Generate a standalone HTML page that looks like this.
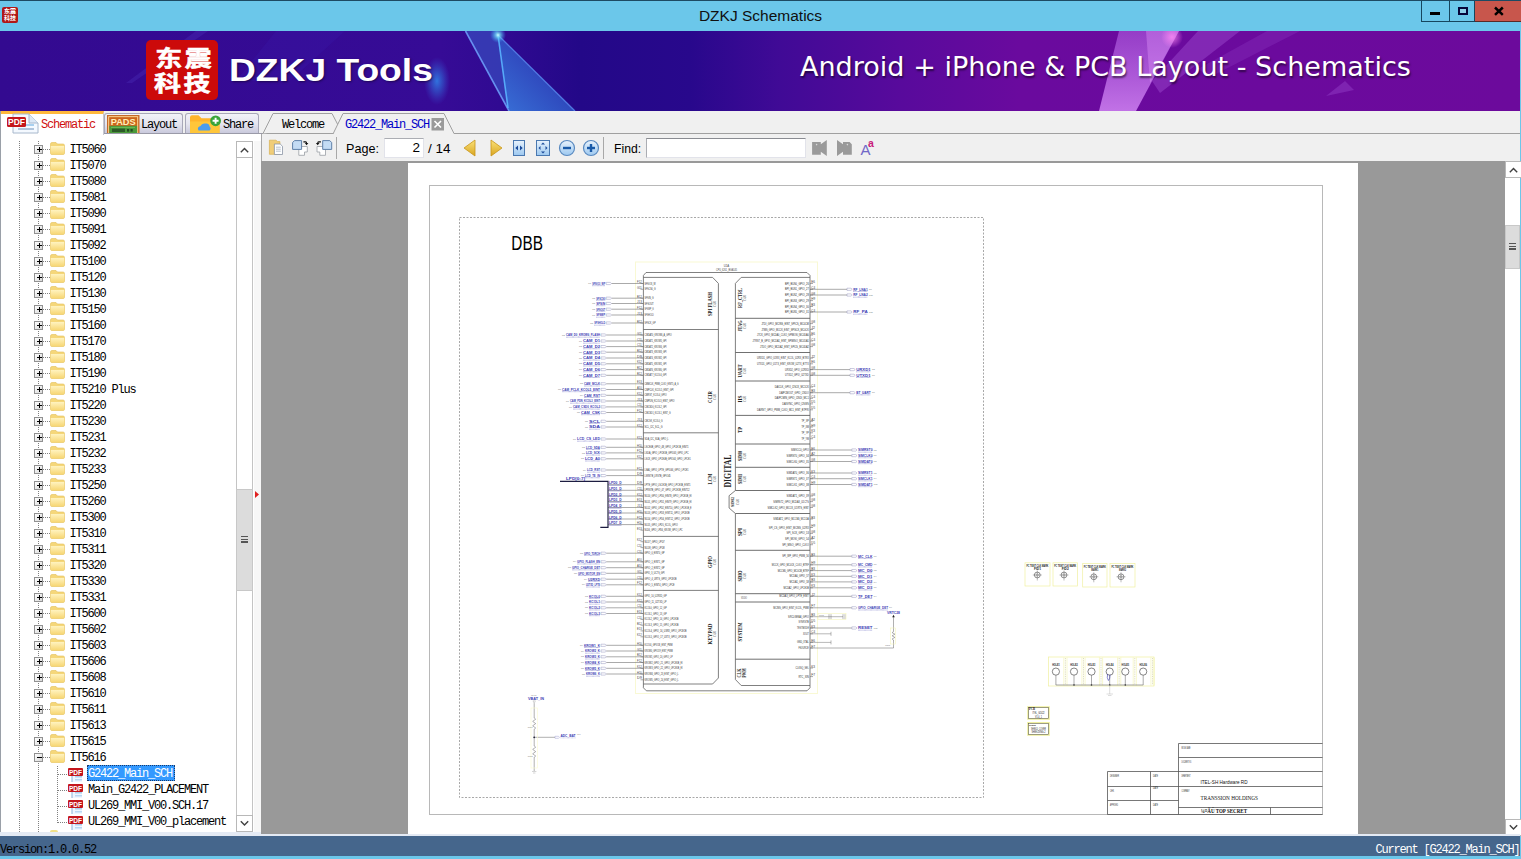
<!DOCTYPE html><html><head><meta charset="utf-8"><title>DZKJ Schematics</title><style>
html,body{margin:0;padding:0}
body{width:1521px;height:859px;overflow:hidden;position:relative;background:#6bc7ea;font-family:"Liberation Sans",sans-serif;}
.abs{position:absolute}
.mono{font-family:"Liberation Mono",monospace;font-size:12px;letter-spacing:-1.2px;white-space:nowrap;line-height:16px}
#titlebar{left:0;top:0;width:1521px;height:31px;background:#6bc7ea;border-top:1px solid #1d4a63;box-sizing:border-box}
#title{left:0;top:7px;width:1521px;text-align:center;font-size:15.5px;color:#101010;line-height:18px}
#banner{left:0;top:31px;width:1520px;height:80px;overflow:hidden;background:linear-gradient(90deg,#330a90 0,#360b96 440px,#300a92 500px,#230888 580px,#28088c 690px,#400a96 780px,#580a9c 900px,#6a0a9e 1020px,#6c0a9c 1520px)}
#main{left:0;top:111px;width:1520px;height:725px;background:#f0f0f0}
#status{left:0;top:836px;width:1520px;height:20px;background:#45668c}
</style></head><body>
<div class="abs" id="titlebar"></div>
<div class="abs" id="title">DZKJ Schematics</div>
<div class="abs" style="left:2px;top:7px;width:16px;height:16px;background:#b01818;border-radius:2px;color:#fff;font:bold 6px/7px 'Liberation Sans','Noto Sans CJK SC',sans-serif;text-align:center;overflow:hidden;padding-top:1px;box-sizing:border-box"><div style="transform:scale(1.0);letter-spacing:0">东震<br>科技</div></div>
<div class="abs" style="left:1421px;top:1px;width:54px;height:21px;border:1px solid #16465e;border-top:none;box-sizing:border-box"></div>
<div class="abs" style="left:1449px;top:1px;width:1px;height:21px;background:#16465e"></div>
<div class="abs" style="left:1475px;top:1px;width:46px;height:21px;background:#c8564c;border-bottom:1px solid #5a2a26;box-sizing:border-box"></div>
<div class="abs" style="left:1430px;top:12px;width:10px;height:3px;background:#000"></div>
<div class="abs" style="left:1458px;top:7px;width:10px;height:8px;border:2px solid #06063a;box-sizing:border-box;background:#8fd0ea"></div>
<svg class="abs" style="left:1493px;top:6px" width="12" height="10" viewBox="0 0 12 10"><path d="M2 1.5 L9.8 8.8 M9.8 1.5 L2 8.8" stroke="#000" stroke-width="2.5" fill="none"/></svg>
<div class="abs" id="banner">
<svg class="abs" style="left:0;top:0" width="1520" height="80" viewBox="0 0 1520 80"><defs><linearGradient id="g1" x1="1" y1="0" x2="0" y2="1"><stop offset="0" stop-color="#2a44c0" stop-opacity=".6"/><stop offset="1" stop-color="#3a84e4" stop-opacity=".85"/></linearGradient><radialGradient id="g5"><stop offset="0" stop-color="#c8ffff" stop-opacity="1"/><stop offset=".35" stop-color="#6ad8f8" stop-opacity=".7"/><stop offset="1" stop-color="#3aa0ff" stop-opacity="0"/></radialGradient><linearGradient id="g2" x1="0" y1="0" x2="0" y2="1"><stop offset="0" stop-color="#c070f0" stop-opacity=".5"/><stop offset="1" stop-color="#d78cf8" stop-opacity=".8"/></linearGradient><radialGradient id="g3"><stop offset="0" stop-color="#2f8cf0" stop-opacity=".8"/><stop offset=".5" stop-color="#2f80e8" stop-opacity=".4"/><stop offset="1" stop-color="#3a60e0" stop-opacity="0"/></radialGradient><radialGradient id="g4"><stop offset="0" stop-color="#ff8af4" stop-opacity=".8"/><stop offset="1" stop-color="#ff8af4" stop-opacity="0"/></radialGradient></defs><polygon points="196,0 208,0 132,52 126,52" fill="#5a4ad0" opacity=".22"/><polygon points="276,0 345,0 290,50 236,50" fill="#3a22b0" opacity=".22"/><ellipse cx="437" cy="50" rx="13" ry="24" fill="url(#g3)"/><polygon points="465.5,0 497.5,0 498,4 507.3,74 509,80" fill="#3a5ecc" opacity=".55"/><polygon points="498,4 575,80 509,80 507.3,74" fill="url(#g1)"/><path d="M465.5 0 L509 80" stroke="#6c9cf8" stroke-width="1.6" opacity=".9" fill="none"/><path d="M498 4 L508 77" stroke="#5ab4ff" stroke-width="1.6" opacity=".9" fill="none"/><path d="M498 4 L575 80" stroke="#5a8cf0" stroke-width="1.3" opacity=".8" fill="none"/><circle cx="498" cy="4" r="8" fill="url(#g5)"/><polygon points="1119,0 1179,0 1136,80 1099,80" fill="url(#g2)"/><polygon points="1146,0 1179,0 1150,52" fill="#e9a0ff" opacity=".35"/><circle cx="1172" cy="6" r="11" fill="url(#g4)"/><polygon points="1198,0 1240,0 1160,62 1152,50" fill="#b060e0" opacity=".35"/><polygon points="1267,0 1300,0 1210,46 1198,38" fill="#a050d8" opacity=".22"/><polygon points="1326,65 1345,50 1354,59" fill="#9a48d0" opacity=".4"/></svg>
<div class="abs" style="left:146px;top:9px;width:72px;height:60px;background:#cc0a0a;border-radius:5px"></div>
<div class="abs" style="left:133.5px;top:10.2px;width:100px;height:60.4px;color:#fff;font:bold 27px/30.2px 'Liberation Sans','Noto Sans CJK SC',sans-serif;letter-spacing:2.6px;text-indent:2.6px;text-align:center;white-space:nowrap;transform:scaleY(.82);transform-origin:50% 50%;-webkit-text-stroke:.7px #fff">东震<br>科技</div>
<div class="abs" id="dzkj" style="left:229.4px;top:18.5px;color:#fff;font:bold 32px/40px 'Liberation Sans',sans-serif;white-space:nowrap;transform:scaleX(1.162);transform-origin:0 50%;text-shadow:1px 1px 2px rgba(0,0,0,.45)">DZKJ Tools</div>
<div class="abs" id="slogan" style="left:800px;top:16px;color:#fff;font:27px/40px 'DejaVu Sans','Liberation Sans',sans-serif;letter-spacing:0.02px;white-space:nowrap;text-shadow:1px 2px 2px rgba(0,0,0,.55)">Android + iPhone &amp; PCB Layout - Schematics</div>
</div>
<div class="abs" id="main"></div>
<div class="abs" style="left:0;top:134px;width:254px;height:698px;background:#fff"></div>
<div class="abs" style="left:254px;top:134px;width:7px;height:7px;background:#fff"></div>
<div class="abs" style="left:0;top:111px;width:1px;height:721px;background:#9aa0a8"></div>
<div class="abs" style="left:1px;top:111px;width:103px;height:24px;background:#fff;border-top:3px solid #ffb83c;box-sizing:border-box;border-right:1px solid #c8c8d0"></div>
<div class="abs mono" style="left:41px;top:116.5px;color:#d01010">Schematic</div>
<svg class="abs" style="left:6px;top:112px" width="36" height="22" viewBox="0 0 36 22"><path d="M7 2 H23 L32 11 V21 H7 Z" fill="#f4f9ff" stroke="#a8b8cc" stroke-width="1"/><path d="M23 2 V11 H32" fill="#dbe8f6" stroke="#a8b8cc" stroke-width="1"/><rect x="12" y="12" width="16" height="2" fill="#a8d0f0"/><rect x="12" y="16" width="16" height="2" fill="#b0c4dc"/><rect x="1" y="5" width="19" height="10" rx="1.5" fill="#c4161c"/><text x="10.5" y="13" font-family="Liberation Sans, sans-serif" font-weight="bold" font-size="8.5" fill="#fff" text-anchor="middle">PDF</text></svg>
<div class="abs" style="left:104px;top:113px;width:79px;height:21px;border:1px solid #a8a8b8;border-bottom:none;border-radius:3px 3px 0 0;background:linear-gradient(#f2f2f8,#e4e4ee 50%,#c6c6da);box-sizing:border-box"></div>
<div class="abs" style="left:185px;top:113px;width:74px;height:21px;border:1px solid #a8a8b8;border-bottom:none;border-radius:3px 3px 0 0;background:linear-gradient(#f2f2f8,#e4e4ee 50%,#c6c6da);box-sizing:border-box"></div>
<div class="abs mono" style="left:141px;top:117px;color:#000">Layout</div>
<div class="abs mono" style="left:223px;top:117px;color:#000">Share</div>
<svg class="abs" style="left:107px;top:115px" width="33" height="19" viewBox="0 0 33 19"><rect x="0.5" y="0.5" width="31.5" height="20" fill="#cc641c" stroke="#c46a28"/><rect x="1.7" y="1.7" width="29" height="18" fill="none" stroke="#ffe2a0" stroke-width=".9"/><text x="16.2" y="9.6" font-family="Liberation Sans, sans-serif" font-weight="bold" font-size="9.6" fill="#ffeeb8" text-anchor="middle" textLength="25" lengthAdjust="spacingAndGlyphs">PADS</text><rect x="2.3" y="10.8" width="27.8" height="8.2" fill="#4a9a3a"/><rect x="5" y="13.6" width="13" height="3.4" fill="#2c5a28"/><rect x="20" y="14" width="2.2" height="2.6" fill="#234a22"/><rect x="23.5" y="14" width="2.2" height="2.6" fill="#234a22"/><path d="M4 12.4 H28" stroke="#7ac060" stroke-width=".8"/></svg>
<svg class="abs" style="left:189px;top:114px" width="34" height="20" viewBox="0 0 34 20"><path d="M1 3.3 Q1 1.3 3 1.3 H9.5 L12.5 4.3 H28 Q30.5 4.3 30.5 6.5 V20 H1 Z" fill="#ffb42c"/><path d="M1 7.5 H30.5 V20 H1 Z" fill="#ffc63a"/><path d="M9.5 16.6 Q7.5 13.2 11.5 12 Q13 8.8 16.5 9.6 Q20 9 20.6 12.4 Q22.6 14.2 20.6 16.6 Z" fill="#4a9cee"/><circle cx="26.6" cy="6.8" r="5.4" fill="#3aa43a"/><path d="M26.6 3.8 V9.8 M23.6 6.8 H29.6" stroke="#fff" stroke-width="1.9"/></svg>
<div class="abs" style="left:262px;top:133px;width:1258px;height:1px;background:#a0a0a0"></div>
<svg class="abs" style="left:260px;top:111px" width="200" height="24" viewBox="0 0 200 24"><path d="M3 22.5 L13 2.5 H72 L78 14" fill="#f0f0f0" stroke="#a0a0a0" stroke-width="1"/><path d="M73 23 L83 2.5 H184 L194 22.5" fill="#f0f0f0" stroke="#a0a0a0" stroke-width="1"/><rect x="74" y="22" width="119.5" height="2" fill="#f0f0f0"/><rect x="171.5" y="7" width="12.5" height="12.5" fill="#9a9a9a"/><path d="M174.5 10 L181 16.5 M181 10 L174.5 16.5" stroke="#fff" stroke-width="1.6"/></svg>
<div class="abs mono" style="left:282px;top:117px;color:#000">Welcome</div>
<div class="abs mono" style="left:345px;top:117px;color:#0000c8">G2422_Main_SCH</div>
<div class="abs" style="left:262px;top:134px;width:1258px;height:27px;background:#f0f0f0"></div>
<div class="abs" style="left:346px;top:141px;font:13.5px/16px 'Liberation Sans',sans-serif;color:#000;white-space:nowrap;font-size:12.6px">Page:</div>
<div class="abs" style="left:384px;top:138px;width:40px;height:20px;background:#fff;border:1px solid #abadb3;border-color:#abadb3 #e2e3ea #e2e3ea #e2e3ea;box-sizing:border-box"></div>
<div class="abs" style="left:384px;top:140px;width:36px;text-align:right;font:13.5px/16px 'Liberation Sans',sans-serif;color:#000;white-space:nowrap">2</div>
<div class="abs" style="left:428px;top:141px;font:13.5px/16px 'Liberation Sans',sans-serif;color:#000;white-space:nowrap">/ 14</div>
<div class="abs" style="left:336px;top:137px;width:1px;height:22px;background:#a8a8a8"></div>
<div class="abs" style="left:603px;top:137px;width:1px;height:22px;background:#a8a8a8"></div>
<div class="abs" style="left:614px;top:141px;font:13.5px/16px 'Liberation Sans',sans-serif;color:#000;white-space:nowrap;font-size:12.2px">Find:</div>
<div class="abs" style="left:646px;top:138px;width:160px;height:20px;background:#fff;border:1px solid #abadb3;border-color:#8a8c92 #e2e3ea #e2e3ea #abadb3;box-sizing:border-box"></div>
<svg class="abs" style="left:262px;top:134px" width="640" height="27" viewBox="0 0 640 27"><defs><linearGradient id="gy" x1="0" y1="0" x2="0" y2="1"><stop offset="0" stop-color="#fbe27a"/><stop offset="1" stop-color="#d9a520"/></linearGradient><linearGradient id="gb" x1="0" y1="0" x2="0" y2="1"><stop offset="0" stop-color="#e8f2fc"/><stop offset="1" stop-color="#9cc8f0"/></linearGradient></defs><path d="M7.4 6.2 H14 L15.5 7.6 H17.9 V20.3 H7.4 Z" fill="#f0cd78" stroke="#d8b050" stroke-width=".7"/><path d="M12.4 10 H18.2 L20.5 12.3 V20.5 H12.4 Z" fill="#fdfeff" stroke="#8a94a4" stroke-width=".8"/><path d="M14 13.2 H18.8 M14 15.2 H18.8 M14 17.2 H18.8" stroke="#a8b4c4" stroke-width=".8"/><path d="M36.8 12.5 H45.3 V18 H42.5 V21.3 H36.8 Z" fill="#fff" stroke="#a4a8ae" stroke-width=".9"/><path d="M32.5 6.6 H39.6 V15.4 H30.6 V8.6 Z" fill="#c4dcf4" stroke="#5f80a8" stroke-width="1"/><path d="M41.4 7.9 H43.6 Q44.6 7.9 44.6 9.2" stroke="#111" stroke-width="1.1" fill="none"/><path d="M42.8 9 H46.4 L44.6 11.2 Z" fill="#111"/><path d="M63.5 12.5 H55 V18 H57.8 V21.3 H63.5 Z" fill="#fff" stroke="#a4a8ae" stroke-width=".9"/><path d="M60.7 6.6 H67.8 L69.7 8.6 V15.4 H60.7 Z" fill="#c4dcf4" stroke="#5f80a8" stroke-width="1"/><path d="M58.9 7.9 H56.7 Q55.7 7.9 55.7 9.2" stroke="#111" stroke-width="1.1" fill="none"/><path d="M57.5 9 H53.9 L55.7 11.2 Z" fill="#111"/><path d="M213 6 V22 L202 14 Z" fill="url(#gy)" stroke="#c8961a" stroke-width=".8"/><path d="M229 6 V22 L240 14 Z" fill="url(#gy)" stroke="#c8961a" stroke-width=".8"/><rect x="251.5" y="6.5" width="11" height="15" fill="url(#gb)" stroke="#4a78b0" stroke-width="1"/><path d="M256 11.5 V16.5 L253.3 14 Z M258 11.5 V16.5 L260.7 14 Z" fill="#1a4a9a"/><rect x="274.5" y="6.5" width="13" height="15" fill="url(#gb)" stroke="#4a78b0" stroke-width="1"/><path d="M281 8.5 L283 10.5 H279 Z M281 19.5 L283 17.5 H279 Z M276.5 14 L278.5 12 V16 Z M285.5 14 L283.5 12 V16 Z" fill="#1a4a9a"/><circle cx="305" cy="14" r="7.5" fill="url(#gb)" stroke="#5a8ac0" stroke-width="1.2"/><rect x="301" y="12.8" width="8" height="2.4" fill="#1a5aa8"/><circle cx="329" cy="14" r="7.5" fill="url(#gb)" stroke="#5a8ac0" stroke-width="1.2"/><rect x="325" y="12.8" width="8" height="2.4" fill="#1a5aa8"/><rect x="327.8" y="10" width="2.4" height="8" fill="#1a5aa8"/><path d="M550.1 8 H558.8 V10.2 L564.8 6 V22 L558.8 17.8 V20.7 H550.1 Z" fill="#9a9a9a"/><circle cx="554.6" cy="10.6" r=".8" fill="#d8d8d8"/><path d="M575 6 L581 10.2 V8 H587.6 L589.8 10.2 V20.7 H581 V17.8 L575 22 Z" fill="#9a9a9a"/><circle cx="585.4" cy="10.6" r=".8" fill="#d8d8d8"/><text x="598.6" y="21.2" font-family="Liberation Sans, sans-serif" font-size="15" fill="#7268c8">A</text><text x="606" y="13.4" font-family="Liberation Sans, sans-serif" font-size="10.5" font-weight="bold" fill="#c8207a">a</text></svg>
<div class="abs" id="tree" style="left:1px;top:141px;width:235px;height:691px;overflow:hidden;background:#fff">
<div class="abs" style="left:18px;top:0;width:1px;height:691px;background-image:linear-gradient(#808080 50%,transparent 50%);background-size:1px 2px"></div>
<div class="abs" style="left:37px;top:0;width:1px;height:691px;background-image:linear-gradient(#808080 50%,transparent 50%);background-size:1px 2px"></div>
<svg width="0" height="0" style="position:absolute"><defs><linearGradient id="gf" x1="0" y1="0" x2="0" y2="1"><stop offset="0" stop-color="#fff3c0"/><stop offset="1" stop-color="#f7d774"/></linearGradient></defs></svg>
<div class="abs" style="left:42px;top:8px;width:7px;height:1px;background-image:linear-gradient(90deg,#808080 50%,transparent 50%);background-size:2px 1px"></div>
<div class="abs" style="left:33px;top:4px;width:9px;height:9px;border:1px solid #919191;box-sizing:border-box;background:linear-gradient(135deg,#fff,#d8d8d8)"><div class="abs" style="left:2px;top:3px;width:5px;height:1px;background:#000"></div><div class="abs" style="left:4px;top:1px;width:1px;height:5px;background:#000"></div></div>
<svg class="abs" style="left:49px;top:1px" width="15" height="13" viewBox="0 0 15 13"><path d="M0.5 2 Q0.5 0.5 2 0.5 H6 L7.5 2 H13 Q14.5 2 14.5 3.5 V11 Q14.5 12.5 13 12.5 H2 Q0.5 12.5 0.5 11 Z" fill="#f5d77a" stroke="#e4c057" stroke-width=".6"/><path d="M0.8 4 H14.2 V11 Q14.2 12.2 13 12.2 H2 Q0.8 12.2 0.8 11 Z" fill="url(#gf)"/></svg>
<div class="abs mono" style="left:68.5px;top:1px;color:#000">IT5060</div>
<div class="abs" style="left:42px;top:24px;width:7px;height:1px;background-image:linear-gradient(90deg,#808080 50%,transparent 50%);background-size:2px 1px"></div>
<div class="abs" style="left:33px;top:20px;width:9px;height:9px;border:1px solid #919191;box-sizing:border-box;background:linear-gradient(135deg,#fff,#d8d8d8)"><div class="abs" style="left:2px;top:3px;width:5px;height:1px;background:#000"></div><div class="abs" style="left:4px;top:1px;width:1px;height:5px;background:#000"></div></div>
<svg class="abs" style="left:49px;top:17px" width="15" height="13" viewBox="0 0 15 13"><path d="M0.5 2 Q0.5 0.5 2 0.5 H6 L7.5 2 H13 Q14.5 2 14.5 3.5 V11 Q14.5 12.5 13 12.5 H2 Q0.5 12.5 0.5 11 Z" fill="#f5d77a" stroke="#e4c057" stroke-width=".6"/><path d="M0.8 4 H14.2 V11 Q14.2 12.2 13 12.2 H2 Q0.8 12.2 0.8 11 Z" fill="url(#gf)"/></svg>
<div class="abs mono" style="left:68.5px;top:17px;color:#000">IT5070</div>
<div class="abs" style="left:42px;top:40px;width:7px;height:1px;background-image:linear-gradient(90deg,#808080 50%,transparent 50%);background-size:2px 1px"></div>
<div class="abs" style="left:33px;top:36px;width:9px;height:9px;border:1px solid #919191;box-sizing:border-box;background:linear-gradient(135deg,#fff,#d8d8d8)"><div class="abs" style="left:2px;top:3px;width:5px;height:1px;background:#000"></div><div class="abs" style="left:4px;top:1px;width:1px;height:5px;background:#000"></div></div>
<svg class="abs" style="left:49px;top:33px" width="15" height="13" viewBox="0 0 15 13"><path d="M0.5 2 Q0.5 0.5 2 0.5 H6 L7.5 2 H13 Q14.5 2 14.5 3.5 V11 Q14.5 12.5 13 12.5 H2 Q0.5 12.5 0.5 11 Z" fill="#f5d77a" stroke="#e4c057" stroke-width=".6"/><path d="M0.8 4 H14.2 V11 Q14.2 12.2 13 12.2 H2 Q0.8 12.2 0.8 11 Z" fill="url(#gf)"/></svg>
<div class="abs mono" style="left:68.5px;top:33px;color:#000">IT5080</div>
<div class="abs" style="left:42px;top:56px;width:7px;height:1px;background-image:linear-gradient(90deg,#808080 50%,transparent 50%);background-size:2px 1px"></div>
<div class="abs" style="left:33px;top:52px;width:9px;height:9px;border:1px solid #919191;box-sizing:border-box;background:linear-gradient(135deg,#fff,#d8d8d8)"><div class="abs" style="left:2px;top:3px;width:5px;height:1px;background:#000"></div><div class="abs" style="left:4px;top:1px;width:1px;height:5px;background:#000"></div></div>
<svg class="abs" style="left:49px;top:49px" width="15" height="13" viewBox="0 0 15 13"><path d="M0.5 2 Q0.5 0.5 2 0.5 H6 L7.5 2 H13 Q14.5 2 14.5 3.5 V11 Q14.5 12.5 13 12.5 H2 Q0.5 12.5 0.5 11 Z" fill="#f5d77a" stroke="#e4c057" stroke-width=".6"/><path d="M0.8 4 H14.2 V11 Q14.2 12.2 13 12.2 H2 Q0.8 12.2 0.8 11 Z" fill="url(#gf)"/></svg>
<div class="abs mono" style="left:68.5px;top:49px;color:#000">IT5081</div>
<div class="abs" style="left:42px;top:72px;width:7px;height:1px;background-image:linear-gradient(90deg,#808080 50%,transparent 50%);background-size:2px 1px"></div>
<div class="abs" style="left:33px;top:68px;width:9px;height:9px;border:1px solid #919191;box-sizing:border-box;background:linear-gradient(135deg,#fff,#d8d8d8)"><div class="abs" style="left:2px;top:3px;width:5px;height:1px;background:#000"></div><div class="abs" style="left:4px;top:1px;width:1px;height:5px;background:#000"></div></div>
<svg class="abs" style="left:49px;top:65px" width="15" height="13" viewBox="0 0 15 13"><path d="M0.5 2 Q0.5 0.5 2 0.5 H6 L7.5 2 H13 Q14.5 2 14.5 3.5 V11 Q14.5 12.5 13 12.5 H2 Q0.5 12.5 0.5 11 Z" fill="#f5d77a" stroke="#e4c057" stroke-width=".6"/><path d="M0.8 4 H14.2 V11 Q14.2 12.2 13 12.2 H2 Q0.8 12.2 0.8 11 Z" fill="url(#gf)"/></svg>
<div class="abs mono" style="left:68.5px;top:65px;color:#000">IT5090</div>
<div class="abs" style="left:42px;top:88px;width:7px;height:1px;background-image:linear-gradient(90deg,#808080 50%,transparent 50%);background-size:2px 1px"></div>
<div class="abs" style="left:33px;top:84px;width:9px;height:9px;border:1px solid #919191;box-sizing:border-box;background:linear-gradient(135deg,#fff,#d8d8d8)"><div class="abs" style="left:2px;top:3px;width:5px;height:1px;background:#000"></div><div class="abs" style="left:4px;top:1px;width:1px;height:5px;background:#000"></div></div>
<svg class="abs" style="left:49px;top:81px" width="15" height="13" viewBox="0 0 15 13"><path d="M0.5 2 Q0.5 0.5 2 0.5 H6 L7.5 2 H13 Q14.5 2 14.5 3.5 V11 Q14.5 12.5 13 12.5 H2 Q0.5 12.5 0.5 11 Z" fill="#f5d77a" stroke="#e4c057" stroke-width=".6"/><path d="M0.8 4 H14.2 V11 Q14.2 12.2 13 12.2 H2 Q0.8 12.2 0.8 11 Z" fill="url(#gf)"/></svg>
<div class="abs mono" style="left:68.5px;top:81px;color:#000">IT5091</div>
<div class="abs" style="left:42px;top:104px;width:7px;height:1px;background-image:linear-gradient(90deg,#808080 50%,transparent 50%);background-size:2px 1px"></div>
<div class="abs" style="left:33px;top:100px;width:9px;height:9px;border:1px solid #919191;box-sizing:border-box;background:linear-gradient(135deg,#fff,#d8d8d8)"><div class="abs" style="left:2px;top:3px;width:5px;height:1px;background:#000"></div><div class="abs" style="left:4px;top:1px;width:1px;height:5px;background:#000"></div></div>
<svg class="abs" style="left:49px;top:97px" width="15" height="13" viewBox="0 0 15 13"><path d="M0.5 2 Q0.5 0.5 2 0.5 H6 L7.5 2 H13 Q14.5 2 14.5 3.5 V11 Q14.5 12.5 13 12.5 H2 Q0.5 12.5 0.5 11 Z" fill="#f5d77a" stroke="#e4c057" stroke-width=".6"/><path d="M0.8 4 H14.2 V11 Q14.2 12.2 13 12.2 H2 Q0.8 12.2 0.8 11 Z" fill="url(#gf)"/></svg>
<div class="abs mono" style="left:68.5px;top:97px;color:#000">IT5092</div>
<div class="abs" style="left:42px;top:120px;width:7px;height:1px;background-image:linear-gradient(90deg,#808080 50%,transparent 50%);background-size:2px 1px"></div>
<div class="abs" style="left:33px;top:116px;width:9px;height:9px;border:1px solid #919191;box-sizing:border-box;background:linear-gradient(135deg,#fff,#d8d8d8)"><div class="abs" style="left:2px;top:3px;width:5px;height:1px;background:#000"></div><div class="abs" style="left:4px;top:1px;width:1px;height:5px;background:#000"></div></div>
<svg class="abs" style="left:49px;top:113px" width="15" height="13" viewBox="0 0 15 13"><path d="M0.5 2 Q0.5 0.5 2 0.5 H6 L7.5 2 H13 Q14.5 2 14.5 3.5 V11 Q14.5 12.5 13 12.5 H2 Q0.5 12.5 0.5 11 Z" fill="#f5d77a" stroke="#e4c057" stroke-width=".6"/><path d="M0.8 4 H14.2 V11 Q14.2 12.2 13 12.2 H2 Q0.8 12.2 0.8 11 Z" fill="url(#gf)"/></svg>
<div class="abs mono" style="left:68.5px;top:113px;color:#000">IT5100</div>
<div class="abs" style="left:42px;top:136px;width:7px;height:1px;background-image:linear-gradient(90deg,#808080 50%,transparent 50%);background-size:2px 1px"></div>
<div class="abs" style="left:33px;top:132px;width:9px;height:9px;border:1px solid #919191;box-sizing:border-box;background:linear-gradient(135deg,#fff,#d8d8d8)"><div class="abs" style="left:2px;top:3px;width:5px;height:1px;background:#000"></div><div class="abs" style="left:4px;top:1px;width:1px;height:5px;background:#000"></div></div>
<svg class="abs" style="left:49px;top:129px" width="15" height="13" viewBox="0 0 15 13"><path d="M0.5 2 Q0.5 0.5 2 0.5 H6 L7.5 2 H13 Q14.5 2 14.5 3.5 V11 Q14.5 12.5 13 12.5 H2 Q0.5 12.5 0.5 11 Z" fill="#f5d77a" stroke="#e4c057" stroke-width=".6"/><path d="M0.8 4 H14.2 V11 Q14.2 12.2 13 12.2 H2 Q0.8 12.2 0.8 11 Z" fill="url(#gf)"/></svg>
<div class="abs mono" style="left:68.5px;top:129px;color:#000">IT5120</div>
<div class="abs" style="left:42px;top:152px;width:7px;height:1px;background-image:linear-gradient(90deg,#808080 50%,transparent 50%);background-size:2px 1px"></div>
<div class="abs" style="left:33px;top:148px;width:9px;height:9px;border:1px solid #919191;box-sizing:border-box;background:linear-gradient(135deg,#fff,#d8d8d8)"><div class="abs" style="left:2px;top:3px;width:5px;height:1px;background:#000"></div><div class="abs" style="left:4px;top:1px;width:1px;height:5px;background:#000"></div></div>
<svg class="abs" style="left:49px;top:145px" width="15" height="13" viewBox="0 0 15 13"><path d="M0.5 2 Q0.5 0.5 2 0.5 H6 L7.5 2 H13 Q14.5 2 14.5 3.5 V11 Q14.5 12.5 13 12.5 H2 Q0.5 12.5 0.5 11 Z" fill="#f5d77a" stroke="#e4c057" stroke-width=".6"/><path d="M0.8 4 H14.2 V11 Q14.2 12.2 13 12.2 H2 Q0.8 12.2 0.8 11 Z" fill="url(#gf)"/></svg>
<div class="abs mono" style="left:68.5px;top:145px;color:#000">IT5130</div>
<div class="abs" style="left:42px;top:168px;width:7px;height:1px;background-image:linear-gradient(90deg,#808080 50%,transparent 50%);background-size:2px 1px"></div>
<div class="abs" style="left:33px;top:164px;width:9px;height:9px;border:1px solid #919191;box-sizing:border-box;background:linear-gradient(135deg,#fff,#d8d8d8)"><div class="abs" style="left:2px;top:3px;width:5px;height:1px;background:#000"></div><div class="abs" style="left:4px;top:1px;width:1px;height:5px;background:#000"></div></div>
<svg class="abs" style="left:49px;top:161px" width="15" height="13" viewBox="0 0 15 13"><path d="M0.5 2 Q0.5 0.5 2 0.5 H6 L7.5 2 H13 Q14.5 2 14.5 3.5 V11 Q14.5 12.5 13 12.5 H2 Q0.5 12.5 0.5 11 Z" fill="#f5d77a" stroke="#e4c057" stroke-width=".6"/><path d="M0.8 4 H14.2 V11 Q14.2 12.2 13 12.2 H2 Q0.8 12.2 0.8 11 Z" fill="url(#gf)"/></svg>
<div class="abs mono" style="left:68.5px;top:161px;color:#000">IT5150</div>
<div class="abs" style="left:42px;top:184px;width:7px;height:1px;background-image:linear-gradient(90deg,#808080 50%,transparent 50%);background-size:2px 1px"></div>
<div class="abs" style="left:33px;top:180px;width:9px;height:9px;border:1px solid #919191;box-sizing:border-box;background:linear-gradient(135deg,#fff,#d8d8d8)"><div class="abs" style="left:2px;top:3px;width:5px;height:1px;background:#000"></div><div class="abs" style="left:4px;top:1px;width:1px;height:5px;background:#000"></div></div>
<svg class="abs" style="left:49px;top:177px" width="15" height="13" viewBox="0 0 15 13"><path d="M0.5 2 Q0.5 0.5 2 0.5 H6 L7.5 2 H13 Q14.5 2 14.5 3.5 V11 Q14.5 12.5 13 12.5 H2 Q0.5 12.5 0.5 11 Z" fill="#f5d77a" stroke="#e4c057" stroke-width=".6"/><path d="M0.8 4 H14.2 V11 Q14.2 12.2 13 12.2 H2 Q0.8 12.2 0.8 11 Z" fill="url(#gf)"/></svg>
<div class="abs mono" style="left:68.5px;top:177px;color:#000">IT5160</div>
<div class="abs" style="left:42px;top:200px;width:7px;height:1px;background-image:linear-gradient(90deg,#808080 50%,transparent 50%);background-size:2px 1px"></div>
<div class="abs" style="left:33px;top:196px;width:9px;height:9px;border:1px solid #919191;box-sizing:border-box;background:linear-gradient(135deg,#fff,#d8d8d8)"><div class="abs" style="left:2px;top:3px;width:5px;height:1px;background:#000"></div><div class="abs" style="left:4px;top:1px;width:1px;height:5px;background:#000"></div></div>
<svg class="abs" style="left:49px;top:193px" width="15" height="13" viewBox="0 0 15 13"><path d="M0.5 2 Q0.5 0.5 2 0.5 H6 L7.5 2 H13 Q14.5 2 14.5 3.5 V11 Q14.5 12.5 13 12.5 H2 Q0.5 12.5 0.5 11 Z" fill="#f5d77a" stroke="#e4c057" stroke-width=".6"/><path d="M0.8 4 H14.2 V11 Q14.2 12.2 13 12.2 H2 Q0.8 12.2 0.8 11 Z" fill="url(#gf)"/></svg>
<div class="abs mono" style="left:68.5px;top:193px;color:#000">IT5170</div>
<div class="abs" style="left:42px;top:216px;width:7px;height:1px;background-image:linear-gradient(90deg,#808080 50%,transparent 50%);background-size:2px 1px"></div>
<div class="abs" style="left:33px;top:212px;width:9px;height:9px;border:1px solid #919191;box-sizing:border-box;background:linear-gradient(135deg,#fff,#d8d8d8)"><div class="abs" style="left:2px;top:3px;width:5px;height:1px;background:#000"></div><div class="abs" style="left:4px;top:1px;width:1px;height:5px;background:#000"></div></div>
<svg class="abs" style="left:49px;top:209px" width="15" height="13" viewBox="0 0 15 13"><path d="M0.5 2 Q0.5 0.5 2 0.5 H6 L7.5 2 H13 Q14.5 2 14.5 3.5 V11 Q14.5 12.5 13 12.5 H2 Q0.5 12.5 0.5 11 Z" fill="#f5d77a" stroke="#e4c057" stroke-width=".6"/><path d="M0.8 4 H14.2 V11 Q14.2 12.2 13 12.2 H2 Q0.8 12.2 0.8 11 Z" fill="url(#gf)"/></svg>
<div class="abs mono" style="left:68.5px;top:209px;color:#000">IT5180</div>
<div class="abs" style="left:42px;top:232px;width:7px;height:1px;background-image:linear-gradient(90deg,#808080 50%,transparent 50%);background-size:2px 1px"></div>
<div class="abs" style="left:33px;top:228px;width:9px;height:9px;border:1px solid #919191;box-sizing:border-box;background:linear-gradient(135deg,#fff,#d8d8d8)"><div class="abs" style="left:2px;top:3px;width:5px;height:1px;background:#000"></div><div class="abs" style="left:4px;top:1px;width:1px;height:5px;background:#000"></div></div>
<svg class="abs" style="left:49px;top:225px" width="15" height="13" viewBox="0 0 15 13"><path d="M0.5 2 Q0.5 0.5 2 0.5 H6 L7.5 2 H13 Q14.5 2 14.5 3.5 V11 Q14.5 12.5 13 12.5 H2 Q0.5 12.5 0.5 11 Z" fill="#f5d77a" stroke="#e4c057" stroke-width=".6"/><path d="M0.8 4 H14.2 V11 Q14.2 12.2 13 12.2 H2 Q0.8 12.2 0.8 11 Z" fill="url(#gf)"/></svg>
<div class="abs mono" style="left:68.5px;top:225px;color:#000">IT5190</div>
<div class="abs" style="left:42px;top:248px;width:7px;height:1px;background-image:linear-gradient(90deg,#808080 50%,transparent 50%);background-size:2px 1px"></div>
<div class="abs" style="left:33px;top:244px;width:9px;height:9px;border:1px solid #919191;box-sizing:border-box;background:linear-gradient(135deg,#fff,#d8d8d8)"><div class="abs" style="left:2px;top:3px;width:5px;height:1px;background:#000"></div><div class="abs" style="left:4px;top:1px;width:1px;height:5px;background:#000"></div></div>
<svg class="abs" style="left:49px;top:241px" width="15" height="13" viewBox="0 0 15 13"><path d="M0.5 2 Q0.5 0.5 2 0.5 H6 L7.5 2 H13 Q14.5 2 14.5 3.5 V11 Q14.5 12.5 13 12.5 H2 Q0.5 12.5 0.5 11 Z" fill="#f5d77a" stroke="#e4c057" stroke-width=".6"/><path d="M0.8 4 H14.2 V11 Q14.2 12.2 13 12.2 H2 Q0.8 12.2 0.8 11 Z" fill="url(#gf)"/></svg>
<div class="abs mono" style="left:68.5px;top:241px;color:#000">IT5210 Plus</div>
<div class="abs" style="left:42px;top:264px;width:7px;height:1px;background-image:linear-gradient(90deg,#808080 50%,transparent 50%);background-size:2px 1px"></div>
<div class="abs" style="left:33px;top:260px;width:9px;height:9px;border:1px solid #919191;box-sizing:border-box;background:linear-gradient(135deg,#fff,#d8d8d8)"><div class="abs" style="left:2px;top:3px;width:5px;height:1px;background:#000"></div><div class="abs" style="left:4px;top:1px;width:1px;height:5px;background:#000"></div></div>
<svg class="abs" style="left:49px;top:257px" width="15" height="13" viewBox="0 0 15 13"><path d="M0.5 2 Q0.5 0.5 2 0.5 H6 L7.5 2 H13 Q14.5 2 14.5 3.5 V11 Q14.5 12.5 13 12.5 H2 Q0.5 12.5 0.5 11 Z" fill="#f5d77a" stroke="#e4c057" stroke-width=".6"/><path d="M0.8 4 H14.2 V11 Q14.2 12.2 13 12.2 H2 Q0.8 12.2 0.8 11 Z" fill="url(#gf)"/></svg>
<div class="abs mono" style="left:68.5px;top:257px;color:#000">IT5220</div>
<div class="abs" style="left:42px;top:280px;width:7px;height:1px;background-image:linear-gradient(90deg,#808080 50%,transparent 50%);background-size:2px 1px"></div>
<div class="abs" style="left:33px;top:276px;width:9px;height:9px;border:1px solid #919191;box-sizing:border-box;background:linear-gradient(135deg,#fff,#d8d8d8)"><div class="abs" style="left:2px;top:3px;width:5px;height:1px;background:#000"></div><div class="abs" style="left:4px;top:1px;width:1px;height:5px;background:#000"></div></div>
<svg class="abs" style="left:49px;top:273px" width="15" height="13" viewBox="0 0 15 13"><path d="M0.5 2 Q0.5 0.5 2 0.5 H6 L7.5 2 H13 Q14.5 2 14.5 3.5 V11 Q14.5 12.5 13 12.5 H2 Q0.5 12.5 0.5 11 Z" fill="#f5d77a" stroke="#e4c057" stroke-width=".6"/><path d="M0.8 4 H14.2 V11 Q14.2 12.2 13 12.2 H2 Q0.8 12.2 0.8 11 Z" fill="url(#gf)"/></svg>
<div class="abs mono" style="left:68.5px;top:273px;color:#000">IT5230</div>
<div class="abs" style="left:42px;top:296px;width:7px;height:1px;background-image:linear-gradient(90deg,#808080 50%,transparent 50%);background-size:2px 1px"></div>
<div class="abs" style="left:33px;top:292px;width:9px;height:9px;border:1px solid #919191;box-sizing:border-box;background:linear-gradient(135deg,#fff,#d8d8d8)"><div class="abs" style="left:2px;top:3px;width:5px;height:1px;background:#000"></div><div class="abs" style="left:4px;top:1px;width:1px;height:5px;background:#000"></div></div>
<svg class="abs" style="left:49px;top:289px" width="15" height="13" viewBox="0 0 15 13"><path d="M0.5 2 Q0.5 0.5 2 0.5 H6 L7.5 2 H13 Q14.5 2 14.5 3.5 V11 Q14.5 12.5 13 12.5 H2 Q0.5 12.5 0.5 11 Z" fill="#f5d77a" stroke="#e4c057" stroke-width=".6"/><path d="M0.8 4 H14.2 V11 Q14.2 12.2 13 12.2 H2 Q0.8 12.2 0.8 11 Z" fill="url(#gf)"/></svg>
<div class="abs mono" style="left:68.5px;top:289px;color:#000">IT5231</div>
<div class="abs" style="left:42px;top:312px;width:7px;height:1px;background-image:linear-gradient(90deg,#808080 50%,transparent 50%);background-size:2px 1px"></div>
<div class="abs" style="left:33px;top:308px;width:9px;height:9px;border:1px solid #919191;box-sizing:border-box;background:linear-gradient(135deg,#fff,#d8d8d8)"><div class="abs" style="left:2px;top:3px;width:5px;height:1px;background:#000"></div><div class="abs" style="left:4px;top:1px;width:1px;height:5px;background:#000"></div></div>
<svg class="abs" style="left:49px;top:305px" width="15" height="13" viewBox="0 0 15 13"><path d="M0.5 2 Q0.5 0.5 2 0.5 H6 L7.5 2 H13 Q14.5 2 14.5 3.5 V11 Q14.5 12.5 13 12.5 H2 Q0.5 12.5 0.5 11 Z" fill="#f5d77a" stroke="#e4c057" stroke-width=".6"/><path d="M0.8 4 H14.2 V11 Q14.2 12.2 13 12.2 H2 Q0.8 12.2 0.8 11 Z" fill="url(#gf)"/></svg>
<div class="abs mono" style="left:68.5px;top:305px;color:#000">IT5232</div>
<div class="abs" style="left:42px;top:328px;width:7px;height:1px;background-image:linear-gradient(90deg,#808080 50%,transparent 50%);background-size:2px 1px"></div>
<div class="abs" style="left:33px;top:324px;width:9px;height:9px;border:1px solid #919191;box-sizing:border-box;background:linear-gradient(135deg,#fff,#d8d8d8)"><div class="abs" style="left:2px;top:3px;width:5px;height:1px;background:#000"></div><div class="abs" style="left:4px;top:1px;width:1px;height:5px;background:#000"></div></div>
<svg class="abs" style="left:49px;top:321px" width="15" height="13" viewBox="0 0 15 13"><path d="M0.5 2 Q0.5 0.5 2 0.5 H6 L7.5 2 H13 Q14.5 2 14.5 3.5 V11 Q14.5 12.5 13 12.5 H2 Q0.5 12.5 0.5 11 Z" fill="#f5d77a" stroke="#e4c057" stroke-width=".6"/><path d="M0.8 4 H14.2 V11 Q14.2 12.2 13 12.2 H2 Q0.8 12.2 0.8 11 Z" fill="url(#gf)"/></svg>
<div class="abs mono" style="left:68.5px;top:321px;color:#000">IT5233</div>
<div class="abs" style="left:42px;top:344px;width:7px;height:1px;background-image:linear-gradient(90deg,#808080 50%,transparent 50%);background-size:2px 1px"></div>
<div class="abs" style="left:33px;top:340px;width:9px;height:9px;border:1px solid #919191;box-sizing:border-box;background:linear-gradient(135deg,#fff,#d8d8d8)"><div class="abs" style="left:2px;top:3px;width:5px;height:1px;background:#000"></div><div class="abs" style="left:4px;top:1px;width:1px;height:5px;background:#000"></div></div>
<svg class="abs" style="left:49px;top:337px" width="15" height="13" viewBox="0 0 15 13"><path d="M0.5 2 Q0.5 0.5 2 0.5 H6 L7.5 2 H13 Q14.5 2 14.5 3.5 V11 Q14.5 12.5 13 12.5 H2 Q0.5 12.5 0.5 11 Z" fill="#f5d77a" stroke="#e4c057" stroke-width=".6"/><path d="M0.8 4 H14.2 V11 Q14.2 12.2 13 12.2 H2 Q0.8 12.2 0.8 11 Z" fill="url(#gf)"/></svg>
<div class="abs mono" style="left:68.5px;top:337px;color:#000">IT5250</div>
<div class="abs" style="left:42px;top:360px;width:7px;height:1px;background-image:linear-gradient(90deg,#808080 50%,transparent 50%);background-size:2px 1px"></div>
<div class="abs" style="left:33px;top:356px;width:9px;height:9px;border:1px solid #919191;box-sizing:border-box;background:linear-gradient(135deg,#fff,#d8d8d8)"><div class="abs" style="left:2px;top:3px;width:5px;height:1px;background:#000"></div><div class="abs" style="left:4px;top:1px;width:1px;height:5px;background:#000"></div></div>
<svg class="abs" style="left:49px;top:353px" width="15" height="13" viewBox="0 0 15 13"><path d="M0.5 2 Q0.5 0.5 2 0.5 H6 L7.5 2 H13 Q14.5 2 14.5 3.5 V11 Q14.5 12.5 13 12.5 H2 Q0.5 12.5 0.5 11 Z" fill="#f5d77a" stroke="#e4c057" stroke-width=".6"/><path d="M0.8 4 H14.2 V11 Q14.2 12.2 13 12.2 H2 Q0.8 12.2 0.8 11 Z" fill="url(#gf)"/></svg>
<div class="abs mono" style="left:68.5px;top:353px;color:#000">IT5260</div>
<div class="abs" style="left:42px;top:376px;width:7px;height:1px;background-image:linear-gradient(90deg,#808080 50%,transparent 50%);background-size:2px 1px"></div>
<div class="abs" style="left:33px;top:372px;width:9px;height:9px;border:1px solid #919191;box-sizing:border-box;background:linear-gradient(135deg,#fff,#d8d8d8)"><div class="abs" style="left:2px;top:3px;width:5px;height:1px;background:#000"></div><div class="abs" style="left:4px;top:1px;width:1px;height:5px;background:#000"></div></div>
<svg class="abs" style="left:49px;top:369px" width="15" height="13" viewBox="0 0 15 13"><path d="M0.5 2 Q0.5 0.5 2 0.5 H6 L7.5 2 H13 Q14.5 2 14.5 3.5 V11 Q14.5 12.5 13 12.5 H2 Q0.5 12.5 0.5 11 Z" fill="#f5d77a" stroke="#e4c057" stroke-width=".6"/><path d="M0.8 4 H14.2 V11 Q14.2 12.2 13 12.2 H2 Q0.8 12.2 0.8 11 Z" fill="url(#gf)"/></svg>
<div class="abs mono" style="left:68.5px;top:369px;color:#000">IT5300</div>
<div class="abs" style="left:42px;top:392px;width:7px;height:1px;background-image:linear-gradient(90deg,#808080 50%,transparent 50%);background-size:2px 1px"></div>
<div class="abs" style="left:33px;top:388px;width:9px;height:9px;border:1px solid #919191;box-sizing:border-box;background:linear-gradient(135deg,#fff,#d8d8d8)"><div class="abs" style="left:2px;top:3px;width:5px;height:1px;background:#000"></div><div class="abs" style="left:4px;top:1px;width:1px;height:5px;background:#000"></div></div>
<svg class="abs" style="left:49px;top:385px" width="15" height="13" viewBox="0 0 15 13"><path d="M0.5 2 Q0.5 0.5 2 0.5 H6 L7.5 2 H13 Q14.5 2 14.5 3.5 V11 Q14.5 12.5 13 12.5 H2 Q0.5 12.5 0.5 11 Z" fill="#f5d77a" stroke="#e4c057" stroke-width=".6"/><path d="M0.8 4 H14.2 V11 Q14.2 12.2 13 12.2 H2 Q0.8 12.2 0.8 11 Z" fill="url(#gf)"/></svg>
<div class="abs mono" style="left:68.5px;top:385px;color:#000">IT5310</div>
<div class="abs" style="left:42px;top:408px;width:7px;height:1px;background-image:linear-gradient(90deg,#808080 50%,transparent 50%);background-size:2px 1px"></div>
<div class="abs" style="left:33px;top:404px;width:9px;height:9px;border:1px solid #919191;box-sizing:border-box;background:linear-gradient(135deg,#fff,#d8d8d8)"><div class="abs" style="left:2px;top:3px;width:5px;height:1px;background:#000"></div><div class="abs" style="left:4px;top:1px;width:1px;height:5px;background:#000"></div></div>
<svg class="abs" style="left:49px;top:401px" width="15" height="13" viewBox="0 0 15 13"><path d="M0.5 2 Q0.5 0.5 2 0.5 H6 L7.5 2 H13 Q14.5 2 14.5 3.5 V11 Q14.5 12.5 13 12.5 H2 Q0.5 12.5 0.5 11 Z" fill="#f5d77a" stroke="#e4c057" stroke-width=".6"/><path d="M0.8 4 H14.2 V11 Q14.2 12.2 13 12.2 H2 Q0.8 12.2 0.8 11 Z" fill="url(#gf)"/></svg>
<div class="abs mono" style="left:68.5px;top:401px;color:#000">IT5311</div>
<div class="abs" style="left:42px;top:424px;width:7px;height:1px;background-image:linear-gradient(90deg,#808080 50%,transparent 50%);background-size:2px 1px"></div>
<div class="abs" style="left:33px;top:420px;width:9px;height:9px;border:1px solid #919191;box-sizing:border-box;background:linear-gradient(135deg,#fff,#d8d8d8)"><div class="abs" style="left:2px;top:3px;width:5px;height:1px;background:#000"></div><div class="abs" style="left:4px;top:1px;width:1px;height:5px;background:#000"></div></div>
<svg class="abs" style="left:49px;top:417px" width="15" height="13" viewBox="0 0 15 13"><path d="M0.5 2 Q0.5 0.5 2 0.5 H6 L7.5 2 H13 Q14.5 2 14.5 3.5 V11 Q14.5 12.5 13 12.5 H2 Q0.5 12.5 0.5 11 Z" fill="#f5d77a" stroke="#e4c057" stroke-width=".6"/><path d="M0.8 4 H14.2 V11 Q14.2 12.2 13 12.2 H2 Q0.8 12.2 0.8 11 Z" fill="url(#gf)"/></svg>
<div class="abs mono" style="left:68.5px;top:417px;color:#000">IT5320</div>
<div class="abs" style="left:42px;top:440px;width:7px;height:1px;background-image:linear-gradient(90deg,#808080 50%,transparent 50%);background-size:2px 1px"></div>
<div class="abs" style="left:33px;top:436px;width:9px;height:9px;border:1px solid #919191;box-sizing:border-box;background:linear-gradient(135deg,#fff,#d8d8d8)"><div class="abs" style="left:2px;top:3px;width:5px;height:1px;background:#000"></div><div class="abs" style="left:4px;top:1px;width:1px;height:5px;background:#000"></div></div>
<svg class="abs" style="left:49px;top:433px" width="15" height="13" viewBox="0 0 15 13"><path d="M0.5 2 Q0.5 0.5 2 0.5 H6 L7.5 2 H13 Q14.5 2 14.5 3.5 V11 Q14.5 12.5 13 12.5 H2 Q0.5 12.5 0.5 11 Z" fill="#f5d77a" stroke="#e4c057" stroke-width=".6"/><path d="M0.8 4 H14.2 V11 Q14.2 12.2 13 12.2 H2 Q0.8 12.2 0.8 11 Z" fill="url(#gf)"/></svg>
<div class="abs mono" style="left:68.5px;top:433px;color:#000">IT5330</div>
<div class="abs" style="left:42px;top:456px;width:7px;height:1px;background-image:linear-gradient(90deg,#808080 50%,transparent 50%);background-size:2px 1px"></div>
<div class="abs" style="left:33px;top:452px;width:9px;height:9px;border:1px solid #919191;box-sizing:border-box;background:linear-gradient(135deg,#fff,#d8d8d8)"><div class="abs" style="left:2px;top:3px;width:5px;height:1px;background:#000"></div><div class="abs" style="left:4px;top:1px;width:1px;height:5px;background:#000"></div></div>
<svg class="abs" style="left:49px;top:449px" width="15" height="13" viewBox="0 0 15 13"><path d="M0.5 2 Q0.5 0.5 2 0.5 H6 L7.5 2 H13 Q14.5 2 14.5 3.5 V11 Q14.5 12.5 13 12.5 H2 Q0.5 12.5 0.5 11 Z" fill="#f5d77a" stroke="#e4c057" stroke-width=".6"/><path d="M0.8 4 H14.2 V11 Q14.2 12.2 13 12.2 H2 Q0.8 12.2 0.8 11 Z" fill="url(#gf)"/></svg>
<div class="abs mono" style="left:68.5px;top:449px;color:#000">IT5331</div>
<div class="abs" style="left:42px;top:472px;width:7px;height:1px;background-image:linear-gradient(90deg,#808080 50%,transparent 50%);background-size:2px 1px"></div>
<div class="abs" style="left:33px;top:468px;width:9px;height:9px;border:1px solid #919191;box-sizing:border-box;background:linear-gradient(135deg,#fff,#d8d8d8)"><div class="abs" style="left:2px;top:3px;width:5px;height:1px;background:#000"></div><div class="abs" style="left:4px;top:1px;width:1px;height:5px;background:#000"></div></div>
<svg class="abs" style="left:49px;top:465px" width="15" height="13" viewBox="0 0 15 13"><path d="M0.5 2 Q0.5 0.5 2 0.5 H6 L7.5 2 H13 Q14.5 2 14.5 3.5 V11 Q14.5 12.5 13 12.5 H2 Q0.5 12.5 0.5 11 Z" fill="#f5d77a" stroke="#e4c057" stroke-width=".6"/><path d="M0.8 4 H14.2 V11 Q14.2 12.2 13 12.2 H2 Q0.8 12.2 0.8 11 Z" fill="url(#gf)"/></svg>
<div class="abs mono" style="left:68.5px;top:465px;color:#000">IT5600</div>
<div class="abs" style="left:42px;top:488px;width:7px;height:1px;background-image:linear-gradient(90deg,#808080 50%,transparent 50%);background-size:2px 1px"></div>
<div class="abs" style="left:33px;top:484px;width:9px;height:9px;border:1px solid #919191;box-sizing:border-box;background:linear-gradient(135deg,#fff,#d8d8d8)"><div class="abs" style="left:2px;top:3px;width:5px;height:1px;background:#000"></div><div class="abs" style="left:4px;top:1px;width:1px;height:5px;background:#000"></div></div>
<svg class="abs" style="left:49px;top:481px" width="15" height="13" viewBox="0 0 15 13"><path d="M0.5 2 Q0.5 0.5 2 0.5 H6 L7.5 2 H13 Q14.5 2 14.5 3.5 V11 Q14.5 12.5 13 12.5 H2 Q0.5 12.5 0.5 11 Z" fill="#f5d77a" stroke="#e4c057" stroke-width=".6"/><path d="M0.8 4 H14.2 V11 Q14.2 12.2 13 12.2 H2 Q0.8 12.2 0.8 11 Z" fill="url(#gf)"/></svg>
<div class="abs mono" style="left:68.5px;top:481px;color:#000">IT5602</div>
<div class="abs" style="left:42px;top:504px;width:7px;height:1px;background-image:linear-gradient(90deg,#808080 50%,transparent 50%);background-size:2px 1px"></div>
<div class="abs" style="left:33px;top:500px;width:9px;height:9px;border:1px solid #919191;box-sizing:border-box;background:linear-gradient(135deg,#fff,#d8d8d8)"><div class="abs" style="left:2px;top:3px;width:5px;height:1px;background:#000"></div><div class="abs" style="left:4px;top:1px;width:1px;height:5px;background:#000"></div></div>
<svg class="abs" style="left:49px;top:497px" width="15" height="13" viewBox="0 0 15 13"><path d="M0.5 2 Q0.5 0.5 2 0.5 H6 L7.5 2 H13 Q14.5 2 14.5 3.5 V11 Q14.5 12.5 13 12.5 H2 Q0.5 12.5 0.5 11 Z" fill="#f5d77a" stroke="#e4c057" stroke-width=".6"/><path d="M0.8 4 H14.2 V11 Q14.2 12.2 13 12.2 H2 Q0.8 12.2 0.8 11 Z" fill="url(#gf)"/></svg>
<div class="abs mono" style="left:68.5px;top:497px;color:#000">IT5603</div>
<div class="abs" style="left:42px;top:520px;width:7px;height:1px;background-image:linear-gradient(90deg,#808080 50%,transparent 50%);background-size:2px 1px"></div>
<div class="abs" style="left:33px;top:516px;width:9px;height:9px;border:1px solid #919191;box-sizing:border-box;background:linear-gradient(135deg,#fff,#d8d8d8)"><div class="abs" style="left:2px;top:3px;width:5px;height:1px;background:#000"></div><div class="abs" style="left:4px;top:1px;width:1px;height:5px;background:#000"></div></div>
<svg class="abs" style="left:49px;top:513px" width="15" height="13" viewBox="0 0 15 13"><path d="M0.5 2 Q0.5 0.5 2 0.5 H6 L7.5 2 H13 Q14.5 2 14.5 3.5 V11 Q14.5 12.5 13 12.5 H2 Q0.5 12.5 0.5 11 Z" fill="#f5d77a" stroke="#e4c057" stroke-width=".6"/><path d="M0.8 4 H14.2 V11 Q14.2 12.2 13 12.2 H2 Q0.8 12.2 0.8 11 Z" fill="url(#gf)"/></svg>
<div class="abs mono" style="left:68.5px;top:513px;color:#000">IT5606</div>
<div class="abs" style="left:42px;top:536px;width:7px;height:1px;background-image:linear-gradient(90deg,#808080 50%,transparent 50%);background-size:2px 1px"></div>
<div class="abs" style="left:33px;top:532px;width:9px;height:9px;border:1px solid #919191;box-sizing:border-box;background:linear-gradient(135deg,#fff,#d8d8d8)"><div class="abs" style="left:2px;top:3px;width:5px;height:1px;background:#000"></div><div class="abs" style="left:4px;top:1px;width:1px;height:5px;background:#000"></div></div>
<svg class="abs" style="left:49px;top:529px" width="15" height="13" viewBox="0 0 15 13"><path d="M0.5 2 Q0.5 0.5 2 0.5 H6 L7.5 2 H13 Q14.5 2 14.5 3.5 V11 Q14.5 12.5 13 12.5 H2 Q0.5 12.5 0.5 11 Z" fill="#f5d77a" stroke="#e4c057" stroke-width=".6"/><path d="M0.8 4 H14.2 V11 Q14.2 12.2 13 12.2 H2 Q0.8 12.2 0.8 11 Z" fill="url(#gf)"/></svg>
<div class="abs mono" style="left:68.5px;top:529px;color:#000">IT5608</div>
<div class="abs" style="left:42px;top:552px;width:7px;height:1px;background-image:linear-gradient(90deg,#808080 50%,transparent 50%);background-size:2px 1px"></div>
<div class="abs" style="left:33px;top:548px;width:9px;height:9px;border:1px solid #919191;box-sizing:border-box;background:linear-gradient(135deg,#fff,#d8d8d8)"><div class="abs" style="left:2px;top:3px;width:5px;height:1px;background:#000"></div><div class="abs" style="left:4px;top:1px;width:1px;height:5px;background:#000"></div></div>
<svg class="abs" style="left:49px;top:545px" width="15" height="13" viewBox="0 0 15 13"><path d="M0.5 2 Q0.5 0.5 2 0.5 H6 L7.5 2 H13 Q14.5 2 14.5 3.5 V11 Q14.5 12.5 13 12.5 H2 Q0.5 12.5 0.5 11 Z" fill="#f5d77a" stroke="#e4c057" stroke-width=".6"/><path d="M0.8 4 H14.2 V11 Q14.2 12.2 13 12.2 H2 Q0.8 12.2 0.8 11 Z" fill="url(#gf)"/></svg>
<div class="abs mono" style="left:68.5px;top:545px;color:#000">IT5610</div>
<div class="abs" style="left:42px;top:568px;width:7px;height:1px;background-image:linear-gradient(90deg,#808080 50%,transparent 50%);background-size:2px 1px"></div>
<div class="abs" style="left:33px;top:564px;width:9px;height:9px;border:1px solid #919191;box-sizing:border-box;background:linear-gradient(135deg,#fff,#d8d8d8)"><div class="abs" style="left:2px;top:3px;width:5px;height:1px;background:#000"></div><div class="abs" style="left:4px;top:1px;width:1px;height:5px;background:#000"></div></div>
<svg class="abs" style="left:49px;top:561px" width="15" height="13" viewBox="0 0 15 13"><path d="M0.5 2 Q0.5 0.5 2 0.5 H6 L7.5 2 H13 Q14.5 2 14.5 3.5 V11 Q14.5 12.5 13 12.5 H2 Q0.5 12.5 0.5 11 Z" fill="#f5d77a" stroke="#e4c057" stroke-width=".6"/><path d="M0.8 4 H14.2 V11 Q14.2 12.2 13 12.2 H2 Q0.8 12.2 0.8 11 Z" fill="url(#gf)"/></svg>
<div class="abs mono" style="left:68.5px;top:561px;color:#000">IT5611</div>
<div class="abs" style="left:42px;top:584px;width:7px;height:1px;background-image:linear-gradient(90deg,#808080 50%,transparent 50%);background-size:2px 1px"></div>
<div class="abs" style="left:33px;top:580px;width:9px;height:9px;border:1px solid #919191;box-sizing:border-box;background:linear-gradient(135deg,#fff,#d8d8d8)"><div class="abs" style="left:2px;top:3px;width:5px;height:1px;background:#000"></div><div class="abs" style="left:4px;top:1px;width:1px;height:5px;background:#000"></div></div>
<svg class="abs" style="left:49px;top:577px" width="15" height="13" viewBox="0 0 15 13"><path d="M0.5 2 Q0.5 0.5 2 0.5 H6 L7.5 2 H13 Q14.5 2 14.5 3.5 V11 Q14.5 12.5 13 12.5 H2 Q0.5 12.5 0.5 11 Z" fill="#f5d77a" stroke="#e4c057" stroke-width=".6"/><path d="M0.8 4 H14.2 V11 Q14.2 12.2 13 12.2 H2 Q0.8 12.2 0.8 11 Z" fill="url(#gf)"/></svg>
<div class="abs mono" style="left:68.5px;top:577px;color:#000">IT5613</div>
<div class="abs" style="left:42px;top:600px;width:7px;height:1px;background-image:linear-gradient(90deg,#808080 50%,transparent 50%);background-size:2px 1px"></div>
<div class="abs" style="left:33px;top:596px;width:9px;height:9px;border:1px solid #919191;box-sizing:border-box;background:linear-gradient(135deg,#fff,#d8d8d8)"><div class="abs" style="left:2px;top:3px;width:5px;height:1px;background:#000"></div><div class="abs" style="left:4px;top:1px;width:1px;height:5px;background:#000"></div></div>
<svg class="abs" style="left:49px;top:593px" width="15" height="13" viewBox="0 0 15 13"><path d="M0.5 2 Q0.5 0.5 2 0.5 H6 L7.5 2 H13 Q14.5 2 14.5 3.5 V11 Q14.5 12.5 13 12.5 H2 Q0.5 12.5 0.5 11 Z" fill="#f5d77a" stroke="#e4c057" stroke-width=".6"/><path d="M0.8 4 H14.2 V11 Q14.2 12.2 13 12.2 H2 Q0.8 12.2 0.8 11 Z" fill="url(#gf)"/></svg>
<div class="abs mono" style="left:68.5px;top:593px;color:#000">IT5615</div>
<div class="abs" style="left:42px;top:616px;width:7px;height:1px;background-image:linear-gradient(90deg,#808080 50%,transparent 50%);background-size:2px 1px"></div>
<div class="abs" style="left:33px;top:612px;width:9px;height:9px;border:1px solid #919191;box-sizing:border-box;background:linear-gradient(135deg,#fff,#d8d8d8)"><div class="abs" style="left:2px;top:3px;width:5px;height:1px;background:#000"></div></div>
<svg class="abs" style="left:49px;top:609px" width="15" height="13" viewBox="0 0 15 13"><path d="M0.5 2 Q0.5 0.5 2 0.5 H6 L7.5 2 H13 Q14.5 2 14.5 3.5 V11 Q14.5 12.5 13 12.5 H2 Q0.5 12.5 0.5 11 Z" fill="#f5d77a" stroke="#e4c057" stroke-width=".6"/><path d="M0.8 4 H14.2 V11 Q14.2 12.2 13 12.2 H2 Q0.8 12.2 0.8 11 Z" fill="url(#gf)"/></svg>
<div class="abs mono" style="left:68.5px;top:609px;color:#000">IT5616</div>
<div class="abs" style="left:56px;top:625px;width:1px;height:57px;background-image:linear-gradient(#808080 50%,transparent 50%);background-size:1px 2px"></div>
<div class="abs" style="left:57px;top:633px;width:10px;height:1px;background-image:linear-gradient(90deg,#808080 50%,transparent 50%);background-size:2px 1px"></div>
<svg class="abs" style="left:66px;top:625px" width="17" height="16" viewBox="0 0 17 16"><path d="M5 2 H15 V16 H5 Z" fill="#eef6ff"/><path d="M5 9 V16" stroke="#8ab0d8" stroke-width="1"/><rect x="8" y="10" width="7" height="1.5" fill="#a8d0f0"/><rect x="8" y="13" width="7" height="1.5" fill="#b8d8f4"/><rect x="1" y="2" width="15" height="8" rx="1" fill="#c4161c"/><text x="8.5" y="8.6" font-family="Liberation Sans, sans-serif" font-weight="bold" font-size="6.6" fill="#fff" text-anchor="middle">PDF</text></svg>
<div class="abs" style="left:86px;top:624px;width:88px;height:16px;background:#3399ff;border:1px dotted #1a3a6a;box-sizing:border-box"></div>
<div class="abs mono" style="left:87px;top:625px;color:#fff">G2422_Main_SCH</div>
<div class="abs" style="left:57px;top:649px;width:10px;height:1px;background-image:linear-gradient(90deg,#808080 50%,transparent 50%);background-size:2px 1px"></div>
<svg class="abs" style="left:66px;top:641px" width="17" height="16" viewBox="0 0 17 16"><path d="M5 2 H15 V16 H5 Z" fill="#eef6ff"/><path d="M5 9 V16" stroke="#8ab0d8" stroke-width="1"/><rect x="8" y="10" width="7" height="1.5" fill="#a8d0f0"/><rect x="8" y="13" width="7" height="1.5" fill="#b8d8f4"/><rect x="1" y="2" width="15" height="8" rx="1" fill="#c4161c"/><text x="8.5" y="8.6" font-family="Liberation Sans, sans-serif" font-weight="bold" font-size="6.6" fill="#fff" text-anchor="middle">PDF</text></svg>
<div class="abs mono" style="left:87px;top:641px;color:#000">Main_G2422_PLACEMENT</div>
<div class="abs" style="left:57px;top:665px;width:10px;height:1px;background-image:linear-gradient(90deg,#808080 50%,transparent 50%);background-size:2px 1px"></div>
<svg class="abs" style="left:66px;top:657px" width="17" height="16" viewBox="0 0 17 16"><path d="M5 2 H15 V16 H5 Z" fill="#eef6ff"/><path d="M5 9 V16" stroke="#8ab0d8" stroke-width="1"/><rect x="8" y="10" width="7" height="1.5" fill="#a8d0f0"/><rect x="8" y="13" width="7" height="1.5" fill="#b8d8f4"/><rect x="1" y="2" width="15" height="8" rx="1" fill="#c4161c"/><text x="8.5" y="8.6" font-family="Liberation Sans, sans-serif" font-weight="bold" font-size="6.6" fill="#fff" text-anchor="middle">PDF</text></svg>
<div class="abs mono" style="left:87px;top:657px;color:#000">UL269_MMI_V00.SCH.17</div>
<div class="abs" style="left:57px;top:681px;width:10px;height:1px;background-image:linear-gradient(90deg,#808080 50%,transparent 50%);background-size:2px 1px"></div>
<svg class="abs" style="left:66px;top:673px" width="17" height="16" viewBox="0 0 17 16"><path d="M5 2 H15 V16 H5 Z" fill="#eef6ff"/><path d="M5 9 V16" stroke="#8ab0d8" stroke-width="1"/><rect x="8" y="10" width="7" height="1.5" fill="#a8d0f0"/><rect x="8" y="13" width="7" height="1.5" fill="#b8d8f4"/><rect x="1" y="2" width="15" height="8" rx="1" fill="#c4161c"/><text x="8.5" y="8.6" font-family="Liberation Sans, sans-serif" font-weight="bold" font-size="6.6" fill="#fff" text-anchor="middle">PDF</text></svg>
<div class="abs mono" style="left:87px;top:673px;color:#000">UL269_MMI_V00_placement</div>
<div class="abs" style="left:49px;top:689px;width:8px;height:3px;background:#f0e08a;border-radius:2px 2px 0 0"></div>
</div>
<div class="abs" style="left:236px;top:141px;width:17px;height:691px;background:#fff;border-left:1px solid #c4c4c4;border-right:1px solid #c4c4c4;box-sizing:border-box"></div>
<svg class="abs" style="left:236px;top:141px" width="17" height="17" viewBox="0 0 17 17"><rect x=".5" y=".5" width="16" height="16" fill="#fff" stroke="#b8b8b8"/><path d="M4.8 11.3 L8.5 7.5 L12.2 11.3" stroke="#404040" stroke-width="1.4" fill="none"/></svg>
<svg class="abs" style="left:236px;top:815px" width="17" height="17" viewBox="0 0 17 17"><rect x=".5" y=".5" width="16" height="16" fill="#fff" stroke="#b8b8b8"/><path d="M4.8 6.3 L8.5 10.1 L12.2 6.3" stroke="#404040" stroke-width="1.4" fill="none"/></svg>
<div class="abs" style="left:236px;top:489px;width:17px;height:102px;background:#dcdcdc;border:1px solid #c8c8c8;box-sizing:border-box"></div>
<div class="abs" style="left:241px;top:536px;width:7px;height:7px;background:linear-gradient(#555 0,#555 1.5px,transparent 1.5px,transparent 3px,#555 3px,#555 4.5px,transparent 4.5px,transparent 5.5px,#555 5.5px,#555 7px)"></div>
<div class="abs" style="left:254px;top:141px;width:7px;height:691px;background:#f7f7f7"></div>
<div class="abs" style="left:261px;top:134px;width:1px;height:27px;background:#a8a8a8"></div>
<div class="abs" style="left:104px;top:133px;width:158px;height:1px;background:#9a9aa8"></div>
<svg class="abs" style="left:254px;top:490px" width="6" height="9" viewBox="0 0 6 9"><path d="M1 1 L5 4.5 L1 8 Z" fill="#e02020"/></svg>
<div class="abs" style="left:261px;top:161px;width:1244px;height:674px;background:#999"></div>
<div class="abs" id="page" style="left:408px;top:163px;width:950px;height:672px;background:#fff;overflow:hidden">
<svg class="abs" style="left:0;top:0" width="950" height="672" viewBox="408 163 950 672" font-family="Liberation Sans, sans-serif">
<rect x="429.5" y="185.5" width="893" height="629" fill="none" stroke="#b8b8b8" stroke-width="1"/>
<rect x="459.5" y="217.5" width="524" height="580" fill="none" stroke="#a8a8a8" stroke-width="1" stroke-dasharray="2 1.5"/>
<text x="511.3" y="250.2" font-size="19.4" fill="#000" textLength="31.6" lengthAdjust="spacingAndGlyphs">DBB</text>
<rect x="635.5" y="262" width="182" height="431.5" fill="none" stroke="#f9f9d4" stroke-width="1"/>
<path d="M646 272.5 H807 L810 275.5 V687.8 L807 690.8 H646.4 L643.4 687.8 V275.5 Z" fill="none" stroke="#606060" stroke-width=".8"/>
<path d="M643.4 277.4 H712.6 L718.4 283.4 V678 L712.6 684 H643.4" fill="none" stroke="#606060" stroke-width=".8"/>
<path d="M643.4 329.5 H718.4" stroke="#606060" stroke-width=".8"/>
<path d="M643.4 432.8 H718.4" stroke="#606060" stroke-width=".8"/>
<path d="M643.4 536.4 H718.4" stroke="#606060" stroke-width=".8"/>
<path d="M643.4 590.4 H718.4" stroke="#606060" stroke-width=".8"/>
<path d="M810 277.4 H741.2 L735.4 283.4 V490.5 L729.1 495.7 V508 L735.4 513.5 V679.5 L741.2 685.5 H810" fill="none" stroke="#606060" stroke-width=".8"/>
<path d="M735.4 318.3 H810" stroke="#606060" stroke-width=".9"/>
<path d="M735.4 352.5 H810" stroke="#606060" stroke-width=".9"/>
<path d="M735.4 381 H810" stroke="#606060" stroke-width=".9"/>
<path d="M735.4 415.4 H810" stroke="#606060" stroke-width=".9"/>
<path d="M735.4 444 H810" stroke="#606060" stroke-width=".9"/>
<path d="M735.4 467.3 H810" stroke="#606060" stroke-width=".9"/>
<path d="M735.4 490.5 H810" stroke="#606060" stroke-width=".9"/>
<path d="M735.4 513.5 H810" stroke="#606060" stroke-width=".9"/>
<path d="M735.4 550.3 H810" stroke="#606060" stroke-width=".9"/>
<path d="M735.4 593.7 H810" stroke="#606060" stroke-width=".9"/>
<path d="M735.4 602 H810" stroke="#606060" stroke-width=".9"/>
<path d="M735.4 659.2 H810" stroke="#606060" stroke-width=".9"/>
<text x="726.5" y="266.6" font-size="2.8" fill="#444" text-anchor="middle">U1A</text>
<text x="726.5" y="270.6" font-size="2.7" fill="#444" text-anchor="middle" textLength="21" lengthAdjust="spacingAndGlyphs">CPU_6261_BGA145</text>
<text transform="translate(730.5,471) rotate(-90)" font-family="Liberation Serif, serif" font-weight="bold" font-size="9.5" fill="#222" text-anchor="middle" textLength="33" lengthAdjust="spacingAndGlyphs">DIGITAL</text>
<text transform="translate(712,304) rotate(-90)" font-family="Liberation Serif, serif" font-weight="bold" font-size="5.2" fill="#222" text-anchor="middle" textLength="24" lengthAdjust="spacingAndGlyphs">SPI FLASH</text>
<text transform="translate(712,397) rotate(-90)" font-family="Liberation Serif, serif" font-weight="bold" font-size="5.2" fill="#222" text-anchor="middle" textLength="12" lengthAdjust="spacingAndGlyphs">CCIR</text>
<text transform="translate(712,479) rotate(-90)" font-family="Liberation Serif, serif" font-weight="bold" font-size="5.2" fill="#222" text-anchor="middle" textLength="11" lengthAdjust="spacingAndGlyphs">LCM</text>
<text transform="translate(712,562) rotate(-90)" font-family="Liberation Serif, serif" font-weight="bold" font-size="5.2" fill="#222" text-anchor="middle" textLength="12" lengthAdjust="spacingAndGlyphs">GPIO</text>
<text transform="translate(712,634) rotate(-90)" font-family="Liberation Serif, serif" font-weight="bold" font-size="5.2" fill="#222" text-anchor="middle" textLength="21" lengthAdjust="spacingAndGlyphs">KEYPAD</text>
<text transform="translate(741.5,298) rotate(-90)" font-family="Liberation Serif, serif" font-weight="bold" font-size="5.2" fill="#222" text-anchor="middle" textLength="20" lengthAdjust="spacingAndGlyphs">RF_CTRL</text>
<text transform="translate(741.5,326) rotate(-90)" font-family="Liberation Serif, serif" font-weight="bold" font-size="5.2" fill="#222" text-anchor="middle" textLength="11" lengthAdjust="spacingAndGlyphs">JTAG</text>
<text transform="translate(741.5,371) rotate(-90)" font-family="Liberation Serif, serif" font-weight="bold" font-size="5.2" fill="#222" text-anchor="middle" textLength="13" lengthAdjust="spacingAndGlyphs">UART</text>
<text transform="translate(741.5,399) rotate(-90)" font-family="Liberation Serif, serif" font-weight="bold" font-size="5.2" fill="#222" text-anchor="middle" textLength="7" lengthAdjust="spacingAndGlyphs">IIS</text>
<text transform="translate(741.5,430) rotate(-90)" font-family="Liberation Serif, serif" font-weight="bold" font-size="5.2" fill="#222" text-anchor="middle" textLength="6" lengthAdjust="spacingAndGlyphs">TP</text>
<text transform="translate(741.5,456) rotate(-90)" font-family="Liberation Serif, serif" font-weight="bold" font-size="5.2" fill="#222" text-anchor="middle" textLength="10" lengthAdjust="spacingAndGlyphs">SIM0</text>
<text transform="translate(741.5,479) rotate(-90)" font-family="Liberation Serif, serif" font-weight="bold" font-size="5.2" fill="#222" text-anchor="middle" textLength="10" lengthAdjust="spacingAndGlyphs">SIM1</text>
<text transform="translate(733.6,502) rotate(-90)" font-family="Liberation Serif, serif" font-weight="bold" font-size="4.6" fill="#222" text-anchor="middle" textLength="10" lengthAdjust="spacingAndGlyphs">SIM2</text>
<text transform="translate(741.5,532) rotate(-90)" font-family="Liberation Serif, serif" font-weight="bold" font-size="5.2" fill="#222" text-anchor="middle" textLength="8" lengthAdjust="spacingAndGlyphs">SPI</text>
<text transform="translate(741.5,576) rotate(-90)" font-family="Liberation Serif, serif" font-weight="bold" font-size="5.2" fill="#222" text-anchor="middle" textLength="11" lengthAdjust="spacingAndGlyphs">SDIO</text>
<text transform="translate(741.5,632) rotate(-90)" font-family="Liberation Serif, serif" font-weight="bold" font-size="5.2" fill="#222" text-anchor="middle" textLength="19" lengthAdjust="spacingAndGlyphs">SYSTEM</text>
<text transform="translate(740.5,673) rotate(-90)" font-family="Liberation Serif, serif" font-weight="bold" font-size="5.2" fill="#222" text-anchor="middle" textLength="9" lengthAdjust="spacingAndGlyphs">CLK</text>
<text transform="translate(745.5,673) rotate(-90)" font-family="Liberation Serif, serif" font-weight="bold" font-size="5.2" fill="#222" text-anchor="middle" textLength="9" lengthAdjust="spacingAndGlyphs">PWM</text>
<text transform="translate(716,304) rotate(-90)" font-family="Liberation Sans, sans-serif" font-weight="normal" font-size="2.6" fill="#4a4a4a" text-anchor="middle" textLength="6" lengthAdjust="spacingAndGlyphs">VDDIO</text>
<text transform="translate(716,397) rotate(-90)" font-family="Liberation Sans, sans-serif" font-weight="normal" font-size="2.6" fill="#4a4a4a" text-anchor="middle" textLength="6" lengthAdjust="spacingAndGlyphs">VDDIO</text>
<text transform="translate(716,479) rotate(-90)" font-family="Liberation Sans, sans-serif" font-weight="normal" font-size="2.6" fill="#4a4a4a" text-anchor="middle" textLength="6" lengthAdjust="spacingAndGlyphs">VDDIO</text>
<text transform="translate(716,562) rotate(-90)" font-family="Liberation Sans, sans-serif" font-weight="normal" font-size="2.6" fill="#4a4a4a" text-anchor="middle" textLength="6" lengthAdjust="spacingAndGlyphs">VDDIO</text>
<text transform="translate(716,634) rotate(-90)" font-family="Liberation Sans, sans-serif" font-weight="normal" font-size="2.6" fill="#4a4a4a" text-anchor="middle" textLength="6" lengthAdjust="spacingAndGlyphs">VDDIO</text>
<text transform="translate(745.5,298) rotate(-90)" font-family="Liberation Sans, sans-serif" font-weight="normal" font-size="2.6" fill="#4a4a4a" text-anchor="middle" textLength="6" lengthAdjust="spacingAndGlyphs">VDDIO</text>
<text transform="translate(745.5,326) rotate(-90)" font-family="Liberation Sans, sans-serif" font-weight="normal" font-size="2.6" fill="#4a4a4a" text-anchor="middle" textLength="6" lengthAdjust="spacingAndGlyphs">VDDIO</text>
<text transform="translate(745.5,371) rotate(-90)" font-family="Liberation Sans, sans-serif" font-weight="normal" font-size="2.6" fill="#4a4a4a" text-anchor="middle" textLength="6" lengthAdjust="spacingAndGlyphs">VDDIO</text>
<text transform="translate(745.5,399) rotate(-90)" font-family="Liberation Sans, sans-serif" font-weight="normal" font-size="2.6" fill="#4a4a4a" text-anchor="middle" textLength="6" lengthAdjust="spacingAndGlyphs">VDDIO</text>
<text transform="translate(745.5,456) rotate(-90)" font-family="Liberation Sans, sans-serif" font-weight="normal" font-size="2.6" fill="#4a4a4a" text-anchor="middle" textLength="6" lengthAdjust="spacingAndGlyphs">VDDIO</text>
<text transform="translate(745.5,479) rotate(-90)" font-family="Liberation Sans, sans-serif" font-weight="normal" font-size="2.6" fill="#4a4a4a" text-anchor="middle" textLength="6" lengthAdjust="spacingAndGlyphs">VDDIO</text>
<text transform="translate(738.5,502) rotate(-90)" font-family="Liberation Sans, sans-serif" font-weight="normal" font-size="2.6" fill="#4a4a4a" text-anchor="middle" textLength="6" lengthAdjust="spacingAndGlyphs">VDDIO</text>
<text transform="translate(745.5,532) rotate(-90)" font-family="Liberation Sans, sans-serif" font-weight="normal" font-size="2.6" fill="#4a4a4a" text-anchor="middle" textLength="6" lengthAdjust="spacingAndGlyphs">VDDIO</text>
<text transform="translate(745.5,576) rotate(-90)" font-family="Liberation Sans, sans-serif" font-weight="normal" font-size="2.6" fill="#4a4a4a" text-anchor="middle" textLength="6" lengthAdjust="spacingAndGlyphs">VDDIO</text>
<text x="741" y="598.6" font-size="2.6" fill="#4a4a4a" text-anchor="start" textLength="6" lengthAdjust="spacingAndGlyphs">VDDIO</text>
<text x="641.8" y="283.0" font-size="2.7" fill="#444" text-anchor="end" textLength="4.8" lengthAdjust="spacingAndGlyphs">F12</text>
<text x="644.6" y="284.5" font-size="2.9" fill="#2c2c2c" text-anchor="start" textLength="11" lengthAdjust="spacingAndGlyphs">SFSIO3_W</text>
<path d="M640.5 283.5 H643.4" stroke="#707070" stroke-width=".6"/>
<path d="M611.5 283.5 H643.4" stroke="#707070" stroke-width=".6"/>
<path d="M606.2 282.4 H610.3 L611.5 283.5 L610.3 284.6 H606.2 Z" fill="#fff" stroke="#8a8ab8" stroke-width=".45"/>
<text x="592.2" y="284.8" font-size="4.4" font-weight="bold" fill="#3a3ab4" textLength="13" lengthAdjust="spacingAndGlyphs">SFSIO3_WP</text>
<path d="M592.2 285.7 H605.2" stroke="#5050b8" stroke-width=".45" stroke-dasharray=".8 .4"/>
<text x="591.0" y="284.1" font-size="2.3" fill="#777" text-anchor="end">P7</text>
<text x="641.8" y="288.8" font-size="2.7" fill="#444" text-anchor="end" textLength="4.8" lengthAdjust="spacingAndGlyphs">G11</text>
<text x="644.6" y="290.3" font-size="2.9" fill="#2c2c2c" text-anchor="start" textLength="11" lengthAdjust="spacingAndGlyphs">SFSCS0_G</text>
<path d="M640.5 289.3 H643.4" stroke="#707070" stroke-width=".6"/>
<text x="641.8" y="297.7" font-size="2.7" fill="#444" text-anchor="end" textLength="4.8" lengthAdjust="spacingAndGlyphs">B12</text>
<text x="644.6" y="299.2" font-size="2.9" fill="#2c2c2c" text-anchor="start" textLength="9" lengthAdjust="spacingAndGlyphs">SFSIN_G</text>
<path d="M640.5 298.2 H643.4" stroke="#707070" stroke-width=".6"/>
<path d="M611.5 298.2 H643.4" stroke="#707070" stroke-width=".6"/>
<path d="M606.2 297.09999999999997 H610.3 L611.5 298.2 L610.3 299.3 H606.2 Z" fill="#fff" stroke="#8a8ab8" stroke-width=".45"/>
<text x="596.2" y="299.5" font-size="4.4" font-weight="bold" fill="#3a3ab4" textLength="9" lengthAdjust="spacingAndGlyphs">SFSCS0</text>
<path d="M596.2 300.4 H605.2" stroke="#5050b8" stroke-width=".45" stroke-dasharray=".8 .4"/>
<text x="595.0" y="298.8" font-size="2.3" fill="#777" text-anchor="end">P5</text>
<text x="641.8" y="303.0" font-size="2.7" fill="#444" text-anchor="end" textLength="4.8" lengthAdjust="spacingAndGlyphs">J13</text>
<text x="644.6" y="304.5" font-size="2.9" fill="#2c2c2c" text-anchor="start" textLength="9" lengthAdjust="spacingAndGlyphs">SFSOUT</text>
<path d="M640.5 303.5 H643.4" stroke="#707070" stroke-width=".6"/>
<path d="M611.5 303.5 H643.4" stroke="#707070" stroke-width=".6"/>
<path d="M606.2 302.4 H610.3 L611.5 303.5 L610.3 304.6 H606.2 Z" fill="#fff" stroke="#8a8ab8" stroke-width=".45"/>
<text x="596.2" y="304.8" font-size="4.4" font-weight="bold" fill="#3a3ab4" textLength="9" lengthAdjust="spacingAndGlyphs">SFSIN</text>
<path d="M596.2 305.7 H605.2" stroke="#5050b8" stroke-width=".45" stroke-dasharray=".8 .4"/>
<text x="595.0" y="304.1" font-size="2.3" fill="#777" text-anchor="end">P5</text>
<text x="641.8" y="308.7" font-size="2.7" fill="#444" text-anchor="end" textLength="4.8" lengthAdjust="spacingAndGlyphs">F12</text>
<text x="644.6" y="310.2" font-size="2.9" fill="#2c2c2c" text-anchor="start" textLength="9" lengthAdjust="spacingAndGlyphs">SFSWP_G</text>
<path d="M640.5 309.2 H643.4" stroke="#707070" stroke-width=".6"/>
<path d="M611.5 309.2 H643.4" stroke="#707070" stroke-width=".6"/>
<path d="M606.2 308.09999999999997 H610.3 L611.5 309.2 L610.3 310.3 H606.2 Z" fill="#fff" stroke="#8a8ab8" stroke-width=".45"/>
<text x="596.2" y="310.5" font-size="4.4" font-weight="bold" fill="#3a3ab4" textLength="9" lengthAdjust="spacingAndGlyphs">SFSOUT</text>
<path d="M596.2 311.4 H605.2" stroke="#5050b8" stroke-width=".45" stroke-dasharray=".8 .4"/>
<text x="595.0" y="309.8" font-size="2.3" fill="#777" text-anchor="end">P5</text>
<text x="641.8" y="314.5" font-size="2.7" fill="#444" text-anchor="end" textLength="4.8" lengthAdjust="spacingAndGlyphs">J13</text>
<text x="644.6" y="316.0" font-size="2.9" fill="#2c2c2c" text-anchor="start" textLength="9" lengthAdjust="spacingAndGlyphs">SFSHOLD</text>
<path d="M640.5 315 H643.4" stroke="#707070" stroke-width=".6"/>
<path d="M611.5 315 H643.4" stroke="#707070" stroke-width=".6"/>
<path d="M606.2 313.9 H610.3 L611.5 315 L610.3 316.1 H606.2 Z" fill="#fff" stroke="#8a8ab8" stroke-width=".45"/>
<text x="596.2" y="316.3" font-size="4.4" font-weight="bold" fill="#3a3ab4" textLength="9" lengthAdjust="spacingAndGlyphs">SFSWP</text>
<path d="M596.2 317.2 H605.2" stroke="#5050b8" stroke-width=".45" stroke-dasharray=".8 .4"/>
<text x="595.0" y="315.6" font-size="2.3" fill="#777" text-anchor="end">P7</text>
<text x="641.8" y="322.5" font-size="2.7" fill="#444" text-anchor="end" textLength="4.8" lengthAdjust="spacingAndGlyphs">B12</text>
<text x="644.6" y="324.0" font-size="2.9" fill="#2c2c2c" text-anchor="start" textLength="11" lengthAdjust="spacingAndGlyphs">SFSCK_GP</text>
<path d="M640.5 323 H643.4" stroke="#707070" stroke-width=".6"/>
<path d="M611.5 323 H643.4" stroke="#707070" stroke-width=".6"/>
<path d="M606.2 321.9 H610.3 L611.5 323 L610.3 324.1 H606.2 Z" fill="#fff" stroke="#8a8ab8" stroke-width=".45"/>
<text x="594.2" y="324.3" font-size="4.4" font-weight="bold" fill="#3a3ab4" textLength="11" lengthAdjust="spacingAndGlyphs">SFSHOLD</text>
<path d="M594.2 325.2 H605.2" stroke="#5050b8" stroke-width=".45" stroke-dasharray=".8 .4"/>
<text x="593.0" y="323.6" font-size="2.3" fill="#777" text-anchor="end">P5</text>
<text x="641.8" y="334.5" font-size="2.7" fill="#444" text-anchor="end" textLength="4.8" lengthAdjust="spacingAndGlyphs">G11</text>
<text x="644.6" y="336.0" font-size="2.9" fill="#2c2c2c" text-anchor="start" textLength="27" lengthAdjust="spacingAndGlyphs">CMDAT0_KROW6_A_GPIO</text>
<path d="M640.5 335 H643.4" stroke="#707070" stroke-width=".6"/>
<path d="M606.3 335 H643.4" stroke="#707070" stroke-width=".6"/>
<path d="M601.0 333.9 H605.0999999999999 L606.3 335 L605.0999999999999 336.1 H601.0 Z" fill="#fff" stroke="#8a8ab8" stroke-width=".45"/>
<text x="566.0" y="336.3" font-size="4.4" font-weight="bold" fill="#3a3ab4" textLength="34" lengthAdjust="spacingAndGlyphs">CAM_D0_KROW6_FLASH</text>
<path d="M566.0 337.2 H600.0" stroke="#5050b8" stroke-width=".45" stroke-dasharray=".8 .4"/>
<text x="564.8" y="335.6" font-size="2.3" fill="#777" text-anchor="end">P3</text>
<text x="641.8" y="340.5" font-size="2.7" fill="#444" text-anchor="end" textLength="4.8" lengthAdjust="spacingAndGlyphs">C11</text>
<text x="644.6" y="342.0" font-size="2.9" fill="#2c2c2c" text-anchor="start" textLength="22" lengthAdjust="spacingAndGlyphs">CMDAT1_KROW5_GPI</text>
<path d="M640.5 341 H643.4" stroke="#707070" stroke-width=".6"/>
<path d="M606.3 341 H643.4" stroke="#707070" stroke-width=".6"/>
<path d="M601.0 339.9 H605.0999999999999 L606.3 341 L605.0999999999999 342.1 H601.0 Z" fill="#fff" stroke="#8a8ab8" stroke-width=".45"/>
<text x="583.0" y="342.3" font-size="4.4" font-weight="bold" fill="#3a3ab4" textLength="17" lengthAdjust="spacingAndGlyphs">CAM_D1</text>
<path d="M583.0 343.2 H600.0" stroke="#5050b8" stroke-width=".45" stroke-dasharray=".8 .4"/>
<text x="581.8" y="341.6" font-size="2.3" fill="#777" text-anchor="end">P7</text>
<text x="641.8" y="346.1" font-size="2.7" fill="#444" text-anchor="end" textLength="4.8" lengthAdjust="spacingAndGlyphs">C11</text>
<text x="644.6" y="347.6" font-size="2.9" fill="#2c2c2c" text-anchor="start" textLength="22" lengthAdjust="spacingAndGlyphs">CMDAT2_KROW4_GPI</text>
<path d="M640.5 346.6 H643.4" stroke="#707070" stroke-width=".6"/>
<path d="M606.3 346.6 H643.4" stroke="#707070" stroke-width=".6"/>
<path d="M601.0 345.5 H605.0999999999999 L606.3 346.6 L605.0999999999999 347.70000000000005 H601.0 Z" fill="#fff" stroke="#8a8ab8" stroke-width=".45"/>
<text x="583.0" y="347.90000000000003" font-size="4.4" font-weight="bold" fill="#3a3ab4" textLength="17" lengthAdjust="spacingAndGlyphs">CAM_D2</text>
<path d="M583.0 348.8 H600.0" stroke="#5050b8" stroke-width=".45" stroke-dasharray=".8 .4"/>
<text x="581.8" y="347.20000000000005" font-size="2.3" fill="#777" text-anchor="end">P3</text>
<text x="641.8" y="351.7" font-size="2.7" fill="#444" text-anchor="end" textLength="4.8" lengthAdjust="spacingAndGlyphs">B12</text>
<text x="644.6" y="353.2" font-size="2.9" fill="#2c2c2c" text-anchor="start" textLength="22" lengthAdjust="spacingAndGlyphs">CMDAT3_KROW3_GPI</text>
<path d="M640.5 352.2 H643.4" stroke="#707070" stroke-width=".6"/>
<path d="M606.3 352.2 H643.4" stroke="#707070" stroke-width=".6"/>
<path d="M601.0 351.09999999999997 H605.0999999999999 L606.3 352.2 L605.0999999999999 353.3 H601.0 Z" fill="#fff" stroke="#8a8ab8" stroke-width=".45"/>
<text x="583.0" y="353.5" font-size="4.4" font-weight="bold" fill="#3a3ab4" textLength="17" lengthAdjust="spacingAndGlyphs">CAM_D3</text>
<path d="M583.0 354.4 H600.0" stroke="#5050b8" stroke-width=".45" stroke-dasharray=".8 .4"/>
<text x="581.8" y="352.8" font-size="2.3" fill="#777" text-anchor="end">P5</text>
<text x="641.8" y="357.5" font-size="2.7" fill="#444" text-anchor="end" textLength="4.8" lengthAdjust="spacingAndGlyphs">D9</text>
<text x="644.6" y="359.0" font-size="2.9" fill="#2c2c2c" text-anchor="start" textLength="22" lengthAdjust="spacingAndGlyphs">CMDAT4_KROW2_GPI</text>
<path d="M640.5 358 H643.4" stroke="#707070" stroke-width=".6"/>
<path d="M606.3 358 H643.4" stroke="#707070" stroke-width=".6"/>
<path d="M601.0 356.9 H605.0999999999999 L606.3 358 L605.0999999999999 359.1 H601.0 Z" fill="#fff" stroke="#8a8ab8" stroke-width=".45"/>
<text x="583.0" y="359.3" font-size="4.4" font-weight="bold" fill="#3a3ab4" textLength="17" lengthAdjust="spacingAndGlyphs">CAM_D4</text>
<path d="M583.0 360.2 H600.0" stroke="#5050b8" stroke-width=".45" stroke-dasharray=".8 .4"/>
<text x="581.8" y="358.6" font-size="2.3" fill="#777" text-anchor="end">P5</text>
<text x="641.8" y="363.3" font-size="2.7" fill="#444" text-anchor="end" textLength="4.8" lengthAdjust="spacingAndGlyphs">K12</text>
<text x="644.6" y="364.8" font-size="2.9" fill="#2c2c2c" text-anchor="start" textLength="22" lengthAdjust="spacingAndGlyphs">CMDAT5_KROW1_GPI</text>
<path d="M640.5 363.8 H643.4" stroke="#707070" stroke-width=".6"/>
<path d="M606.3 363.8 H643.4" stroke="#707070" stroke-width=".6"/>
<path d="M601.0 362.7 H605.0999999999999 L606.3 363.8 L605.0999999999999 364.90000000000003 H601.0 Z" fill="#fff" stroke="#8a8ab8" stroke-width=".45"/>
<text x="583.0" y="365.1" font-size="4.4" font-weight="bold" fill="#3a3ab4" textLength="17" lengthAdjust="spacingAndGlyphs">CAM_D5</text>
<path d="M583.0 366.0 H600.0" stroke="#5050b8" stroke-width=".45" stroke-dasharray=".8 .4"/>
<text x="581.8" y="364.40000000000003" font-size="2.3" fill="#777" text-anchor="end">P3</text>
<text x="641.8" y="369.1" font-size="2.7" fill="#444" text-anchor="end" textLength="4.8" lengthAdjust="spacingAndGlyphs">B12</text>
<text x="644.6" y="370.6" font-size="2.9" fill="#2c2c2c" text-anchor="start" textLength="22" lengthAdjust="spacingAndGlyphs">CMDAT6_KROW0_GPI</text>
<path d="M640.5 369.6 H643.4" stroke="#707070" stroke-width=".6"/>
<path d="M606.3 369.6 H643.4" stroke="#707070" stroke-width=".6"/>
<path d="M601.0 368.5 H605.0999999999999 L606.3 369.6 L605.0999999999999 370.70000000000005 H601.0 Z" fill="#fff" stroke="#8a8ab8" stroke-width=".45"/>
<text x="583.0" y="370.90000000000003" font-size="4.4" font-weight="bold" fill="#3a3ab4" textLength="17" lengthAdjust="spacingAndGlyphs">CAM_D6</text>
<path d="M583.0 371.8 H600.0" stroke="#5050b8" stroke-width=".45" stroke-dasharray=".8 .4"/>
<text x="581.8" y="370.20000000000005" font-size="2.3" fill="#777" text-anchor="end">P7</text>
<text x="641.8" y="374.8" font-size="2.7" fill="#444" text-anchor="end" textLength="4.8" lengthAdjust="spacingAndGlyphs">B12</text>
<text x="644.6" y="376.3" font-size="2.9" fill="#2c2c2c" text-anchor="start" textLength="22" lengthAdjust="spacingAndGlyphs">CMDAT7_KCOL6_GPI</text>
<path d="M640.5 375.3 H643.4" stroke="#707070" stroke-width=".6"/>
<path d="M606.3 375.3 H643.4" stroke="#707070" stroke-width=".6"/>
<path d="M601.0 374.2 H605.0999999999999 L606.3 375.3 L605.0999999999999 376.40000000000003 H601.0 Z" fill="#fff" stroke="#8a8ab8" stroke-width=".45"/>
<text x="583.0" y="376.6" font-size="4.4" font-weight="bold" fill="#3a3ab4" textLength="17" lengthAdjust="spacingAndGlyphs">CAM_D7</text>
<path d="M583.0 377.5 H600.0" stroke="#5050b8" stroke-width=".45" stroke-dasharray=".8 .4"/>
<text x="581.8" y="375.90000000000003" font-size="2.3" fill="#777" text-anchor="end">P7</text>
<text x="641.8" y="383.3" font-size="2.7" fill="#444" text-anchor="end" textLength="4.8" lengthAdjust="spacingAndGlyphs">E13</text>
<text x="644.6" y="384.8" font-size="2.9" fill="#2c2c2c" text-anchor="start" textLength="34" lengthAdjust="spacingAndGlyphs">CMMCLK_PWM_CLKO_EINT5_A_G</text>
<path d="M640.5 383.8 H643.4" stroke="#707070" stroke-width=".6"/>
<path d="M606.3 383.8 H643.4" stroke="#707070" stroke-width=".6"/>
<path d="M601.0 382.7 H605.0999999999999 L606.3 383.8 L605.0999999999999 384.90000000000003 H601.0 Z" fill="#fff" stroke="#8a8ab8" stroke-width=".45"/>
<text x="584.0" y="385.1" font-size="4.4" font-weight="bold" fill="#3a3ab4" textLength="16" lengthAdjust="spacingAndGlyphs">CAM_MCLK</text>
<path d="M584.0 386.0 H600.0" stroke="#5050b8" stroke-width=".45" stroke-dasharray=".8 .4"/>
<text x="582.8" y="384.40000000000003" font-size="2.3" fill="#777" text-anchor="end">P3</text>
<text x="641.8" y="389.0" font-size="2.7" fill="#444" text-anchor="end" textLength="4.8" lengthAdjust="spacingAndGlyphs">A10</text>
<text x="644.6" y="390.5" font-size="2.9" fill="#2c2c2c" text-anchor="start" textLength="29" lengthAdjust="spacingAndGlyphs">CMPCLK_KCOL5_EINT_GPI</text>
<path d="M640.5 389.5 H643.4" stroke="#707070" stroke-width=".6"/>
<path d="M606.3 389.5 H643.4" stroke="#707070" stroke-width=".6"/>
<path d="M601.0 388.4 H605.0999999999999 L606.3 389.5 L605.0999999999999 390.6 H601.0 Z" fill="#fff" stroke="#8a8ab8" stroke-width=".45"/>
<text x="562.0" y="390.8" font-size="4.4" font-weight="bold" fill="#3a3ab4" textLength="38" lengthAdjust="spacingAndGlyphs">CAM_PCLK_KCOL5_EINT</text>
<path d="M562.0 391.7 H600.0" stroke="#5050b8" stroke-width=".45" stroke-dasharray=".8 .4"/>
<text x="560.8" y="390.1" font-size="2.3" fill="#777" text-anchor="end">P5</text>
<text x="641.8" y="394.8" font-size="2.7" fill="#444" text-anchor="end" textLength="4.8" lengthAdjust="spacingAndGlyphs">K12</text>
<text x="644.6" y="396.3" font-size="2.9" fill="#2c2c2c" text-anchor="start" textLength="22" lengthAdjust="spacingAndGlyphs">CMRST_KCOL4_GPIO</text>
<path d="M640.5 395.3 H643.4" stroke="#707070" stroke-width=".6"/>
<path d="M606.3 395.3 H643.4" stroke="#707070" stroke-width=".6"/>
<path d="M601.0 394.2 H605.0999999999999 L606.3 395.3 L605.0999999999999 396.40000000000003 H601.0 Z" fill="#fff" stroke="#8a8ab8" stroke-width=".45"/>
<text x="584.0" y="396.6" font-size="4.4" font-weight="bold" fill="#3a3ab4" textLength="16" lengthAdjust="spacingAndGlyphs">CAM_RST</text>
<path d="M584.0 397.5 H600.0" stroke="#5050b8" stroke-width=".45" stroke-dasharray=".8 .4"/>
<text x="582.8" y="395.90000000000003" font-size="2.3" fill="#777" text-anchor="end">P9</text>
<text x="641.8" y="400.5" font-size="2.7" fill="#444" text-anchor="end" textLength="4.8" lengthAdjust="spacingAndGlyphs">J13</text>
<text x="644.6" y="402.0" font-size="2.9" fill="#2c2c2c" text-anchor="start" textLength="30" lengthAdjust="spacingAndGlyphs">CMPDN_KCOL3_EINT_GPIO</text>
<path d="M640.5 401 H643.4" stroke="#707070" stroke-width=".6"/>
<path d="M606.3 401 H643.4" stroke="#707070" stroke-width=".6"/>
<path d="M601.0 399.9 H605.0999999999999 L606.3 401 L605.0999999999999 402.1 H601.0 Z" fill="#fff" stroke="#8a8ab8" stroke-width=".45"/>
<text x="570.0" y="402.3" font-size="4.4" font-weight="bold" fill="#3a3ab4" textLength="30" lengthAdjust="spacingAndGlyphs">CAM_PDN_KCOL3_EINT</text>
<path d="M570.0 403.2 H600.0" stroke="#5050b8" stroke-width=".45" stroke-dasharray=".8 .4"/>
<text x="568.8" y="401.6" font-size="2.3" fill="#777" text-anchor="end">P7</text>
<text x="641.8" y="406.4" font-size="2.7" fill="#444" text-anchor="end" textLength="4.8" lengthAdjust="spacingAndGlyphs">C11</text>
<text x="644.6" y="407.9" font-size="2.9" fill="#2c2c2c" text-anchor="start" textLength="22" lengthAdjust="spacingAndGlyphs">CMCSD0_KCOL2_GPI</text>
<path d="M640.5 406.9 H643.4" stroke="#707070" stroke-width=".6"/>
<path d="M606.3 406.9 H643.4" stroke="#707070" stroke-width=".6"/>
<path d="M601.0 405.79999999999995 H605.0999999999999 L606.3 406.9 L605.0999999999999 408.0 H601.0 Z" fill="#fff" stroke="#8a8ab8" stroke-width=".45"/>
<text x="573.0" y="408.2" font-size="4.4" font-weight="bold" fill="#3a3ab4" textLength="27" lengthAdjust="spacingAndGlyphs">CAM_CSD0_KCOL2</text>
<path d="M573.0 409.09999999999997 H600.0" stroke="#5050b8" stroke-width=".45" stroke-dasharray=".8 .4"/>
<text x="571.8" y="407.5" font-size="2.3" fill="#777" text-anchor="end">P7</text>
<text x="641.8" y="412.0" font-size="2.7" fill="#444" text-anchor="end" textLength="4.8" lengthAdjust="spacingAndGlyphs">F12</text>
<text x="644.6" y="413.5" font-size="2.9" fill="#2c2c2c" text-anchor="start" textLength="26" lengthAdjust="spacingAndGlyphs">CMCSD1_KCOL1_EINT_G</text>
<path d="M640.5 412.5 H643.4" stroke="#707070" stroke-width=".6"/>
<path d="M606.3 412.5 H643.4" stroke="#707070" stroke-width=".6"/>
<path d="M601.0 411.4 H605.0999999999999 L606.3 412.5 L605.0999999999999 413.6 H601.0 Z" fill="#fff" stroke="#8a8ab8" stroke-width=".45"/>
<text x="581.0" y="413.8" font-size="4.4" font-weight="bold" fill="#3a3ab4" textLength="19" lengthAdjust="spacingAndGlyphs">CAM_CSK</text>
<path d="M581.0 414.7 H600.0" stroke="#5050b8" stroke-width=".45" stroke-dasharray=".8 .4"/>
<text x="579.8" y="413.1" font-size="2.3" fill="#777" text-anchor="end">P5</text>
<text x="641.8" y="420.8" font-size="2.7" fill="#444" text-anchor="end" textLength="4.8" lengthAdjust="spacingAndGlyphs">J13</text>
<text x="644.6" y="422.3" font-size="2.9" fill="#2c2c2c" text-anchor="start" textLength="18" lengthAdjust="spacingAndGlyphs">CMCSK_KCOL0_G</text>
<path d="M640.5 421.3 H643.4" stroke="#707070" stroke-width=".6"/>
<path d="M606.3 421.3 H643.4" stroke="#707070" stroke-width=".6"/>
<path d="M601.0 420.2 H605.0999999999999 L606.3 421.3 L605.0999999999999 422.40000000000003 H601.0 Z" fill="#fff" stroke="#8a8ab8" stroke-width=".45"/>
<text x="589.0" y="422.6" font-size="4.4" font-weight="bold" fill="#3a3ab4" textLength="11" lengthAdjust="spacingAndGlyphs">SCL</text>
<path d="M589.0 423.5 H600.0" stroke="#5050b8" stroke-width=".45" stroke-dasharray=".8 .4"/>
<text x="587.8" y="421.90000000000003" font-size="2.3" fill="#777" text-anchor="end">P5</text>
<text x="641.8" y="426.5" font-size="2.7" fill="#444" text-anchor="end" textLength="4.8" lengthAdjust="spacingAndGlyphs">K12</text>
<text x="644.6" y="428.0" font-size="2.9" fill="#2c2c2c" text-anchor="start" textLength="18" lengthAdjust="spacingAndGlyphs">SCL_I2C_SCL_G</text>
<path d="M640.5 427 H643.4" stroke="#707070" stroke-width=".6"/>
<path d="M606.3 427 H643.4" stroke="#707070" stroke-width=".6"/>
<path d="M601.0 425.9 H605.0999999999999 L606.3 427 L605.0999999999999 428.1 H601.0 Z" fill="#fff" stroke="#8a8ab8" stroke-width=".45"/>
<text x="589.0" y="428.3" font-size="4.4" font-weight="bold" fill="#3a3ab4" textLength="11" lengthAdjust="spacingAndGlyphs">SDA</text>
<path d="M589.0 429.2 H600.0" stroke="#5050b8" stroke-width=".45" stroke-dasharray=".8 .4"/>
<text x="587.8" y="427.6" font-size="2.3" fill="#777" text-anchor="end">P5</text>
<text x="641.8" y="438.5" font-size="2.7" fill="#444" text-anchor="end" textLength="4.8" lengthAdjust="spacingAndGlyphs">K12</text>
<text x="644.6" y="440.0" font-size="2.9" fill="#2c2c2c" text-anchor="start" textLength="24" lengthAdjust="spacingAndGlyphs">SDA_I2C_SDA_GPIO_L</text>
<path d="M640.5 439 H643.4" stroke="#707070" stroke-width=".6"/>
<path d="M606.3 439 H643.4" stroke="#707070" stroke-width=".6"/>
<path d="M601.0 437.9 H605.0999999999999 L606.3 439 L605.0999999999999 440.1 H601.0 Z" fill="#fff" stroke="#8a8ab8" stroke-width=".45"/>
<text x="577.0" y="440.3" font-size="4.4" font-weight="bold" fill="#3a3ab4" textLength="23" lengthAdjust="spacingAndGlyphs">LCD_CS_LED</text>
<path d="M577.0 441.2 H600.0" stroke="#5050b8" stroke-width=".45" stroke-dasharray=".8 .4"/>
<text x="575.8" y="439.6" font-size="2.3" fill="#777" text-anchor="end">P7</text>
<text x="641.8" y="446.8" font-size="2.7" fill="#444" text-anchor="end" textLength="4.8" lengthAdjust="spacingAndGlyphs">H10</text>
<text x="644.6" y="448.3" font-size="2.9" fill="#2c2c2c" text-anchor="start" textLength="44" lengthAdjust="spacingAndGlyphs">LSCE0B_GPIO_48_GPIO_LPCE1B_EINT1</text>
<path d="M640.5 447.3 H643.4" stroke="#707070" stroke-width=".6"/>
<path d="M606.3 447.3 H643.4" stroke="#707070" stroke-width=".6"/>
<path d="M601.0 446.2 H605.0999999999999 L606.3 447.3 L605.0999999999999 448.40000000000003 H601.0 Z" fill="#fff" stroke="#8a8ab8" stroke-width=".45"/>
<text x="586.0" y="448.6" font-size="4.4" font-weight="bold" fill="#3a3ab4" textLength="14" lengthAdjust="spacingAndGlyphs">LCD_SDA</text>
<path d="M586.0 449.5 H600.0" stroke="#5050b8" stroke-width=".45" stroke-dasharray=".8 .4"/>
<text x="584.8" y="447.90000000000003" font-size="2.3" fill="#777" text-anchor="end">P3</text>
<text x="641.8" y="452.4" font-size="2.7" fill="#444" text-anchor="end" textLength="4.8" lengthAdjust="spacingAndGlyphs">F12</text>
<text x="644.6" y="453.9" font-size="2.9" fill="#2c2c2c" text-anchor="start" textLength="44" lengthAdjust="spacingAndGlyphs">LSDA_GPIO_LPCE1B_GPIO43_GPIO_LPC</text>
<path d="M640.5 452.9 H643.4" stroke="#707070" stroke-width=".6"/>
<path d="M606.3 452.9 H643.4" stroke="#707070" stroke-width=".6"/>
<path d="M601.0 451.79999999999995 H605.0999999999999 L606.3 452.9 L605.0999999999999 454.0 H601.0 Z" fill="#fff" stroke="#8a8ab8" stroke-width=".45"/>
<text x="586.0" y="454.2" font-size="4.4" font-weight="bold" fill="#3a3ab4" textLength="14" lengthAdjust="spacingAndGlyphs">LCD_SCK</text>
<path d="M586.0 455.09999999999997 H600.0" stroke="#5050b8" stroke-width=".45" stroke-dasharray=".8 .4"/>
<text x="584.8" y="453.5" font-size="2.3" fill="#777" text-anchor="end">P3</text>
<text x="641.8" y="458.3" font-size="2.7" fill="#444" text-anchor="end" textLength="4.8" lengthAdjust="spacingAndGlyphs">K12</text>
<text x="644.6" y="459.8" font-size="2.9" fill="#2c2c2c" text-anchor="start" textLength="46" lengthAdjust="spacingAndGlyphs">LSCK_GPIO_LPCE0B_GPIO44_GPIO_LPCE1</text>
<path d="M640.5 458.8 H643.4" stroke="#707070" stroke-width=".6"/>
<path d="M606.3 458.8 H643.4" stroke="#707070" stroke-width=".6"/>
<path d="M601.0 457.7 H605.0999999999999 L606.3 458.8 L605.0999999999999 459.90000000000003 H601.0 Z" fill="#fff" stroke="#8a8ab8" stroke-width=".45"/>
<text x="585.0" y="460.1" font-size="4.4" font-weight="bold" fill="#3a3ab4" textLength="15" lengthAdjust="spacingAndGlyphs">LCD_A0</text>
<path d="M585.0 461.0 H600.0" stroke="#5050b8" stroke-width=".45" stroke-dasharray=".8 .4"/>
<text x="583.8" y="459.40000000000003" font-size="2.3" fill="#777" text-anchor="end">P3</text>
<text x="641.8" y="469.5" font-size="2.7" fill="#444" text-anchor="end" textLength="4.8" lengthAdjust="spacingAndGlyphs">F12</text>
<text x="644.6" y="471.0" font-size="2.9" fill="#2c2c2c" text-anchor="start" textLength="44" lengthAdjust="spacingAndGlyphs">LSA0_GPIO_LPTE_GPIO46_GPIO_LPCE1</text>
<path d="M640.5 470 H643.4" stroke="#707070" stroke-width=".6"/>
<path d="M606.3 470 H643.4" stroke="#707070" stroke-width=".6"/>
<path d="M601.0 468.9 H605.0999999999999 L606.3 470 L605.0999999999999 471.1 H601.0 Z" fill="#fff" stroke="#8a8ab8" stroke-width=".45"/>
<text x="587.0" y="471.3" font-size="4.4" font-weight="bold" fill="#3a3ab4" textLength="13" lengthAdjust="spacingAndGlyphs">LCD_RST</text>
<path d="M587.0 472.2 H600.0" stroke="#5050b8" stroke-width=".45" stroke-dasharray=".8 .4"/>
<text x="585.8" y="470.6" font-size="2.3" fill="#777" text-anchor="end">P9</text>
<text x="641.8" y="475.1" font-size="2.7" fill="#444" text-anchor="end" textLength="4.8" lengthAdjust="spacingAndGlyphs">D9</text>
<text x="644.6" y="476.6" font-size="2.9" fill="#2c2c2c" text-anchor="start" textLength="26" lengthAdjust="spacingAndGlyphs">LSRSTB_LRSTB_GPIO45</text>
<path d="M640.5 475.6 H643.4" stroke="#707070" stroke-width=".6"/>
<path d="M606.3 475.6 H643.4" stroke="#707070" stroke-width=".6"/>
<path d="M601.0 474.5 H605.0999999999999 L606.3 475.6 L605.0999999999999 476.70000000000005 H601.0 Z" fill="#fff" stroke="#8a8ab8" stroke-width=".45"/>
<text x="585.0" y="476.90000000000003" font-size="4.4" font-weight="bold" fill="#3a3ab4" textLength="15" lengthAdjust="spacingAndGlyphs">LCD_TE_IN</text>
<path d="M585.0 477.8 H600.0" stroke="#5050b8" stroke-width=".45" stroke-dasharray=".8 .4"/>
<text x="583.8" y="476.20000000000005" font-size="2.3" fill="#777" text-anchor="end">P7</text>
<text x="641.8" y="484.2" font-size="2.7" fill="#444" text-anchor="end" textLength="4.8" lengthAdjust="spacingAndGlyphs">D9</text>
<text x="644.6" y="485.7" font-size="2.9" fill="#2c2c2c" text-anchor="start" textLength="46" lengthAdjust="spacingAndGlyphs">LPTE_GPIO_LSCE1B_GPIO_LPCE1B_EINT1</text>
<path d="M640.5 484.7 H643.4" stroke="#707070" stroke-width=".6"/>
<path d="M608 484.7 H643.4" stroke="#707070" stroke-width=".6"/>
<text x="609" y="484.4" font-size="4.2" font-weight="bold" fill="#3a3ab4" textLength="12.5" lengthAdjust="spacingAndGlyphs">LPD0_D</text>
<path d="M609 485.3 H621.5" stroke="#5050b8" stroke-width=".45"/>
<text x="641.8" y="489.8" font-size="2.7" fill="#444" text-anchor="end" textLength="4.8" lengthAdjust="spacingAndGlyphs">C11</text>
<text x="644.6" y="491.3" font-size="2.9" fill="#2c2c2c" text-anchor="start" textLength="45" lengthAdjust="spacingAndGlyphs">LPRSTB_GPIO_47_GPIO_LPCE1B_EINT12</text>
<path d="M640.5 490.3 H643.4" stroke="#707070" stroke-width=".6"/>
<path d="M608 490.3 H643.4" stroke="#707070" stroke-width=".6"/>
<text x="609" y="490.0" font-size="4.2" font-weight="bold" fill="#3a3ab4" textLength="12.5" lengthAdjust="spacingAndGlyphs">LPD1_D</text>
<path d="M609 490.90000000000003 H621.5" stroke="#5050b8" stroke-width=".45"/>
<text x="641.8" y="495.5" font-size="2.7" fill="#444" text-anchor="end" textLength="4.8" lengthAdjust="spacingAndGlyphs">K12</text>
<text x="644.6" y="497.0" font-size="2.9" fill="#2c2c2c" text-anchor="start" textLength="47" lengthAdjust="spacingAndGlyphs">NLD0_GPIO_LPD0_EINT8_GPIO_LPCE1B_EI</text>
<path d="M640.5 496 H643.4" stroke="#707070" stroke-width=".6"/>
<path d="M608 496 H643.4" stroke="#707070" stroke-width=".6"/>
<text x="609" y="495.7" font-size="4.2" font-weight="bold" fill="#3a3ab4" textLength="12.5" lengthAdjust="spacingAndGlyphs">LPD2_D</text>
<path d="M609 496.6 H621.5" stroke="#5050b8" stroke-width=".45"/>
<text x="641.8" y="501.1" font-size="2.7" fill="#444" text-anchor="end" textLength="4.8" lengthAdjust="spacingAndGlyphs">E13</text>
<text x="644.6" y="502.6" font-size="2.9" fill="#2c2c2c" text-anchor="start" textLength="47" lengthAdjust="spacingAndGlyphs">NLD1_GPIO_LPD1_EINT9_GPIO_LPCE1B_EI</text>
<path d="M640.5 501.6 H643.4" stroke="#707070" stroke-width=".6"/>
<path d="M608 501.6 H643.4" stroke="#707070" stroke-width=".6"/>
<text x="609" y="501.3" font-size="4.2" font-weight="bold" fill="#3a3ab4" textLength="12.5" lengthAdjust="spacingAndGlyphs">LPD3_D</text>
<path d="M609 502.20000000000005 H621.5" stroke="#5050b8" stroke-width=".45"/>
<text x="641.8" y="507.0" font-size="2.7" fill="#444" text-anchor="end" textLength="4.8" lengthAdjust="spacingAndGlyphs">J13</text>
<text x="644.6" y="508.5" font-size="2.9" fill="#2c2c2c" text-anchor="start" textLength="47" lengthAdjust="spacingAndGlyphs">NLD2_GPIO_LPD2_EINT10_GPIO_LPCE1B_E</text>
<path d="M640.5 507.5 H643.4" stroke="#707070" stroke-width=".6"/>
<path d="M608 507.5 H643.4" stroke="#707070" stroke-width=".6"/>
<text x="609" y="507.2" font-size="4.2" font-weight="bold" fill="#3a3ab4" textLength="12.5" lengthAdjust="spacingAndGlyphs">LPD4_D</text>
<path d="M609 508.1 H621.5" stroke="#5050b8" stroke-width=".45"/>
<text x="641.8" y="512.5" font-size="2.7" fill="#444" text-anchor="end" textLength="4.8" lengthAdjust="spacingAndGlyphs">H10</text>
<text x="644.6" y="514.0" font-size="2.9" fill="#2c2c2c" text-anchor="start" textLength="45" lengthAdjust="spacingAndGlyphs">NLD3_GPIO_LPD3_EINT11_GPIO_LPCE1B</text>
<path d="M640.5 513 H643.4" stroke="#707070" stroke-width=".6"/>
<path d="M608 513 H643.4" stroke="#707070" stroke-width=".6"/>
<text x="609" y="512.7" font-size="4.2" font-weight="bold" fill="#3a3ab4" textLength="12.5" lengthAdjust="spacingAndGlyphs">LPD5_D</text>
<path d="M609 513.6 H621.5" stroke="#5050b8" stroke-width=".45"/>
<text x="641.8" y="518.5" font-size="2.7" fill="#444" text-anchor="end" textLength="4.8" lengthAdjust="spacingAndGlyphs">F12</text>
<text x="644.6" y="520.0" font-size="2.9" fill="#2c2c2c" text-anchor="start" textLength="45" lengthAdjust="spacingAndGlyphs">NLD4_GPIO_LPD4_EINT12_GPIO_LPCE1B</text>
<path d="M640.5 519 H643.4" stroke="#707070" stroke-width=".6"/>
<path d="M608 519 H643.4" stroke="#707070" stroke-width=".6"/>
<text x="609" y="518.7" font-size="4.2" font-weight="bold" fill="#3a3ab4" textLength="12.5" lengthAdjust="spacingAndGlyphs">LPD6_D</text>
<path d="M609 519.6 H621.5" stroke="#5050b8" stroke-width=".45"/>
<text x="641.8" y="524.1" font-size="2.7" fill="#444" text-anchor="end" textLength="4.8" lengthAdjust="spacingAndGlyphs">H10</text>
<text x="644.6" y="525.6" font-size="2.9" fill="#2c2c2c" text-anchor="start" textLength="33" lengthAdjust="spacingAndGlyphs">NLD5_GPIO_LPD5_KCOL_GPIO</text>
<path d="M640.5 524.6 H643.4" stroke="#707070" stroke-width=".6"/>
<path d="M608 524.6 H643.4" stroke="#707070" stroke-width=".6"/>
<text x="609" y="524.3000000000001" font-size="4.2" font-weight="bold" fill="#3a3ab4" textLength="12.5" lengthAdjust="spacingAndGlyphs">LPD7_D</text>
<path d="M609 525.2 H621.5" stroke="#5050b8" stroke-width=".45"/>
<text x="641.8" y="529.7" font-size="2.7" fill="#444" text-anchor="end" textLength="4.8" lengthAdjust="spacingAndGlyphs">E13</text>
<text x="644.6" y="531.2" font-size="2.9" fill="#2c2c2c" text-anchor="start" textLength="38" lengthAdjust="spacingAndGlyphs">NLD6_GPIO_LPD6_KROW_GPIO_LPC</text>
<path d="M640.5 530.2 H643.4" stroke="#707070" stroke-width=".6"/>
<text x="641.8" y="541.2" font-size="2.7" fill="#444" text-anchor="end" textLength="4.8" lengthAdjust="spacingAndGlyphs">K12</text>
<text x="644.6" y="542.7" font-size="2.9" fill="#2c2c2c" text-anchor="start" textLength="20" lengthAdjust="spacingAndGlyphs">NLD7_GPIO_LPD7</text>
<path d="M640.5 541.7 H643.4" stroke="#707070" stroke-width=".6"/>
<text x="641.8" y="547.1" font-size="2.7" fill="#444" text-anchor="end" textLength="4.8" lengthAdjust="spacingAndGlyphs">C11</text>
<text x="644.6" y="548.6" font-size="2.9" fill="#2c2c2c" text-anchor="start" textLength="20" lengthAdjust="spacingAndGlyphs">NLD8_GPIO_LPD8</text>
<path d="M640.5 547.6 H643.4" stroke="#707070" stroke-width=".6"/>
<text x="641.8" y="552.7" font-size="2.7" fill="#444" text-anchor="end" textLength="4.8" lengthAdjust="spacingAndGlyphs">C11</text>
<text x="644.6" y="554.2" font-size="2.9" fill="#2c2c2c" text-anchor="start" textLength="20" lengthAdjust="spacingAndGlyphs">GPIO_0_EINT0_GP</text>
<path d="M640.5 553.2 H643.4" stroke="#707070" stroke-width=".6"/>
<path d="M606.3 553.2 H643.4" stroke="#707070" stroke-width=".6"/>
<path d="M601.0 552.1 H605.0999999999999 L606.3 553.2 L605.0999999999999 554.3000000000001 H601.0 Z" fill="#fff" stroke="#8a8ab8" stroke-width=".45"/>
<text x="584.0" y="554.5" font-size="4.4" font-weight="bold" fill="#3a3ab4" textLength="16" lengthAdjust="spacingAndGlyphs">GPIO_TORCH</text>
<path d="M584.0 555.4000000000001 H600.0" stroke="#5050b8" stroke-width=".45" stroke-dasharray=".8 .4"/>
<text x="582.8" y="553.8000000000001" font-size="2.3" fill="#777" text-anchor="end">P3</text>
<text x="641.8" y="561.3" font-size="2.7" fill="#444" text-anchor="end" textLength="4.8" lengthAdjust="spacingAndGlyphs">A10</text>
<text x="644.6" y="562.8" font-size="2.9" fill="#2c2c2c" text-anchor="start" textLength="20" lengthAdjust="spacingAndGlyphs">GPIO_1_EINT1_GP</text>
<path d="M640.5 561.8 H643.4" stroke="#707070" stroke-width=".6"/>
<path d="M606.3 561.8 H643.4" stroke="#707070" stroke-width=".6"/>
<path d="M601.0 560.6999999999999 H605.0999999999999 L606.3 561.8 L605.0999999999999 562.9 H601.0 Z" fill="#fff" stroke="#8a8ab8" stroke-width=".45"/>
<text x="577.0" y="563.0999999999999" font-size="4.4" font-weight="bold" fill="#3a3ab4" textLength="23" lengthAdjust="spacingAndGlyphs">GPIO_FLASH_EN</text>
<path d="M577.0 564.0 H600.0" stroke="#5050b8" stroke-width=".45" stroke-dasharray=".8 .4"/>
<text x="575.8" y="562.4" font-size="2.3" fill="#777" text-anchor="end">P9</text>
<text x="641.8" y="567.2" font-size="2.7" fill="#444" text-anchor="end" textLength="4.8" lengthAdjust="spacingAndGlyphs">A10</text>
<text x="644.6" y="568.7" font-size="2.9" fill="#2c2c2c" text-anchor="start" textLength="20" lengthAdjust="spacingAndGlyphs">GPIO_2_EINT2_GP</text>
<path d="M640.5 567.7 H643.4" stroke="#707070" stroke-width=".6"/>
<path d="M606.3 567.7 H643.4" stroke="#707070" stroke-width=".6"/>
<path d="M601.0 566.6 H605.0999999999999 L606.3 567.7 L605.0999999999999 568.8000000000001 H601.0 Z" fill="#fff" stroke="#8a8ab8" stroke-width=".45"/>
<text x="572.0" y="569.0" font-size="4.4" font-weight="bold" fill="#3a3ab4" textLength="28" lengthAdjust="spacingAndGlyphs">GPIO_CHARGE_DET</text>
<path d="M572.0 569.9000000000001 H600.0" stroke="#5050b8" stroke-width=".45" stroke-dasharray=".8 .4"/>
<text x="570.8" y="568.3000000000001" font-size="2.3" fill="#777" text-anchor="end">P3</text>
<text x="641.8" y="572.8" font-size="2.7" fill="#444" text-anchor="end" textLength="4.8" lengthAdjust="spacingAndGlyphs">G11</text>
<text x="644.6" y="574.3" font-size="2.9" fill="#2c2c2c" text-anchor="start" textLength="20" lengthAdjust="spacingAndGlyphs">GPIO_3_UCTS_GPI</text>
<path d="M640.5 573.3 H643.4" stroke="#707070" stroke-width=".6"/>
<path d="M606.3 573.3 H643.4" stroke="#707070" stroke-width=".6"/>
<path d="M601.0 572.1999999999999 H605.0999999999999 L606.3 573.3 L605.0999999999999 574.4 H601.0 Z" fill="#fff" stroke="#8a8ab8" stroke-width=".45"/>
<text x="578.0" y="574.5999999999999" font-size="4.4" font-weight="bold" fill="#3a3ab4" textLength="22" lengthAdjust="spacingAndGlyphs">GPIO_MOTOR_EN</text>
<path d="M578.0 575.5 H600.0" stroke="#5050b8" stroke-width=".45" stroke-dasharray=".8 .4"/>
<text x="576.8" y="573.9" font-size="2.3" fill="#777" text-anchor="end">P5</text>
<text x="641.8" y="578.7" font-size="2.7" fill="#444" text-anchor="end" textLength="4.8" lengthAdjust="spacingAndGlyphs">C11</text>
<text x="644.6" y="580.2" font-size="2.9" fill="#2c2c2c" text-anchor="start" textLength="32" lengthAdjust="spacingAndGlyphs">GPIO_4_URTS_GPIO_LPCE1B</text>
<path d="M640.5 579.2 H643.4" stroke="#707070" stroke-width=".6"/>
<path d="M606.3 579.2 H643.4" stroke="#707070" stroke-width=".6"/>
<path d="M601.0 578.1 H605.0999999999999 L606.3 579.2 L605.0999999999999 580.3000000000001 H601.0 Z" fill="#fff" stroke="#8a8ab8" stroke-width=".45"/>
<text x="588.0" y="580.5" font-size="4.4" font-weight="bold" fill="#3a3ab4" textLength="12" lengthAdjust="spacingAndGlyphs">U2RXD</text>
<path d="M588.0 581.4000000000001 H600.0" stroke="#5050b8" stroke-width=".45" stroke-dasharray=".8 .4"/>
<text x="586.8" y="579.8000000000001" font-size="2.3" fill="#777" text-anchor="end">P9</text>
<text x="641.8" y="584.3" font-size="2.7" fill="#444" text-anchor="end" textLength="4.8" lengthAdjust="spacingAndGlyphs">F12</text>
<text x="644.6" y="585.8" font-size="2.9" fill="#2c2c2c" text-anchor="start" textLength="30" lengthAdjust="spacingAndGlyphs">GPIO_5_EINT4_GPIO_LPCE</text>
<path d="M640.5 584.8 H643.4" stroke="#707070" stroke-width=".6"/>
<path d="M606.3 584.8 H643.4" stroke="#707070" stroke-width=".6"/>
<path d="M601.0 583.6999999999999 H605.0999999999999 L606.3 584.8 L605.0999999999999 585.9 H601.0 Z" fill="#fff" stroke="#8a8ab8" stroke-width=".45"/>
<text x="586.0" y="586.0999999999999" font-size="4.4" font-weight="bold" fill="#3a3ab4" textLength="14" lengthAdjust="spacingAndGlyphs">U2TXD_LPTE</text>
<path d="M586.0 587.0 H600.0" stroke="#5050b8" stroke-width=".45" stroke-dasharray=".8 .4"/>
<text x="584.8" y="585.4" font-size="2.3" fill="#777" text-anchor="end">P9</text>
<text x="641.8" y="595.8" font-size="2.7" fill="#444" text-anchor="end" textLength="4.8" lengthAdjust="spacingAndGlyphs">K12</text>
<text x="644.6" y="597.3" font-size="2.9" fill="#2c2c2c" text-anchor="start" textLength="22" lengthAdjust="spacingAndGlyphs">GPIO_10_U2RXD_GP</text>
<path d="M640.5 596.3 H643.4" stroke="#707070" stroke-width=".6"/>
<path d="M606.3 596.3 H643.4" stroke="#707070" stroke-width=".6"/>
<path d="M601.0 595.1999999999999 H605.0999999999999 L606.3 596.3 L605.0999999999999 597.4 H601.0 Z" fill="#fff" stroke="#8a8ab8" stroke-width=".45"/>
<text x="589.0" y="597.5999999999999" font-size="4.4" font-weight="bold" fill="#3a3ab4" textLength="11" lengthAdjust="spacingAndGlyphs">KCOL0</text>
<path d="M589.0 598.5 H600.0" stroke="#5050b8" stroke-width=".45" stroke-dasharray=".8 .4"/>
<text x="587.8" y="596.9" font-size="2.3" fill="#777" text-anchor="end">P3</text>
<text x="641.8" y="601.5" font-size="2.7" fill="#444" text-anchor="end" textLength="4.8" lengthAdjust="spacingAndGlyphs">K12</text>
<text x="644.6" y="603.0" font-size="2.9" fill="#2c2c2c" text-anchor="start" textLength="22" lengthAdjust="spacingAndGlyphs">GPIO_11_U2TXD_LP</text>
<path d="M640.5 602 H643.4" stroke="#707070" stroke-width=".6"/>
<path d="M606.3 602 H643.4" stroke="#707070" stroke-width=".6"/>
<path d="M601.0 600.9 H605.0999999999999 L606.3 602 L605.0999999999999 603.1 H601.0 Z" fill="#fff" stroke="#8a8ab8" stroke-width=".45"/>
<text x="589.0" y="603.3" font-size="4.4" font-weight="bold" fill="#3a3ab4" textLength="11" lengthAdjust="spacingAndGlyphs">KCOL1</text>
<path d="M589.0 604.2 H600.0" stroke="#5050b8" stroke-width=".45" stroke-dasharray=".8 .4"/>
<text x="587.8" y="602.6" font-size="2.3" fill="#777" text-anchor="end">P3</text>
<text x="641.8" y="607.3" font-size="2.7" fill="#444" text-anchor="end" textLength="4.8" lengthAdjust="spacingAndGlyphs">C11</text>
<text x="644.6" y="608.8" font-size="2.9" fill="#2c2c2c" text-anchor="start" textLength="22" lengthAdjust="spacingAndGlyphs">KCOL0_GPIO_12_GP</text>
<path d="M640.5 607.8 H643.4" stroke="#707070" stroke-width=".6"/>
<path d="M606.3 607.8 H643.4" stroke="#707070" stroke-width=".6"/>
<path d="M601.0 606.6999999999999 H605.0999999999999 L606.3 607.8 L605.0999999999999 608.9 H601.0 Z" fill="#fff" stroke="#8a8ab8" stroke-width=".45"/>
<text x="589.0" y="609.0999999999999" font-size="4.4" font-weight="bold" fill="#3a3ab4" textLength="11" lengthAdjust="spacingAndGlyphs">KCOL2</text>
<path d="M589.0 610.0 H600.0" stroke="#5050b8" stroke-width=".45" stroke-dasharray=".8 .4"/>
<text x="587.8" y="608.4" font-size="2.3" fill="#777" text-anchor="end">P5</text>
<text x="641.8" y="613.0" font-size="2.7" fill="#444" text-anchor="end" textLength="4.8" lengthAdjust="spacingAndGlyphs">E13</text>
<text x="644.6" y="614.5" font-size="2.9" fill="#2c2c2c" text-anchor="start" textLength="22" lengthAdjust="spacingAndGlyphs">KCOL1_GPIO_13_GP</text>
<path d="M640.5 613.5 H643.4" stroke="#707070" stroke-width=".6"/>
<path d="M606.3 613.5 H643.4" stroke="#707070" stroke-width=".6"/>
<path d="M601.0 612.4 H605.0999999999999 L606.3 613.5 L605.0999999999999 614.6 H601.0 Z" fill="#fff" stroke="#8a8ab8" stroke-width=".45"/>
<text x="589.0" y="614.8" font-size="4.4" font-weight="bold" fill="#3a3ab4" textLength="11" lengthAdjust="spacingAndGlyphs">KCOL3</text>
<path d="M589.0 615.7 H600.0" stroke="#5050b8" stroke-width=".45" stroke-dasharray=".8 .4"/>
<text x="587.8" y="614.1" font-size="2.3" fill="#777" text-anchor="end">P3</text>
<text x="641.8" y="618.9" font-size="2.7" fill="#444" text-anchor="end" textLength="4.8" lengthAdjust="spacingAndGlyphs">C11</text>
<text x="644.6" y="620.4" font-size="2.9" fill="#2c2c2c" text-anchor="start" textLength="34" lengthAdjust="spacingAndGlyphs">KCOL2_GPIO_14_GPIO_LPCE1B</text>
<path d="M640.5 619.4 H643.4" stroke="#707070" stroke-width=".6"/>
<text x="641.8" y="624.7" font-size="2.7" fill="#444" text-anchor="end" textLength="4.8" lengthAdjust="spacingAndGlyphs">B12</text>
<text x="644.6" y="626.2" font-size="2.9" fill="#2c2c2c" text-anchor="start" textLength="34" lengthAdjust="spacingAndGlyphs">KCOL3_GPIO_15_GPIO_LPCE1B</text>
<path d="M640.5 625.2 H643.4" stroke="#707070" stroke-width=".6"/>
<text x="641.8" y="630.4" font-size="2.7" fill="#444" text-anchor="end" textLength="4.8" lengthAdjust="spacingAndGlyphs">E13</text>
<text x="644.6" y="631.9" font-size="2.9" fill="#2c2c2c" text-anchor="start" textLength="42" lengthAdjust="spacingAndGlyphs">KCOL4_GPIO_16_U3RX_GPIO_LPCE1B</text>
<path d="M640.5 630.9 H643.4" stroke="#707070" stroke-width=".6"/>
<text x="641.8" y="636.3" font-size="2.7" fill="#444" text-anchor="end" textLength="4.8" lengthAdjust="spacingAndGlyphs">K12</text>
<text x="644.6" y="637.8" font-size="2.9" fill="#2c2c2c" text-anchor="start" textLength="42" lengthAdjust="spacingAndGlyphs">KCOL5_GPIO_17_U3TX_GPIO_LPCE1B</text>
<path d="M640.5 636.8 H643.4" stroke="#707070" stroke-width=".6"/>
<text x="641.8" y="644.8" font-size="2.7" fill="#444" text-anchor="end" textLength="4.8" lengthAdjust="spacingAndGlyphs">H10</text>
<text x="644.6" y="646.3" font-size="2.9" fill="#2c2c2c" text-anchor="start" textLength="28" lengthAdjust="spacingAndGlyphs">KCOL6_GPIO18_EINT_PWM</text>
<path d="M640.5 645.3 H643.4" stroke="#707070" stroke-width=".6"/>
<path d="M606.3 645.3 H643.4" stroke="#707070" stroke-width=".6"/>
<path d="M601.0 644.1999999999999 H605.0999999999999 L606.3 645.3 L605.0999999999999 646.4 H601.0 Z" fill="#fff" stroke="#8a8ab8" stroke-width=".45"/>
<text x="584.0" y="646.5999999999999" font-size="4.4" font-weight="bold" fill="#3a3ab4" textLength="16" lengthAdjust="spacingAndGlyphs">KROW1_K</text>
<path d="M584.0 647.5 H600.0" stroke="#5050b8" stroke-width=".45" stroke-dasharray=".8 .4"/>
<text x="582.8" y="645.9" font-size="2.3" fill="#777" text-anchor="end">P9</text>
<text x="641.8" y="650.5" font-size="2.7" fill="#444" text-anchor="end" textLength="4.8" lengthAdjust="spacingAndGlyphs">G11</text>
<text x="644.6" y="652.0" font-size="2.9" fill="#2c2c2c" text-anchor="start" textLength="28" lengthAdjust="spacingAndGlyphs">KROW0_GPIO19_EINT_PWM</text>
<path d="M640.5 651 H643.4" stroke="#707070" stroke-width=".6"/>
<path d="M606.3 651 H643.4" stroke="#707070" stroke-width=".6"/>
<path d="M601.0 649.9 H605.0999999999999 L606.3 651 L605.0999999999999 652.1 H601.0 Z" fill="#fff" stroke="#8a8ab8" stroke-width=".45"/>
<text x="585.0" y="652.3" font-size="4.4" font-weight="bold" fill="#3a3ab4" textLength="15" lengthAdjust="spacingAndGlyphs">KROW2_K</text>
<path d="M585.0 653.2 H600.0" stroke="#5050b8" stroke-width=".45" stroke-dasharray=".8 .4"/>
<text x="583.8" y="651.6" font-size="2.3" fill="#777" text-anchor="end">P9</text>
<text x="641.8" y="656.3" font-size="2.7" fill="#444" text-anchor="end" textLength="4.8" lengthAdjust="spacingAndGlyphs">B12</text>
<text x="644.6" y="657.8" font-size="2.9" fill="#2c2c2c" text-anchor="start" textLength="28" lengthAdjust="spacingAndGlyphs">KROW1_GPIO_20_GPIO_LP</text>
<path d="M640.5 656.8 H643.4" stroke="#707070" stroke-width=".6"/>
<path d="M606.3 656.8 H643.4" stroke="#707070" stroke-width=".6"/>
<path d="M601.0 655.6999999999999 H605.0999999999999 L606.3 656.8 L605.0999999999999 657.9 H601.0 Z" fill="#fff" stroke="#8a8ab8" stroke-width=".45"/>
<text x="585.0" y="658.0999999999999" font-size="4.4" font-weight="bold" fill="#3a3ab4" textLength="15" lengthAdjust="spacingAndGlyphs">KROW3_K</text>
<path d="M585.0 659.0 H600.0" stroke="#5050b8" stroke-width=".45" stroke-dasharray=".8 .4"/>
<text x="583.8" y="657.4" font-size="2.3" fill="#777" text-anchor="end">P3</text>
<text x="641.8" y="662.0" font-size="2.7" fill="#444" text-anchor="end" textLength="4.8" lengthAdjust="spacingAndGlyphs">F12</text>
<text x="644.6" y="663.5" font-size="2.9" fill="#2c2c2c" text-anchor="start" textLength="38" lengthAdjust="spacingAndGlyphs">KROW2_GPIO_21_GPIO_LPCE1B_EI</text>
<path d="M640.5 662.5 H643.4" stroke="#707070" stroke-width=".6"/>
<path d="M606.3 662.5 H643.4" stroke="#707070" stroke-width=".6"/>
<path d="M601.0 661.4 H605.0999999999999 L606.3 662.5 L605.0999999999999 663.6 H601.0 Z" fill="#fff" stroke="#8a8ab8" stroke-width=".45"/>
<text x="585.0" y="663.8" font-size="4.4" font-weight="bold" fill="#3a3ab4" textLength="15" lengthAdjust="spacingAndGlyphs">KROW4_K</text>
<path d="M585.0 664.7 H600.0" stroke="#5050b8" stroke-width=".45" stroke-dasharray=".8 .4"/>
<text x="583.8" y="663.1" font-size="2.3" fill="#777" text-anchor="end">P7</text>
<text x="641.8" y="667.8" font-size="2.7" fill="#444" text-anchor="end" textLength="4.8" lengthAdjust="spacingAndGlyphs">K12</text>
<text x="644.6" y="669.3" font-size="2.9" fill="#2c2c2c" text-anchor="start" textLength="38" lengthAdjust="spacingAndGlyphs">KROW3_GPIO_22_GPIO_LPCE1B_EI</text>
<path d="M640.5 668.3 H643.4" stroke="#707070" stroke-width=".6"/>
<path d="M606.3 668.3 H643.4" stroke="#707070" stroke-width=".6"/>
<path d="M601.0 667.1999999999999 H605.0999999999999 L606.3 668.3 L605.0999999999999 669.4 H601.0 Z" fill="#fff" stroke="#8a8ab8" stroke-width=".45"/>
<text x="585.0" y="669.5999999999999" font-size="4.4" font-weight="bold" fill="#3a3ab4" textLength="15" lengthAdjust="spacingAndGlyphs">KROW5_K</text>
<path d="M585.0 670.5 H600.0" stroke="#5050b8" stroke-width=".45" stroke-dasharray=".8 .4"/>
<text x="583.8" y="668.9" font-size="2.3" fill="#777" text-anchor="end">P5</text>
<text x="641.8" y="673.5" font-size="2.7" fill="#444" text-anchor="end" textLength="4.8" lengthAdjust="spacingAndGlyphs">H10</text>
<text x="644.6" y="675.0" font-size="2.9" fill="#2c2c2c" text-anchor="start" textLength="34" lengthAdjust="spacingAndGlyphs">KROW4_GPIO_23_EINT_GPIO_L</text>
<path d="M640.5 674 H643.4" stroke="#707070" stroke-width=".6"/>
<path d="M606.3 674 H643.4" stroke="#707070" stroke-width=".6"/>
<path d="M601.0 672.9 H605.0999999999999 L606.3 674 L605.0999999999999 675.1 H601.0 Z" fill="#fff" stroke="#8a8ab8" stroke-width=".45"/>
<text x="586.0" y="675.3" font-size="4.4" font-weight="bold" fill="#3a3ab4" textLength="14" lengthAdjust="spacingAndGlyphs">KROW6_K</text>
<path d="M586.0 676.2 H600.0" stroke="#5050b8" stroke-width=".45" stroke-dasharray=".8 .4"/>
<text x="584.8" y="674.6" font-size="2.3" fill="#777" text-anchor="end">P5</text>
<text x="641.8" y="679.3" font-size="2.7" fill="#444" text-anchor="end" textLength="4.8" lengthAdjust="spacingAndGlyphs">D9</text>
<text x="644.6" y="680.8" font-size="2.9" fill="#2c2c2c" text-anchor="start" textLength="34" lengthAdjust="spacingAndGlyphs">KROW5_GPIO_24_EINT_GPIO_L</text>
<path d="M640.5 679.8 H643.4" stroke="#707070" stroke-width=".6"/>
<path d="M560 481.4 H608 V527.4 H600.3" fill="none" stroke="#1c1c40" stroke-width="1.15"/>
<text x="566" y="480" font-size="4.3" font-weight="bold" fill="#3a3ab4" textLength="19" lengthAdjust="spacingAndGlyphs">LPD[0:7]</text>
<text x="811.3" y="283.0" font-size="2.7" fill="#444" text-anchor="start" textLength="3.8" lengthAdjust="spacingAndGlyphs">E6</text>
<text x="808.8" y="284.5" font-size="2.9" fill="#2c2c2c" text-anchor="end" textLength="23.7" lengthAdjust="spacingAndGlyphs">BPI_BUS0_GPIO_26</text>
<path d="M810 283.5 H813" stroke="#707070" stroke-width=".6"/>
<text x="811.3" y="288.8" font-size="2.7" fill="#444" text-anchor="start" textLength="3.8" lengthAdjust="spacingAndGlyphs">C4</text>
<text x="808.8" y="290.3" font-size="2.9" fill="#2c2c2c" text-anchor="end" textLength="23.7" lengthAdjust="spacingAndGlyphs">BPI_BUS1_GPIO_27</text>
<path d="M810 289.3 H813" stroke="#707070" stroke-width=".6"/>
<path d="M810 289.3 H847" stroke="#707070" stroke-width=".6"/>
<path d="M847 288.2 H851 L852.2 289.3 L851 290.40000000000003 H847 Z" fill="#fff" stroke="#8a8ab8" stroke-width=".45"/>
<text x="853.2" y="290.6" font-size="4.4" font-weight="bold" fill="#3a3ab4" textLength="14.5" lengthAdjust="spacingAndGlyphs">RF_LNA1</text>
<path d="M853.2 291.5 H867.7" stroke="#5050b8" stroke-width=".45" stroke-dasharray=".8 .4"/>
<text x="868.9000000000001" y="289.90000000000003" font-size="2.3" fill="#777" text-anchor="start">P6</text>
<text x="811.3" y="294.5" font-size="2.7" fill="#444" text-anchor="start" textLength="3.8" lengthAdjust="spacingAndGlyphs">G8</text>
<text x="808.8" y="296.0" font-size="2.9" fill="#2c2c2c" text-anchor="end" textLength="23.7" lengthAdjust="spacingAndGlyphs">BPI_BUS2_GPIO_28</text>
<path d="M810 295 H813" stroke="#707070" stroke-width=".6"/>
<path d="M810 295 H847" stroke="#707070" stroke-width=".6"/>
<path d="M847 293.9 H851 L852.2 295 L851 296.1 H847 Z" fill="#fff" stroke="#8a8ab8" stroke-width=".45"/>
<text x="853.2" y="296.3" font-size="4.4" font-weight="bold" fill="#3a3ab4" textLength="14.5" lengthAdjust="spacingAndGlyphs">RF_LNA2</text>
<path d="M853.2 297.2 H867.7" stroke="#5050b8" stroke-width=".45" stroke-dasharray=".8 .4"/>
<text x="868.9000000000001" y="295.6" font-size="2.3" fill="#777" text-anchor="start">P11</text>
<text x="811.3" y="300.1" font-size="2.7" fill="#444" text-anchor="start" textLength="3.8" lengthAdjust="spacingAndGlyphs">H9</text>
<text x="808.8" y="301.6" font-size="2.9" fill="#2c2c2c" text-anchor="end" textLength="23.7" lengthAdjust="spacingAndGlyphs">BPI_BUS3_GPIO_29</text>
<path d="M810 300.6 H813" stroke="#707070" stroke-width=".6"/>
<text x="811.3" y="306.0" font-size="2.7" fill="#444" text-anchor="start" textLength="3.8" lengthAdjust="spacingAndGlyphs">B3</text>
<text x="808.8" y="307.5" font-size="2.9" fill="#2c2c2c" text-anchor="end" textLength="23.7" lengthAdjust="spacingAndGlyphs">BPI_BUS4_GPIO_30</text>
<path d="M810 306.5 H813" stroke="#707070" stroke-width=".6"/>
<text x="811.3" y="311.5" font-size="2.7" fill="#444" text-anchor="start" textLength="3.8" lengthAdjust="spacingAndGlyphs">C4</text>
<text x="808.8" y="313.0" font-size="2.9" fill="#2c2c2c" text-anchor="end" textLength="23.7" lengthAdjust="spacingAndGlyphs">BPI_BUS5_GPIO_31</text>
<path d="M810 312 H813" stroke="#707070" stroke-width=".6"/>
<path d="M810 312 H847" stroke="#707070" stroke-width=".6"/>
<path d="M847 310.9 H851 L852.2 312 L851 313.1 H847 Z" fill="#fff" stroke="#8a8ab8" stroke-width=".45"/>
<text x="853.2" y="313.3" font-size="4.4" font-weight="bold" fill="#3a3ab4" textLength="14.5" lengthAdjust="spacingAndGlyphs">RF_PA</text>
<path d="M853.2 314.2 H867.7" stroke="#5050b8" stroke-width=".45" stroke-dasharray=".8 .4"/>
<text x="868.9000000000001" y="312.6" font-size="2.3" fill="#777" text-anchor="start">P11</text>
<text x="811.3" y="323.1" font-size="2.7" fill="#444" text-anchor="start" textLength="3.8" lengthAdjust="spacingAndGlyphs">G8</text>
<text x="808.8" y="324.6" font-size="2.9" fill="#2c2c2c" text-anchor="end" textLength="47.4" lengthAdjust="spacingAndGlyphs">JTDI_GPIO_MCINS_EINT_SPICS_MC0CM</text>
<path d="M810 323.6 H813" stroke="#707070" stroke-width=".6"/>
<text x="811.3" y="329.0" font-size="2.7" fill="#444" text-anchor="start" textLength="3.8" lengthAdjust="spacingAndGlyphs">J2</text>
<text x="808.8" y="330.5" font-size="2.9" fill="#2c2c2c" text-anchor="end" textLength="47.4" lengthAdjust="spacingAndGlyphs">JTMS_GPIO_MCCK_EINT_SPISCK_MC0CK</text>
<path d="M810 329.5 H813" stroke="#707070" stroke-width=".6"/>
<text x="811.3" y="334.6" font-size="2.7" fill="#444" text-anchor="start" textLength="3.8" lengthAdjust="spacingAndGlyphs">E6</text>
<text x="808.8" y="336.1" font-size="2.9" fill="#2c2c2c" text-anchor="end" textLength="51.8" lengthAdjust="spacingAndGlyphs">JTCK_GPIO_MCDA0_CLKO_SPIMOSI_MC0DA0</text>
<path d="M810 335.1 H813" stroke="#707070" stroke-width=".6"/>
<text x="811.3" y="340.5" font-size="2.7" fill="#444" text-anchor="start" textLength="3.8" lengthAdjust="spacingAndGlyphs">C4</text>
<text x="808.8" y="342.0" font-size="2.9" fill="#2c2c2c" text-anchor="end" textLength="56.2" lengthAdjust="spacingAndGlyphs">JTRST_B_GPIO_MCDA1_EINT_SPIMISO_MC0DA1</text>
<path d="M810 341 H813" stroke="#707070" stroke-width=".6"/>
<text x="811.3" y="346.1" font-size="2.7" fill="#444" text-anchor="start" textLength="3.8" lengthAdjust="spacingAndGlyphs">G8</text>
<text x="808.8" y="347.6" font-size="2.9" fill="#2c2c2c" text-anchor="end" textLength="48.8" lengthAdjust="spacingAndGlyphs">JTDO_GPIO_MCDA2_EINT_SPICS_MC0DA2</text>
<path d="M810 346.6 H813" stroke="#707070" stroke-width=".6"/>
<text x="811.3" y="357.6" font-size="2.7" fill="#444" text-anchor="start" textLength="3.8" lengthAdjust="spacingAndGlyphs">J2</text>
<text x="808.8" y="359.1" font-size="2.9" fill="#2c2c2c" text-anchor="end" textLength="51.8" lengthAdjust="spacingAndGlyphs">URXD1_GPIO_U1RX_EINT_KCOL_U2RX_BTRX</text>
<path d="M810 358.1 H813" stroke="#707070" stroke-width=".6"/>
<text x="811.3" y="363.3" font-size="2.7" fill="#444" text-anchor="start" textLength="3.8" lengthAdjust="spacingAndGlyphs">E6</text>
<text x="808.8" y="364.8" font-size="2.9" fill="#2c2c2c" text-anchor="end" textLength="51.8" lengthAdjust="spacingAndGlyphs">UTXD1_GPIO_U1TX_EINT_KROW_U2TX_BTTX</text>
<path d="M810 363.8 H813" stroke="#707070" stroke-width=".6"/>
<text x="811.3" y="369.1" font-size="2.7" fill="#444" text-anchor="start" textLength="3.8" lengthAdjust="spacingAndGlyphs">G8</text>
<text x="808.8" y="370.6" font-size="2.9" fill="#2c2c2c" text-anchor="end" textLength="23.7" lengthAdjust="spacingAndGlyphs">URXD2_GPIO_U2RXD</text>
<path d="M810 369.6 H813" stroke="#707070" stroke-width=".6"/>
<path d="M810 369.6 H850" stroke="#707070" stroke-width=".6"/>
<path d="M850 368.5 H854 L855.2 369.6 L854 370.70000000000005 H850 Z" fill="#fff" stroke="#8a8ab8" stroke-width=".45"/>
<text x="856.2" y="370.90000000000003" font-size="4.4" font-weight="bold" fill="#3a3ab4" textLength="14.5" lengthAdjust="spacingAndGlyphs">URXD1</text>
<path d="M856.2 371.8 H870.7" stroke="#5050b8" stroke-width=".45" stroke-dasharray=".8 .4"/>
<text x="871.9000000000001" y="370.20000000000005" font-size="2.3" fill="#777" text-anchor="start">P8</text>
<text x="811.3" y="374.8" font-size="2.7" fill="#444" text-anchor="start" textLength="3.8" lengthAdjust="spacingAndGlyphs">G8</text>
<text x="808.8" y="376.3" font-size="2.9" fill="#2c2c2c" text-anchor="end" textLength="23.7" lengthAdjust="spacingAndGlyphs">UTXD2_GPIO_U2TXD</text>
<path d="M810 375.3 H813" stroke="#707070" stroke-width=".6"/>
<path d="M810 375.3 H850" stroke="#707070" stroke-width=".6"/>
<path d="M850 374.2 H854 L855.2 375.3 L854 376.40000000000003 H850 Z" fill="#fff" stroke="#8a8ab8" stroke-width=".45"/>
<text x="856.2" y="376.6" font-size="4.4" font-weight="bold" fill="#3a3ab4" textLength="14.5" lengthAdjust="spacingAndGlyphs">UTXD1</text>
<path d="M856.2 377.5 H870.7" stroke="#5050b8" stroke-width=".45" stroke-dasharray=".8 .4"/>
<text x="871.9000000000001" y="375.90000000000003" font-size="2.3" fill="#777" text-anchor="start">P6</text>
<text x="811.3" y="386.5" font-size="2.7" fill="#444" text-anchor="start" textLength="3.8" lengthAdjust="spacingAndGlyphs">C4</text>
<text x="808.8" y="388.0" font-size="2.9" fill="#2c2c2c" text-anchor="end" textLength="34.0" lengthAdjust="spacingAndGlyphs">DAICLK_GPIO_I2SCK_MC1CK</text>
<path d="M810 387 H813" stroke="#707070" stroke-width=".6"/>
<text x="811.3" y="392.2" font-size="2.7" fill="#444" text-anchor="start" textLength="3.8" lengthAdjust="spacingAndGlyphs">B3</text>
<text x="808.8" y="393.7" font-size="2.9" fill="#2c2c2c" text-anchor="end" textLength="29.6" lengthAdjust="spacingAndGlyphs">DAIPCMOUT_GPIO_I2SDO</text>
<path d="M810 392.7 H813" stroke="#707070" stroke-width=".6"/>
<path d="M810 392.7 H850" stroke="#707070" stroke-width=".6"/>
<path d="M850 391.59999999999997 H854 L855.2 392.7 L854 393.8 H850 Z" fill="#fff" stroke="#8a8ab8" stroke-width=".45"/>
<text x="856.2" y="394.0" font-size="4.4" font-weight="bold" fill="#3a3ab4" textLength="14.5" lengthAdjust="spacingAndGlyphs">BT_UART</text>
<path d="M856.2 394.9 H870.7" stroke="#5050b8" stroke-width=".45" stroke-dasharray=".8 .4"/>
<text x="871.9000000000001" y="393.3" font-size="2.3" fill="#777" text-anchor="start">P6</text>
<text x="811.3" y="397.8" font-size="2.7" fill="#444" text-anchor="start" textLength="3.8" lengthAdjust="spacingAndGlyphs">C4</text>
<text x="808.8" y="399.3" font-size="2.9" fill="#2c2c2c" text-anchor="end" textLength="34.0" lengthAdjust="spacingAndGlyphs">DAIPCMIN_GPIO_I2SDI_MC1</text>
<path d="M810 398.3 H813" stroke="#707070" stroke-width=".6"/>
<text x="811.3" y="403.4" font-size="2.7" fill="#444" text-anchor="start" textLength="3.8" lengthAdjust="spacingAndGlyphs">D5</text>
<text x="808.8" y="404.9" font-size="2.9" fill="#2c2c2c" text-anchor="end" textLength="26.6" lengthAdjust="spacingAndGlyphs">DAISYNC_GPIO_I2SWS</text>
<path d="M810 403.9 H813" stroke="#707070" stroke-width=".6"/>
<text x="811.3" y="409.3" font-size="2.7" fill="#444" text-anchor="start" textLength="3.8" lengthAdjust="spacingAndGlyphs">D5</text>
<text x="808.8" y="410.8" font-size="2.9" fill="#2c2c2c" text-anchor="end" textLength="51.8" lengthAdjust="spacingAndGlyphs">DAIRST_GPIO_PWM_CLKO_MC1_EINT_BTPRI</text>
<path d="M810 409.8 H813" stroke="#707070" stroke-width=".6"/>
<text x="811.3" y="420.8" font-size="2.7" fill="#444" text-anchor="start" textLength="3.8" lengthAdjust="spacingAndGlyphs">A2</text>
<text x="808.8" y="422.3" font-size="2.9" fill="#2c2c2c" text-anchor="end" textLength="7.4" lengthAdjust="spacingAndGlyphs">TP_XP</text>
<path d="M810 421.3 H813" stroke="#707070" stroke-width=".6"/>
<text x="811.3" y="426.5" font-size="2.7" fill="#444" text-anchor="start" textLength="3.8" lengthAdjust="spacingAndGlyphs">H9</text>
<text x="808.8" y="428.0" font-size="2.9" fill="#2c2c2c" text-anchor="end" textLength="7.4" lengthAdjust="spacingAndGlyphs">TP_XM</text>
<path d="M810 427 H813" stroke="#707070" stroke-width=".6"/>
<text x="811.3" y="432.3" font-size="2.7" fill="#444" text-anchor="start" textLength="3.8" lengthAdjust="spacingAndGlyphs">K3</text>
<text x="808.8" y="433.8" font-size="2.9" fill="#2c2c2c" text-anchor="end" textLength="7.4" lengthAdjust="spacingAndGlyphs">TP_YP</text>
<path d="M810 432.8 H813" stroke="#707070" stroke-width=".6"/>
<text x="811.3" y="438.2" font-size="2.7" fill="#444" text-anchor="start" textLength="3.8" lengthAdjust="spacingAndGlyphs">C4</text>
<text x="808.8" y="439.7" font-size="2.9" fill="#2c2c2c" text-anchor="end" textLength="7.4" lengthAdjust="spacingAndGlyphs">TP_YM</text>
<path d="M810 438.7 H813" stroke="#707070" stroke-width=".6"/>
<text x="811.3" y="449.5" font-size="2.7" fill="#444" text-anchor="start" textLength="3.8" lengthAdjust="spacingAndGlyphs">E6</text>
<text x="808.8" y="451.0" font-size="2.9" fill="#2c2c2c" text-anchor="end" textLength="17.8" lengthAdjust="spacingAndGlyphs">SIMVCC0_GPIO</text>
<path d="M810 450 H813" stroke="#707070" stroke-width=".6"/>
<path d="M810 450 H851.8" stroke="#707070" stroke-width=".6"/>
<path d="M851.8 448.9 H855.8 L857.0 450 L855.8 451.1 H851.8 Z" fill="#fff" stroke="#8a8ab8" stroke-width=".45"/>
<text x="858.0" y="451.3" font-size="4.4" font-weight="bold" fill="#3a3ab4" textLength="14.5" lengthAdjust="spacingAndGlyphs">SIMRST0</text>
<path d="M858.0 452.2 H872.5" stroke="#5050b8" stroke-width=".45" stroke-dasharray=".8 .4"/>
<text x="873.7" y="450.6" font-size="2.3" fill="#777" text-anchor="start">P8</text>
<text x="811.3" y="455.1" font-size="2.7" fill="#444" text-anchor="start" textLength="3.8" lengthAdjust="spacingAndGlyphs">A2</text>
<text x="808.8" y="456.6" font-size="2.9" fill="#2c2c2c" text-anchor="end" textLength="22.2" lengthAdjust="spacingAndGlyphs">SIMRST0_GPIO_34</text>
<path d="M810 455.6 H813" stroke="#707070" stroke-width=".6"/>
<path d="M810 455.6 H851.8" stroke="#707070" stroke-width=".6"/>
<path d="M851.8 454.5 H855.8 L857.0 455.6 L855.8 456.70000000000005 H851.8 Z" fill="#fff" stroke="#8a8ab8" stroke-width=".45"/>
<text x="858.0" y="456.90000000000003" font-size="4.4" font-weight="bold" fill="#3a3ab4" textLength="14.5" lengthAdjust="spacingAndGlyphs">SIMCLK0</text>
<path d="M858.0 457.8 H872.5" stroke="#5050b8" stroke-width=".45" stroke-dasharray=".8 .4"/>
<text x="873.7" y="456.20000000000005" font-size="2.3" fill="#777" text-anchor="start">P6</text>
<text x="811.3" y="461.0" font-size="2.7" fill="#444" text-anchor="start" textLength="3.8" lengthAdjust="spacingAndGlyphs">G8</text>
<text x="808.8" y="462.5" font-size="2.9" fill="#2c2c2c" text-anchor="end" textLength="22.2" lengthAdjust="spacingAndGlyphs">SIMCLK0_GPIO_35</text>
<path d="M810 461.5 H813" stroke="#707070" stroke-width=".6"/>
<path d="M810 461.5 H851.8" stroke="#707070" stroke-width=".6"/>
<path d="M851.8 460.4 H855.8 L857.0 461.5 L855.8 462.6 H851.8 Z" fill="#fff" stroke="#8a8ab8" stroke-width=".45"/>
<text x="858.0" y="462.8" font-size="4.4" font-weight="bold" fill="#3a3ab4" textLength="14.5" lengthAdjust="spacingAndGlyphs">SIMDAT0</text>
<path d="M858.0 463.7 H872.5" stroke="#5050b8" stroke-width=".45" stroke-dasharray=".8 .4"/>
<text x="873.7" y="462.1" font-size="2.3" fill="#777" text-anchor="start">P8</text>
<text x="811.3" y="472.5" font-size="2.7" fill="#444" text-anchor="start" textLength="3.8" lengthAdjust="spacingAndGlyphs">K3</text>
<text x="808.8" y="474.0" font-size="2.9" fill="#2c2c2c" text-anchor="end" textLength="22.2" lengthAdjust="spacingAndGlyphs">SIMDAT0_GPIO_36</text>
<path d="M810 473 H813" stroke="#707070" stroke-width=".6"/>
<path d="M810 473 H851.8" stroke="#707070" stroke-width=".6"/>
<path d="M851.8 471.9 H855.8 L857.0 473 L855.8 474.1 H851.8 Z" fill="#fff" stroke="#8a8ab8" stroke-width=".45"/>
<text x="858.0" y="474.3" font-size="4.4" font-weight="bold" fill="#3a3ab4" textLength="14.5" lengthAdjust="spacingAndGlyphs">SIMRST1</text>
<path d="M858.0 475.2 H872.5" stroke="#5050b8" stroke-width=".45" stroke-dasharray=".8 .4"/>
<text x="873.7" y="473.6" font-size="2.3" fill="#777" text-anchor="start">P8</text>
<text x="811.3" y="478.2" font-size="2.7" fill="#444" text-anchor="start" textLength="3.8" lengthAdjust="spacingAndGlyphs">C4</text>
<text x="808.8" y="479.7" font-size="2.9" fill="#2c2c2c" text-anchor="end" textLength="22.2" lengthAdjust="spacingAndGlyphs">SIMRST1_GPIO_37</text>
<path d="M810 478.7 H813" stroke="#707070" stroke-width=".6"/>
<path d="M810 478.7 H851.8" stroke="#707070" stroke-width=".6"/>
<path d="M851.8 477.59999999999997 H855.8 L857.0 478.7 L855.8 479.8 H851.8 Z" fill="#fff" stroke="#8a8ab8" stroke-width=".45"/>
<text x="858.0" y="480.0" font-size="4.4" font-weight="bold" fill="#3a3ab4" textLength="14.5" lengthAdjust="spacingAndGlyphs">SIMCLK1</text>
<path d="M858.0 480.9 H872.5" stroke="#5050b8" stroke-width=".45" stroke-dasharray=".8 .4"/>
<text x="873.7" y="479.3" font-size="2.3" fill="#777" text-anchor="start">P4</text>
<text x="811.3" y="484.0" font-size="2.7" fill="#444" text-anchor="start" textLength="3.8" lengthAdjust="spacingAndGlyphs">H9</text>
<text x="808.8" y="485.5" font-size="2.9" fill="#2c2c2c" text-anchor="end" textLength="22.2" lengthAdjust="spacingAndGlyphs">SIMCLK1_GPIO_38</text>
<path d="M810 484.5 H813" stroke="#707070" stroke-width=".6"/>
<path d="M810 484.5 H851.8" stroke="#707070" stroke-width=".6"/>
<path d="M851.8 483.4 H855.8 L857.0 484.5 L855.8 485.6 H851.8 Z" fill="#fff" stroke="#8a8ab8" stroke-width=".45"/>
<text x="858.0" y="485.8" font-size="4.4" font-weight="bold" fill="#3a3ab4" textLength="14.5" lengthAdjust="spacingAndGlyphs">SIMDAT1</text>
<path d="M858.0 486.7 H872.5" stroke="#5050b8" stroke-width=".45" stroke-dasharray=".8 .4"/>
<text x="873.7" y="485.1" font-size="2.3" fill="#777" text-anchor="start">P11</text>
<text x="811.3" y="495.5" font-size="2.7" fill="#444" text-anchor="start" textLength="3.8" lengthAdjust="spacingAndGlyphs">G8</text>
<text x="808.8" y="497.0" font-size="2.9" fill="#2c2c2c" text-anchor="end" textLength="22.2" lengthAdjust="spacingAndGlyphs">SIMDAT1_GPIO_39</text>
<path d="M810 496 H813" stroke="#707070" stroke-width=".6"/>
<text x="811.3" y="501.1" font-size="2.7" fill="#444" text-anchor="start" textLength="3.8" lengthAdjust="spacingAndGlyphs">G8</text>
<text x="808.8" y="502.6" font-size="2.9" fill="#2c2c2c" text-anchor="end" textLength="35.5" lengthAdjust="spacingAndGlyphs">SIMRST2_GPIO_MCDA3_U1CTS</text>
<path d="M810 501.6 H813" stroke="#707070" stroke-width=".6"/>
<text x="811.3" y="507.0" font-size="2.7" fill="#444" text-anchor="start" textLength="3.8" lengthAdjust="spacingAndGlyphs">G8</text>
<text x="808.8" y="508.5" font-size="2.9" fill="#2c2c2c" text-anchor="end" textLength="41.4" lengthAdjust="spacingAndGlyphs">SIMCLK2_GPIO_MCCK_U1RTS_EINT</text>
<path d="M810 507.5 H813" stroke="#707070" stroke-width=".6"/>
<text x="811.3" y="518.5" font-size="2.7" fill="#444" text-anchor="start" textLength="3.8" lengthAdjust="spacingAndGlyphs">B3</text>
<text x="808.8" y="520.0" font-size="2.9" fill="#2c2c2c" text-anchor="end" textLength="35.5" lengthAdjust="spacingAndGlyphs">SIMDAT2_GPIO_MCCM0_MC1DA</text>
<path d="M810 519 H813" stroke="#707070" stroke-width=".6"/>
<text x="811.3" y="527.0" font-size="2.7" fill="#444" text-anchor="start" textLength="3.8" lengthAdjust="spacingAndGlyphs">H9</text>
<text x="808.8" y="528.5" font-size="2.9" fill="#2c2c2c" text-anchor="end" textLength="40.0" lengthAdjust="spacingAndGlyphs">SPI_CS_GPIO_EINT_MCINS_U2RX</text>
<path d="M810 527.5 H813" stroke="#707070" stroke-width=".6"/>
<text x="811.3" y="532.9" font-size="2.7" fill="#444" text-anchor="start" textLength="3.8" lengthAdjust="spacingAndGlyphs">G8</text>
<text x="808.8" y="534.4" font-size="2.9" fill="#2c2c2c" text-anchor="end" textLength="22.2" lengthAdjust="spacingAndGlyphs">SPI_SCK_GPIO_53</text>
<path d="M810 533.4 H813" stroke="#707070" stroke-width=".6"/>
<text x="811.3" y="538.5" font-size="2.7" fill="#444" text-anchor="start" textLength="3.8" lengthAdjust="spacingAndGlyphs">A2</text>
<text x="808.8" y="540.0" font-size="2.9" fill="#2c2c2c" text-anchor="end" textLength="23.7" lengthAdjust="spacingAndGlyphs">SPI_MOSI_GPIO_54</text>
<path d="M810 539 H813" stroke="#707070" stroke-width=".6"/>
<text x="811.3" y="544.2" font-size="2.7" fill="#444" text-anchor="start" textLength="3.8" lengthAdjust="spacingAndGlyphs">D5</text>
<text x="808.8" y="545.7" font-size="2.9" fill="#2c2c2c" text-anchor="end" textLength="26.6" lengthAdjust="spacingAndGlyphs">SPI_MISO_GPIO_CLKO</text>
<path d="M810 544.7 H813" stroke="#707070" stroke-width=".6"/>
<text x="811.3" y="555.7" font-size="2.7" fill="#444" text-anchor="start" textLength="3.8" lengthAdjust="spacingAndGlyphs">B3</text>
<text x="808.8" y="557.2" font-size="2.9" fill="#2c2c2c" text-anchor="end" textLength="26.6" lengthAdjust="spacingAndGlyphs">SPI_WP_GPIO_PWM_56</text>
<path d="M810 556.2 H813" stroke="#707070" stroke-width=".6"/>
<path d="M810 556.2 H851.8" stroke="#707070" stroke-width=".6"/>
<path d="M851.8 555.1 H855.8 L857.0 556.2 L855.8 557.3000000000001 H851.8 Z" fill="#fff" stroke="#8a8ab8" stroke-width=".45"/>
<text x="858.0" y="557.5" font-size="4.4" font-weight="bold" fill="#3a3ab4" textLength="14.5" lengthAdjust="spacingAndGlyphs">MC_CLK</text>
<path d="M858.0 558.4000000000001 H872.5" stroke="#5050b8" stroke-width=".45" stroke-dasharray=".8 .4"/>
<text x="873.7" y="556.8000000000001" font-size="2.3" fill="#777" text-anchor="start">P6</text>
<text x="811.3" y="564.3" font-size="2.7" fill="#444" text-anchor="start" textLength="3.8" lengthAdjust="spacingAndGlyphs">H9</text>
<text x="808.8" y="565.8" font-size="2.9" fill="#2c2c2c" text-anchor="end" textLength="37.0" lengthAdjust="spacingAndGlyphs">MCCK_GPIO_MC0CK_CLKO_BTRF</text>
<path d="M810 564.8 H813" stroke="#707070" stroke-width=".6"/>
<path d="M810 564.8 H851.8" stroke="#707070" stroke-width=".6"/>
<path d="M851.8 563.6999999999999 H855.8 L857.0 564.8 L855.8 565.9 H851.8 Z" fill="#fff" stroke="#8a8ab8" stroke-width=".45"/>
<text x="858.0" y="566.0999999999999" font-size="4.4" font-weight="bold" fill="#3a3ab4" textLength="14.5" lengthAdjust="spacingAndGlyphs">MC_CMD</text>
<path d="M858.0 567.0 H872.5" stroke="#5050b8" stroke-width=".45" stroke-dasharray=".8 .4"/>
<text x="873.7" y="565.4" font-size="2.3" fill="#777" text-anchor="start">P6</text>
<text x="811.3" y="570.1" font-size="2.7" fill="#444" text-anchor="start" textLength="3.8" lengthAdjust="spacingAndGlyphs">B3</text>
<text x="808.8" y="571.6" font-size="2.9" fill="#2c2c2c" text-anchor="end" textLength="31.1" lengthAdjust="spacingAndGlyphs">MCCM0_GPIO_MC0CM_BTRF</text>
<path d="M810 570.6 H813" stroke="#707070" stroke-width=".6"/>
<path d="M810 570.6 H851.8" stroke="#707070" stroke-width=".6"/>
<path d="M851.8 569.5 H855.8 L857.0 570.6 L855.8 571.7 H851.8 Z" fill="#fff" stroke="#8a8ab8" stroke-width=".45"/>
<text x="858.0" y="571.9" font-size="4.4" font-weight="bold" fill="#3a3ab4" textLength="14.5" lengthAdjust="spacingAndGlyphs">MC_D0</text>
<path d="M858.0 572.8000000000001 H872.5" stroke="#5050b8" stroke-width=".45" stroke-dasharray=".8 .4"/>
<text x="873.7" y="571.2" font-size="2.3" fill="#777" text-anchor="start">P8</text>
<text x="811.3" y="575.8" font-size="2.7" fill="#444" text-anchor="start" textLength="3.8" lengthAdjust="spacingAndGlyphs">K3</text>
<text x="808.8" y="577.3" font-size="2.9" fill="#2c2c2c" text-anchor="end" textLength="19.2" lengthAdjust="spacingAndGlyphs">MCDA0_GPIO_57</text>
<path d="M810 576.3 H813" stroke="#707070" stroke-width=".6"/>
<path d="M810 576.3 H851.8" stroke="#707070" stroke-width=".6"/>
<path d="M851.8 575.1999999999999 H855.8 L857.0 576.3 L855.8 577.4 H851.8 Z" fill="#fff" stroke="#8a8ab8" stroke-width=".45"/>
<text x="858.0" y="577.5999999999999" font-size="4.4" font-weight="bold" fill="#3a3ab4" textLength="14.5" lengthAdjust="spacingAndGlyphs">MC_D1</text>
<path d="M858.0 578.5 H872.5" stroke="#5050b8" stroke-width=".45" stroke-dasharray=".8 .4"/>
<text x="873.7" y="576.9" font-size="2.3" fill="#777" text-anchor="start">P4</text>
<text x="811.3" y="581.4" font-size="2.7" fill="#444" text-anchor="start" textLength="3.8" lengthAdjust="spacingAndGlyphs">B3</text>
<text x="808.8" y="582.9" font-size="2.9" fill="#2c2c2c" text-anchor="end" textLength="19.2" lengthAdjust="spacingAndGlyphs">MCDA1_GPIO_58</text>
<path d="M810 581.9 H813" stroke="#707070" stroke-width=".6"/>
<path d="M810 581.9 H851.8" stroke="#707070" stroke-width=".6"/>
<path d="M851.8 580.8 H855.8 L857.0 581.9 L855.8 583.0 H851.8 Z" fill="#fff" stroke="#8a8ab8" stroke-width=".45"/>
<text x="858.0" y="583.1999999999999" font-size="4.4" font-weight="bold" fill="#3a3ab4" textLength="14.5" lengthAdjust="spacingAndGlyphs">MC_D2</text>
<path d="M858.0 584.1 H872.5" stroke="#5050b8" stroke-width=".45" stroke-dasharray=".8 .4"/>
<text x="873.7" y="582.5" font-size="2.3" fill="#777" text-anchor="start">P4</text>
<text x="811.3" y="587.3" font-size="2.7" fill="#444" text-anchor="start" textLength="3.8" lengthAdjust="spacingAndGlyphs">K3</text>
<text x="808.8" y="588.8" font-size="2.9" fill="#2c2c2c" text-anchor="end" textLength="25.2" lengthAdjust="spacingAndGlyphs">MCDA2_GPIO_LPCE1B</text>
<path d="M810 587.8 H813" stroke="#707070" stroke-width=".6"/>
<path d="M810 587.8 H851.8" stroke="#707070" stroke-width=".6"/>
<path d="M851.8 586.6999999999999 H855.8 L857.0 587.8 L855.8 588.9 H851.8 Z" fill="#fff" stroke="#8a8ab8" stroke-width=".45"/>
<text x="858.0" y="589.0999999999999" font-size="4.4" font-weight="bold" fill="#3a3ab4" textLength="14.5" lengthAdjust="spacingAndGlyphs">MC_D3</text>
<path d="M858.0 590.0 H872.5" stroke="#5050b8" stroke-width=".45" stroke-dasharray=".8 .4"/>
<text x="873.7" y="588.4" font-size="2.3" fill="#777" text-anchor="start">P6</text>
<text x="811.3" y="595.8" font-size="2.7" fill="#444" text-anchor="start" textLength="3.8" lengthAdjust="spacingAndGlyphs">J2</text>
<text x="808.8" y="597.3" font-size="2.9" fill="#2c2c2c" text-anchor="end" textLength="29.6" lengthAdjust="spacingAndGlyphs">MCDA3_GPIO_LPTE_EINT</text>
<path d="M810 596.3 H813" stroke="#707070" stroke-width=".6"/>
<path d="M810 596.3 H851.8" stroke="#707070" stroke-width=".6"/>
<path d="M851.8 595.1999999999999 H855.8 L857.0 596.3 L855.8 597.4 H851.8 Z" fill="#fff" stroke="#8a8ab8" stroke-width=".45"/>
<text x="858.0" y="597.5999999999999" font-size="4.4" font-weight="bold" fill="#3a3ab4" textLength="14.5" lengthAdjust="spacingAndGlyphs">TF_DET</text>
<path d="M858.0 598.5 H872.5" stroke="#5050b8" stroke-width=".45" stroke-dasharray=".8 .4"/>
<text x="873.7" y="596.9" font-size="2.3" fill="#777" text-anchor="start">P4</text>
<text x="811.3" y="607.3" font-size="2.7" fill="#444" text-anchor="start" textLength="3.8" lengthAdjust="spacingAndGlyphs">F7</text>
<text x="808.8" y="608.8" font-size="2.9" fill="#2c2c2c" text-anchor="end" textLength="35.5" lengthAdjust="spacingAndGlyphs">MCINS_GPIO_EINT_KCOL_PWM</text>
<path d="M810 607.8 H813" stroke="#707070" stroke-width=".6"/>
<path d="M810 607.8 H851.8" stroke="#707070" stroke-width=".6"/>
<path d="M851.8 606.6999999999999 H855.8 L857.0 607.8 L855.8 608.9 H851.8 Z" fill="#fff" stroke="#8a8ab8" stroke-width=".45"/>
<text x="858.0" y="609.0999999999999" font-size="4.4" font-weight="bold" fill="#3a3ab4" textLength="30" lengthAdjust="spacingAndGlyphs">GPIO_CHARGE_DET</text>
<path d="M858.0 610.0 H888.0" stroke="#5050b8" stroke-width=".45" stroke-dasharray=".8 .4"/>
<text x="889.2" y="608.4" font-size="2.3" fill="#777" text-anchor="start">P4</text>
<text x="811.3" y="616.2" font-size="2.7" fill="#444" text-anchor="start" textLength="3.8" lengthAdjust="spacingAndGlyphs">B3</text>
<text x="808.8" y="617.7" font-size="2.9" fill="#2c2c2c" text-anchor="end" textLength="20.7" lengthAdjust="spacingAndGlyphs">SRCLKENAI_GPIO</text>
<path d="M810 616.7 H813" stroke="#707070" stroke-width=".6"/>
<path d="M810 616.7 H843 M829 614.2 V619.2 M831 614.2 V619.2 M843 614.2 V619.2 M845 614.2 V619.2" stroke="#707070" stroke-width=".5" fill="none"/>
<rect x="818" y="613.5" width="28" height="6.2" fill="none" stroke="#f4f4b0" stroke-width=".5"/>
<text x="819" y="615.9000000000001" font-size="2.1" fill="#777" text-anchor="start">C101</text>
<text x="811.3" y="621.8" font-size="2.7" fill="#444" text-anchor="start" textLength="3.8" lengthAdjust="spacingAndGlyphs">D5</text>
<text x="808.8" y="623.3" font-size="2.9" fill="#2c2c2c" text-anchor="end" textLength="10.4" lengthAdjust="spacingAndGlyphs">SYSRSTB</text>
<path d="M810 622.3 H813" stroke="#707070" stroke-width=".6"/>
<text x="811.3" y="627.5" font-size="2.7" fill="#444" text-anchor="start" textLength="3.8" lengthAdjust="spacingAndGlyphs">K3</text>
<text x="808.8" y="629.0" font-size="2.9" fill="#2c2c2c" text-anchor="end" textLength="11.8" lengthAdjust="spacingAndGlyphs">TESTMODE</text>
<path d="M810 628 H813" stroke="#707070" stroke-width=".6"/>
<path d="M810 628 H851.8" stroke="#707070" stroke-width=".6"/>
<path d="M851.8 626.9 H855.8 L857.0 628 L855.8 629.1 H851.8 Z" fill="#fff" stroke="#8a8ab8" stroke-width=".45"/>
<text x="858.0" y="629.3" font-size="4.4" font-weight="bold" fill="#3a3ab4" textLength="14.5" lengthAdjust="spacingAndGlyphs">RESET</text>
<path d="M858.0 630.2 H872.5" stroke="#5050b8" stroke-width=".45" stroke-dasharray=".8 .4"/>
<text x="873.7" y="628.6" font-size="2.3" fill="#777" text-anchor="start">P11</text>
<text x="811.3" y="633.3" font-size="2.7" fill="#444" text-anchor="start" textLength="3.8" lengthAdjust="spacingAndGlyphs">C4</text>
<text x="808.8" y="634.8" font-size="2.9" fill="#2c2c2c" text-anchor="end" textLength="5.9" lengthAdjust="spacingAndGlyphs">XOUT</text>
<path d="M810 633.8 H813" stroke="#707070" stroke-width=".6"/>
<path d="M810 633.8 H831 M831 631.8 V635.8" stroke="#707070" stroke-width=".5" fill="none"/>
<text x="811.3" y="641.9" font-size="2.7" fill="#444" text-anchor="start" textLength="3.8" lengthAdjust="spacingAndGlyphs">E6</text>
<text x="808.8" y="643.4" font-size="2.9" fill="#2c2c2c" text-anchor="end" textLength="11.8" lengthAdjust="spacingAndGlyphs">GND_XTAL</text>
<path d="M810 642.4 H813" stroke="#707070" stroke-width=".6"/>
<path d="M810 642.4 H831 M831 640.4 V644.4" stroke="#707070" stroke-width=".5" fill="none"/>
<text x="811.3" y="647.5" font-size="2.7" fill="#444" text-anchor="start" textLength="3.8" lengthAdjust="spacingAndGlyphs">F7</text>
<text x="808.8" y="649.0" font-size="2.9" fill="#2c2c2c" text-anchor="end" textLength="10.4" lengthAdjust="spacingAndGlyphs">FSOURCE</text>
<path d="M810 648 H813" stroke="#707070" stroke-width=".6"/>
<path d="M810 648 H893.5 V640 l-1.4 -1 l2.8 -1.6 l-2.8 -1.6 l2.8 -1.6 l-2.8 -1.6 l1.4 -1 V617" stroke="#707070" stroke-width=".55" fill="none"/>
<path d="M892.2 617.3 L894.8 617.3 L893.5 614.8 Z" fill="#222"/>
<text x="887" y="613.6" font-size="4.3" font-weight="bold" fill="#3a3ab4" textLength="13" lengthAdjust="spacingAndGlyphs">VRTC28</text>
<rect x="890.5" y="628" width="5" height="16" fill="none" stroke="#f4f4b0" stroke-width=".5"/>
<text x="890" y="646" font-size="2" fill="#777" text-anchor="end">R105</text>
<text x="811.3" y="667.5" font-size="2.7" fill="#444" text-anchor="start" textLength="3.8" lengthAdjust="spacingAndGlyphs">K3</text>
<text x="808.8" y="669.0" font-size="2.9" fill="#2c2c2c" text-anchor="end" textLength="13.3" lengthAdjust="spacingAndGlyphs">CLKSQ_SEL</text>
<path d="M810 668 H813" stroke="#707070" stroke-width=".6"/>
<text x="811.3" y="676.1" font-size="2.7" fill="#444" text-anchor="start" textLength="3.8" lengthAdjust="spacingAndGlyphs">F7</text>
<text x="808.8" y="677.6" font-size="2.9" fill="#2c2c2c" text-anchor="end" textLength="10.4" lengthAdjust="spacingAndGlyphs">RTC_XIN</text>
<path d="M810 676.6 H813" stroke="#707070" stroke-width=".6"/>
<text x="528" y="700" font-size="4.3" font-weight="bold" fill="#3a3ab4" textLength="16" lengthAdjust="spacingAndGlyphs">VBAT_IN</text>
<text x="531" y="696" font-size="2" fill="#888" text-anchor="start">P2 P8</text>
<path d="M533 700.8 H535.4 L534.2 703.5 Z" fill="none" stroke="#999" stroke-width=".4"/>
<path d="M534.2 703.5 V718 l1.5 1.2 l-3 2.2 l3 2.2 l-3 2.2 l3 2.2 l-1.5 1.2 V746 l1.5 1.2 l-3 2.2 l3 2.2 l-3 2.2 l3 2.2 l-1.5 1.2 V771" fill="none" stroke="#707070" stroke-width=".55"/>
<path d="M534.2 737.3 H555" stroke="#707070" stroke-width=".55"/><circle cx="534.2" cy="737.3" r=".9" fill="#223"/>
<path d="M532 771.5 H536.4 M533 773 H535.4" stroke="#aaa" stroke-width=".5"/>
<rect x="531" y="708" width="6.5" height="60" fill="none" stroke="#fafad0" stroke-width=".6"/>
<path d="M555 736.3 H558.5 L559.5 737.3 L558.5 738.3 H555 Z" fill="#fff" stroke="#8888c8" stroke-width=".4"/>
<text x="560.5" y="736.8" font-size="4.3" font-weight="bold" fill="#3a3ab4" textLength="15" lengthAdjust="spacingAndGlyphs">ADC_BAT</text>
<path d="M560.5 737.9 H575.5" stroke="#6060c0" stroke-width=".35" stroke-dasharray=".8 .5"/>
<text x="577" y="735" font-size="2" fill="#888" text-anchor="start">P10</text>
<text x="532.5" y="728" font-size="2" fill="#777" text-anchor="end">R101</text>
<text x="532.5" y="757" font-size="2" fill="#777" text-anchor="end">R102</text>
<rect x="1025" y="562.8" width="25" height="23.200000000000045" fill="none" stroke="#f0f0a0" stroke-width=".7"/>
<circle cx="1037.3" cy="575" r="2.9" fill="none" stroke="#444" stroke-width=".6"/><circle cx="1037.3" cy="575" r="1.2" fill="none" stroke="#666" stroke-width=".4"/>
<path d="M1032.8 575 H1041.8 M1037.3 570.5 V580.5" stroke="#555" stroke-width=".4"/>
<text x="1037.5" y="567.0" font-size="2.6" fill="#222" text-anchor="middle" textLength="22" lengthAdjust="spacingAndGlyphs" font-weight="bold">FC TEST CLK MARK</text>
<text x="1037.5" y="570.0" font-size="2.6" fill="#222" text-anchor="middle" textLength="7" lengthAdjust="spacingAndGlyphs" font-weight="bold">FID1</text>
<rect x="1053" y="562.8" width="24.5" height="23.200000000000045" fill="none" stroke="#f0f0a0" stroke-width=".7"/>
<circle cx="1064" cy="575" r="2.9" fill="none" stroke="#444" stroke-width=".6"/><circle cx="1064" cy="575" r="1.2" fill="none" stroke="#666" stroke-width=".4"/>
<path d="M1059.5 575 H1068.5 M1064 570.5 V580.5" stroke="#555" stroke-width=".4"/>
<text x="1065.25" y="567.0" font-size="2.6" fill="#222" text-anchor="middle" textLength="22" lengthAdjust="spacingAndGlyphs" font-weight="bold">FC TEST CLK MARK</text>
<text x="1065.25" y="570.0" font-size="2.6" fill="#222" text-anchor="middle" textLength="7" lengthAdjust="spacingAndGlyphs" font-weight="bold">FID2</text>
<rect x="1082.7" y="563.5" width="24.299999999999955" height="23.5" fill="none" stroke="#f0f0a0" stroke-width=".7"/>
<circle cx="1093.8" cy="576.8" r="2.9" fill="none" stroke="#444" stroke-width=".6"/><circle cx="1093.8" cy="576.8" r="1.2" fill="none" stroke="#666" stroke-width=".4"/>
<path d="M1089.3 576.8 H1098.3 M1093.8 572.3 V582.3" stroke="#555" stroke-width=".4"/>
<text x="1094.85" y="567.7" font-size="2.6" fill="#222" text-anchor="middle" textLength="22" lengthAdjust="spacingAndGlyphs" font-weight="bold">FC TEST CLK MARK</text>
<text x="1094.85" y="570.7" font-size="2.6" fill="#222" text-anchor="middle" textLength="7" lengthAdjust="spacingAndGlyphs" font-weight="bold">MARK1</text>
<rect x="1110" y="563.5" width="25" height="23.5" fill="none" stroke="#f0f0a0" stroke-width=".7"/>
<circle cx="1121" cy="576.8" r="2.9" fill="none" stroke="#444" stroke-width=".6"/><circle cx="1121" cy="576.8" r="1.2" fill="none" stroke="#666" stroke-width=".4"/>
<path d="M1116.5 576.8 H1125.5 M1121 572.3 V582.3" stroke="#555" stroke-width=".4"/>
<text x="1122.5" y="567.7" font-size="2.6" fill="#222" text-anchor="middle" textLength="22" lengthAdjust="spacingAndGlyphs" font-weight="bold">FC TEST CLK MARK</text>
<text x="1122.5" y="570.7" font-size="2.6" fill="#222" text-anchor="middle" textLength="7" lengthAdjust="spacingAndGlyphs" font-weight="bold">MARK2</text>
<rect x="1048.5" y="657" width="105.5" height="29" fill="none" stroke="#f0f0a0" stroke-width=".7"/>
<circle cx="1055.9" cy="671.6" r="3.6" fill="none" stroke="#444" stroke-width=".65"/>
<path d="M1055.9 675.2 V685" stroke="#555" stroke-width=".5"/>
<text x="1055.9" y="665.6" font-size="2.7" fill="#222" text-anchor="middle" textLength="7.5" lengthAdjust="spacingAndGlyphs" font-weight="bold">HOLE1</text>
<path d="M1065.4 658 V685" stroke="#c8c890" stroke-width=".6" stroke-dasharray="1 .8"/>
<path d="M1063.8000000000002 657.5 V685.5 M1067.0 657.5 V685.5" stroke="#f0f0a0" stroke-width=".5"/>
<circle cx="1074" cy="671.6" r="3.6" fill="none" stroke="#444" stroke-width=".65"/>
<path d="M1074 675.2 V685" stroke="#555" stroke-width=".5"/>
<text x="1074" y="665.6" font-size="2.7" fill="#222" text-anchor="middle" textLength="7.5" lengthAdjust="spacingAndGlyphs" font-weight="bold">HOLE2</text>
<path d="M1083.5 658 V685" stroke="#c8c890" stroke-width=".6" stroke-dasharray="1 .8"/>
<path d="M1081.9 657.5 V685.5 M1085.1 657.5 V685.5" stroke="#f0f0a0" stroke-width=".5"/>
<circle cx="1091.5" cy="671.6" r="3.6" fill="none" stroke="#444" stroke-width=".65"/>
<path d="M1091.5 675.2 V685" stroke="#555" stroke-width=".5"/>
<text x="1091.5" y="665.6" font-size="2.7" fill="#222" text-anchor="middle" textLength="7.5" lengthAdjust="spacingAndGlyphs" font-weight="bold">HOLE3</text>
<path d="M1101.0 658 V685" stroke="#c8c890" stroke-width=".6" stroke-dasharray="1 .8"/>
<path d="M1099.4 657.5 V685.5 M1102.6 657.5 V685.5" stroke="#f0f0a0" stroke-width=".5"/>
<circle cx="1109.7" cy="671.6" r="3.6" fill="none" stroke="#444" stroke-width=".65"/>
<path d="M1109.7 675.2 V685" stroke="#555" stroke-width=".5"/>
<text x="1109.7" y="665.6" font-size="2.7" fill="#222" text-anchor="middle" textLength="7.5" lengthAdjust="spacingAndGlyphs" font-weight="bold">HOLE4</text>
<path d="M1119.2 658 V685" stroke="#c8c890" stroke-width=".6" stroke-dasharray="1 .8"/>
<path d="M1117.6000000000001 657.5 V685.5 M1120.8 657.5 V685.5" stroke="#f0f0a0" stroke-width=".5"/>
<circle cx="1125.3" cy="671.6" r="3.6" fill="none" stroke="#444" stroke-width=".65"/>
<path d="M1125.3 675.2 V685" stroke="#555" stroke-width=".5"/>
<text x="1125.3" y="665.6" font-size="2.7" fill="#222" text-anchor="middle" textLength="7.5" lengthAdjust="spacingAndGlyphs" font-weight="bold">HOLE5</text>
<path d="M1134.8 658 V685" stroke="#c8c890" stroke-width=".6" stroke-dasharray="1 .8"/>
<path d="M1133.2 657.5 V685.5 M1136.3999999999999 657.5 V685.5" stroke="#f0f0a0" stroke-width=".5"/>
<circle cx="1143.2" cy="671.6" r="3.6" fill="none" stroke="#444" stroke-width=".65"/>
<path d="M1143.2 675.2 V685" stroke="#555" stroke-width=".5"/>
<text x="1143.2" y="665.6" font-size="2.7" fill="#222" text-anchor="middle" textLength="7.5" lengthAdjust="spacingAndGlyphs" font-weight="bold">HOLE6</text>
<path d="M1152.5 658 V685" stroke="#c8c890" stroke-width=".6" stroke-dasharray="1 .8"/>
<path d="M1150.9 657.5 V685.5 M1154.1 657.5 V685.5" stroke="#f0f0a0" stroke-width=".5"/>
<path d="M1055.9 685 H1143.2" stroke="#555" stroke-width=".55"/>
<circle cx="1074" cy="685" r=".8" fill="#333"/>
<circle cx="1091.5" cy="685" r=".8" fill="#333"/>
<circle cx="1109.7" cy="685" r=".8" fill="#333"/>
<circle cx="1125.3" cy="685" r=".8" fill="#333"/>
<path d="M1109.7 685 V694 M1106.5 694 H1113 M1108 695.5 H1111.5" stroke="#bbb" stroke-width=".5"/>
<path d="M1107.6 674 q-1 4 .8 6.5 q1.8 -1.5 1.6 -6" fill="none" stroke="#3b3bb0" stroke-width=".6"/>
<rect x="1028" y="707" width="21" height="12" fill="none" stroke="#f0f0a0" stroke-width="1.6"/><rect x="1028.6" y="707.6" width="19.8" height="10.8" fill="none" stroke="#444" stroke-width=".5"/>
<rect x="1028" y="722.8" width="21" height="12.2" fill="none" stroke="#f0f0a0" stroke-width="1.6"/><rect x="1028.6" y="723.4" width="19.8" height="11" fill="none" stroke="#444" stroke-width=".5"/>
<text x="1029" y="710.3" font-size="3" fill="#111" text-anchor="start" textLength="6" lengthAdjust="spacingAndGlyphs" font-family="Liberation Serif, serif" font-weight="bold">PCB</text>
<text x="1038.5" y="714" font-size="2.6" fill="#222" text-anchor="middle" textLength="12" lengthAdjust="spacingAndGlyphs">ITEL_G2422</text>
<text x="1038.5" y="717.6" font-size="2.6" fill="#222" text-anchor="middle" textLength="7" lengthAdjust="spacingAndGlyphs">V1.0_1</text>
<text x="1029" y="725.8" font-size="2.2" fill="#111" text-anchor="start" textLength="7" lengthAdjust="spacingAndGlyphs" font-weight="bold">SHIELD</text>
<text x="1038.5" y="729.6" font-size="2.6" fill="#222" text-anchor="middle" textLength="15" lengthAdjust="spacingAndGlyphs">SHIELD_COVER</text>
<text x="1038.5" y="733.4" font-size="2.6" fill="#222" text-anchor="middle" textLength="14" lengthAdjust="spacingAndGlyphs">SHIELDING-2</text>
<path d="M1178.5 814.5 V743.5 H1322.5 M1178.5 757.5 H1322.5 M1107.5 771.5 H1322.5 M1107.5 786.5 H1322.5 M1107.5 800.5 H1178.5 M1178.5 807.5 H1322.5 M1107.5 814.5 V771.5 M1150.5 771.5 V814.5 M1270.5 807.5 V814.5 M1107.5 814.5 H1322.5" fill="none" stroke="#555" stroke-width=".8"/>
<text x="1181.5" y="748.5" font-size="2.6" fill="#222" text-anchor="start" textLength="9" lengthAdjust="spacingAndGlyphs">MODEL NAME</text>
<text x="1181.5" y="762.5" font-size="2.6" fill="#222" text-anchor="start" textLength="10" lengthAdjust="spacingAndGlyphs">DOCUMENT NO.</text>
<text x="1181.5" y="776.8" font-size="2.6" fill="#222" text-anchor="start" textLength="9" lengthAdjust="spacingAndGlyphs">DEPARTMENT</text>
<text x="1181.5" y="791.5" font-size="2.6" fill="#222" text-anchor="start" textLength="8" lengthAdjust="spacingAndGlyphs">COMPANY</text>
<text x="1110" y="776.8" font-size="2.6" fill="#222" text-anchor="start" textLength="9" lengthAdjust="spacingAndGlyphs">DESIGNER</text>
<text x="1153" y="776.8" font-size="2.6" fill="#222" text-anchor="start" textLength="5" lengthAdjust="spacingAndGlyphs">DATE</text>
<text x="1110" y="791.5" font-size="2.6" fill="#222" text-anchor="start" textLength="4" lengthAdjust="spacingAndGlyphs">CHK</text>
<text x="1153" y="788.5" font-size="2.6" fill="#222" text-anchor="start" textLength="5" lengthAdjust="spacingAndGlyphs">DATE</text>
<text x="1110" y="806" font-size="2.6" fill="#222" text-anchor="start" textLength="8" lengthAdjust="spacingAndGlyphs">APPROVED</text>
<text x="1153" y="806" font-size="2.6" fill="#222" text-anchor="start" textLength="5" lengthAdjust="spacingAndGlyphs">DATE</text>
<text x="1200.5" y="783.6" font-size="5.2" fill="#111" textLength="47" lengthAdjust="spacingAndGlyphs">ITEL-SH Hardware RD</text>
<text x="1200.5" y="800" font-family="Liberation Serif, serif" font-size="5.4" fill="#111" textLength="57.5" lengthAdjust="spacingAndGlyphs">TRANSSION HOLDINGS</text>
<text x="1201" y="813" font-family="Liberation Serif, serif" font-weight="bold" font-size="5.2" fill="#111" textLength="46" lengthAdjust="spacingAndGlyphs">¼¤ÃÜ TOP SECRET</text>
</svg>
</div>
<div class="abs" style="left:1505px;top:161px;width:15px;height:674px;background:#fff"></div>
<svg class="abs" style="left:1504.5px;top:161px" width="17" height="17" viewBox="0 0 17 17"><rect x=".5" y=".5" width="16" height="16" fill="#fff" stroke="#b8b8b8"/><path d="M4.8 11.3 L8.5 7.5 L12.2 11.3" stroke="#404040" stroke-width="1.4" fill="none"/></svg>
<svg class="abs" style="left:1504.5px;top:819px" width="17" height="17" viewBox="0 0 17 17"><rect x=".5" y=".5" width="16" height="16" fill="#fff" stroke="#b8b8b8"/><path d="M4.8 6.3 L8.5 10.1 L12.2 6.3" stroke="#404040" stroke-width="1.4" fill="none"/></svg>
<div class="abs" style="left:1505px;top:225px;width:15px;height:44px;background:#dcdcdc;border:1px solid #c8c8c8;box-sizing:border-box"></div>
<div class="abs" style="left:1509px;top:243px;width:7px;height:7px;background:linear-gradient(#555 0,#555 1.5px,transparent 1.5px,transparent 3px,#555 3px,#555 4.5px,transparent 4.5px,transparent 5.5px,#555 5.5px,#555 7px)"></div>
<div class="abs" style="left:0;top:832px;width:261px;height:4px;background:#e4eaf4"></div><div class="abs" style="left:261px;top:834px;width:1259px;height:2px;background:#e4eaf4"></div>
<div class="abs" id="status"></div>
<div class="abs mono" style="left:0;top:842px;color:#000">Version:1.0.0.52</div>
<div class="abs mono" style="right:1.5px;top:842px;color:#fff">Current [G2422_Main_SCH]</div>
</body></html>
